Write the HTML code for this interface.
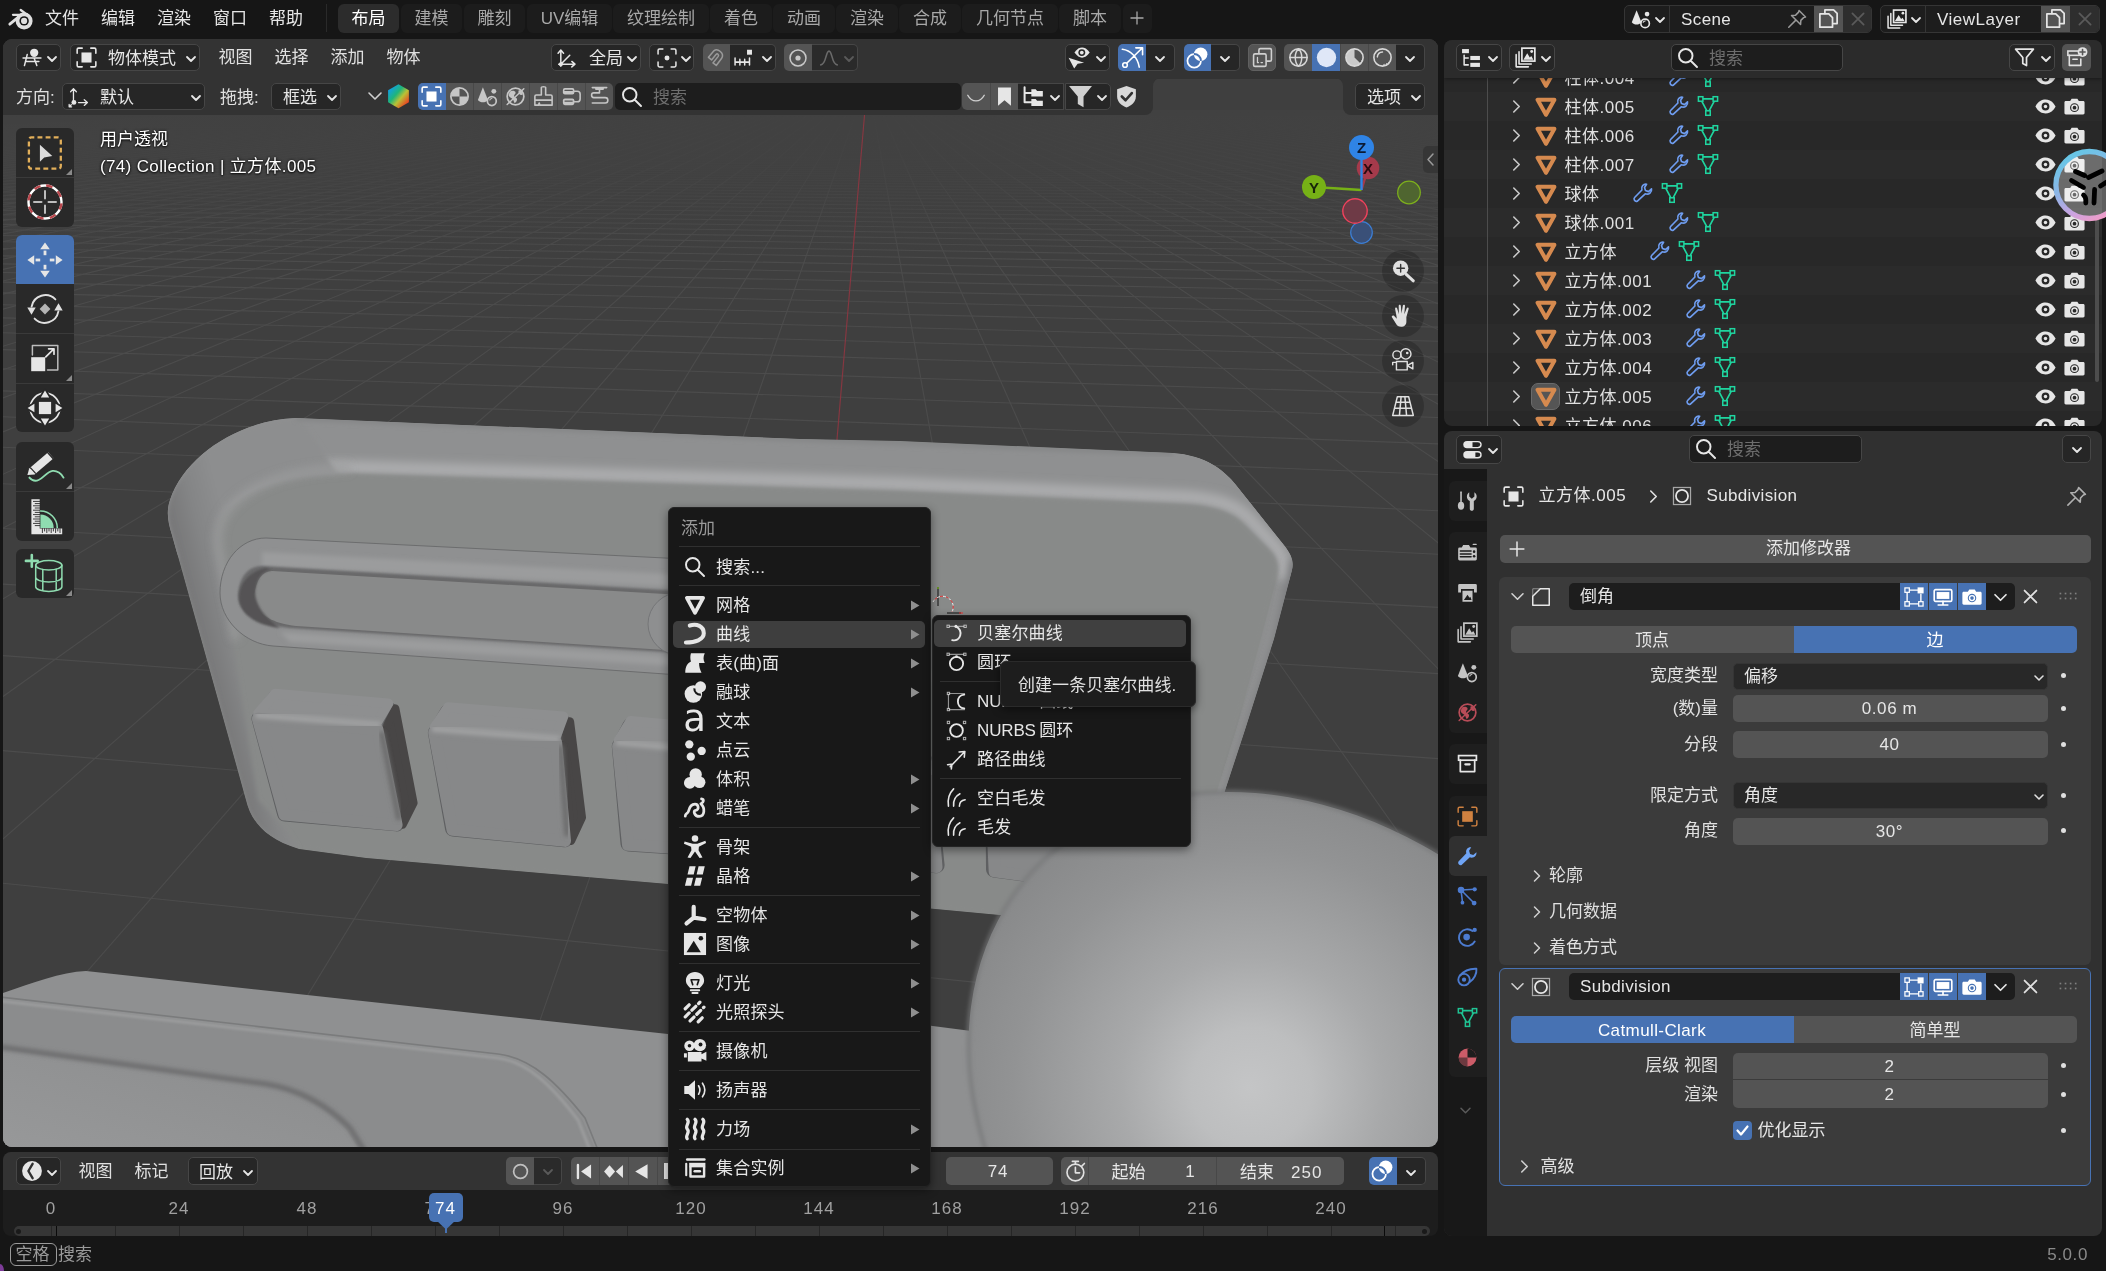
<!DOCTYPE html>
<html lang="zh"><head><meta charset="utf-8"><title>Blender</title>
<style>
html,body{margin:0;padding:0;}
body{width:2106px;height:1271px;overflow:hidden;background:#161616;position:relative;font-family:"Liberation Sans","Noto Sans CJK SC",sans-serif;font-size:17px;color:#e6e6e6;}
div,svg{position:absolute;}
#root{left:0;top:0;width:2106px;height:1271px;will-change:transform;}
svg{overflow:visible;}
</style></head><body><div id="root">
<div style="left:0px;top:0px;width:2106px;height:39px;background:#161616;"></div>
<svg style="left:0px;top:0px;" width="40" height="40" viewBox="0 0 40 40"><circle cx="24.1" cy="20.9" r="8.5" fill="#e0e0e0"/><circle cx="24.1" cy="20.9" r="4.7" fill="#161616"/><circle cx="24.1" cy="20.9" r="3.1" fill="#e0e0e0"/><path d="M13 14.8 L24 14.8 M20.7 10 L29 16.2" stroke="#e0e0e0" stroke-width="2.3" stroke-linecap="round" fill="none"/><path d="M9.8 24.2 L18.4 17.2" stroke="#e0e0e0" stroke-width="2.8" stroke-linecap="round" fill="none"/></svg>
<div style="left:-138px;top:7px;width:400px;height:24px;line-height:24px;text-align:center;font-size:17px;color:#e6e6e6;white-space:nowrap;">文件</div>
<div style="left:-82px;top:7px;width:400px;height:24px;line-height:24px;text-align:center;font-size:17px;color:#e6e6e6;white-space:nowrap;">编辑</div>
<div style="left:-26px;top:7px;width:400px;height:24px;line-height:24px;text-align:center;font-size:17px;color:#e6e6e6;white-space:nowrap;">渲染</div>
<div style="left:30px;top:7px;width:400px;height:24px;line-height:24px;text-align:center;font-size:17px;color:#e6e6e6;white-space:nowrap;">窗口</div>
<div style="left:86px;top:7px;width:400px;height:24px;line-height:24px;text-align:center;font-size:17px;color:#e6e6e6;white-space:nowrap;">帮助</div>
<div style="left:326px;top:4px;width:1px;height:28px;background:#2a2a2a;"></div>
<div style="left:338px;top:4px;width:61px;height:29px;background:#2c2c2c;border-radius:6px;"></div>
<div style="left:168.5px;top:7px;width:400px;height:24px;line-height:24px;text-align:center;font-size:17px;color:#ffffff;white-space:nowrap;">布局</div>
<div style="left:401px;top:4px;width:61px;height:29px;background:#1c1c1c;border-radius:6px;"></div>
<div style="left:231.5px;top:7px;width:400px;height:24px;line-height:24px;text-align:center;font-size:17px;color:#a8a8a8;white-space:nowrap;">建模</div>
<div style="left:464px;top:4px;width:61px;height:29px;background:#1c1c1c;border-radius:6px;"></div>
<div style="left:294.5px;top:7px;width:400px;height:24px;line-height:24px;text-align:center;font-size:17px;color:#a8a8a8;white-space:nowrap;">雕刻</div>
<div style="left:527px;top:4px;width:85px;height:29px;background:#1c1c1c;border-radius:6px;"></div>
<div style="left:369.5px;top:7px;width:400px;height:24px;line-height:24px;text-align:center;font-size:17px;color:#a8a8a8;white-space:nowrap;">UV编辑</div>
<div style="left:613px;top:4px;width:96px;height:29px;background:#1c1c1c;border-radius:6px;"></div>
<div style="left:461.0px;top:7px;width:400px;height:24px;line-height:24px;text-align:center;font-size:17px;color:#a8a8a8;white-space:nowrap;">纹理绘制</div>
<div style="left:710px;top:4px;width:62px;height:29px;background:#1c1c1c;border-radius:6px;"></div>
<div style="left:541.0px;top:7px;width:400px;height:24px;line-height:24px;text-align:center;font-size:17px;color:#a8a8a8;white-space:nowrap;">着色</div>
<div style="left:773px;top:4px;width:62px;height:29px;background:#1c1c1c;border-radius:6px;"></div>
<div style="left:604.0px;top:7px;width:400px;height:24px;line-height:24px;text-align:center;font-size:17px;color:#a8a8a8;white-space:nowrap;">动画</div>
<div style="left:836px;top:4px;width:62px;height:29px;background:#1c1c1c;border-radius:6px;"></div>
<div style="left:667.0px;top:7px;width:400px;height:24px;line-height:24px;text-align:center;font-size:17px;color:#a8a8a8;white-space:nowrap;">渲染</div>
<div style="left:899px;top:4px;width:62px;height:29px;background:#1c1c1c;border-radius:6px;"></div>
<div style="left:730.0px;top:7px;width:400px;height:24px;line-height:24px;text-align:center;font-size:17px;color:#a8a8a8;white-space:nowrap;">合成</div>
<div style="left:962px;top:4px;width:96px;height:29px;background:#1c1c1c;border-radius:6px;"></div>
<div style="left:810.0px;top:7px;width:400px;height:24px;line-height:24px;text-align:center;font-size:17px;color:#a8a8a8;white-space:nowrap;">几何节点</div>
<div style="left:1059px;top:4px;width:62px;height:29px;background:#1c1c1c;border-radius:6px;"></div>
<div style="left:890.0px;top:7px;width:400px;height:24px;line-height:24px;text-align:center;font-size:17px;color:#a8a8a8;white-space:nowrap;">脚本</div>
<div style="left:1123px;top:4px;width:29px;height:29px;background:#1c1c1c;border-radius:6px;"></div>
<svg style="left:1127px;top:8px;" width="20" height="20" viewBox="0 0 20 20"><path d="M10 3.5 L10 16.5 M3.5 10 L16.5 10" stroke="#a8a8a8" stroke-width="1.3" fill="none"/></svg>
<div style="left:1624px;top:5px;width:248px;height:28px;background:#1d1d1d;border-radius:5px;border:1px solid #353535;box-sizing:border-box;"></div>
<div style="left:1669px;top:6px;width:1px;height:26px;background:#353535;"></div>
<svg style="left:1630px;top:8px;" width="22" height="22" viewBox="0 0 16 16"><path d="M4.8 1.6 L8.3 10.4 C6.6 12.6 3 12.6 1.3 10.4 Z" fill="#e6e6e6" /><circle cx="11" cy="11.2" r="3.1" fill="none" stroke="#e6e6e6" stroke-width="1.2"/><path d="M9.6 10.4 A1.8 1.8 0 0 1 11 9.4" fill="none" stroke="#e6e6e6" stroke-width="0.8" stroke-linecap="round" stroke-linejoin="round" /><circle cx="12.4" cy="4.4" r="1.7" fill="#e6e6e6"/></svg>
<svg style="left:1654px;top:14px;" width="12" height="12" viewBox="0 0 12 12"><path d="M2 4.0 L6 8.0 L10 4.0" fill="none" stroke="#e6e6e6" stroke-width="1.8" stroke-linecap="round" stroke-linejoin="round"/></svg>
<div style="left:1681px;top:8px;height:24px;line-height:24px;font-size:17px;color:#e6e6e6;white-space:nowrap;letter-spacing:0.4px;">Scene</div>
<svg style="left:1786px;top:8px;" width="22" height="22" viewBox="0 0 16 16"><path d="M9.5 1.8 L14.2 6.5 L12.8 7 L10.8 9 L10.6 12 L4 5.4 L7 5.2 L9 3.2 Z M7 9 L2 14" fill="none" stroke="#9a9a9a" stroke-width="1.1" stroke-linecap="round" stroke-linejoin="round" /></svg>
<div style="left:1814px;top:6px;width:29px;height:26px;background:#545454;"></div>
<svg style="left:1817px;top:7px;" width="23" height="23" viewBox="0 0 16 16"><path d="M5.5 4.5 L5.5 2 L11.5 2 L14 4.5 L14 11.5 L11.5 11.5" fill="none" stroke="#e6e6e6" stroke-width="1.2" stroke-linecap="round" stroke-linejoin="round" /><path d="M2 4.8 L8.2 4.8 L10.8 7.4 L10.8 14 L2 14 Z" fill="none" stroke="#e6e6e6" stroke-width="1.2" stroke-linecap="round" stroke-linejoin="round" /></svg>
<div style="left:1843px;top:6px;width:28px;height:26px;background:#2e2e2e;border-radius:0 4px 4px 0;"></div>
<svg style="left:1848px;top:9px;" width="20" height="20" viewBox="0 0 16 16"><path d="M3.5 3.5 L12.5 12.5 M12.5 3.5 L3.5 12.5" fill="none" stroke="#5a5a5a" stroke-width="1.4" stroke-linecap="round" stroke-linejoin="round" /></svg>
<div style="left:1880px;top:5px;width:220px;height:28px;background:#1d1d1d;border-radius:5px;border:1px solid #353535;box-sizing:border-box;"></div>
<div style="left:1925px;top:6px;width:1px;height:26px;background:#353535;"></div>
<svg style="left:1886px;top:8px;" width="22" height="22" viewBox="0 0 16 16"><path d="M1.5 6 L1.5 14.5 L10 14.5 M3.5 4 L3.5 12.5 L12 12.5" fill="none" stroke="#e6e6e6" stroke-width="1.1" stroke-linecap="round" stroke-linejoin="round" /><rect x="5.5" y="1.5" width="9" height="9" fill="none" stroke="#e6e6e6" stroke-width="1.2"/><path d="M6.5 9.5 L9.2 5 L11 8 L12 7 L13.5 9.5 Z" fill="#e6e6e6" /><circle cx="12.3" cy="3.8" r="1" fill="#e6e6e6"/></svg>
<svg style="left:1910px;top:14px;" width="12" height="12" viewBox="0 0 12 12"><path d="M2 4.0 L6 8.0 L10 4.0" fill="none" stroke="#e6e6e6" stroke-width="1.8" stroke-linecap="round" stroke-linejoin="round"/></svg>
<div style="left:1937px;top:8px;height:24px;line-height:24px;font-size:17px;color:#e6e6e6;white-space:nowrap;letter-spacing:0.5px;">ViewLayer</div>
<div style="left:2041px;top:6px;width:29px;height:26px;background:#545454;"></div>
<svg style="left:2044px;top:7px;" width="23" height="23" viewBox="0 0 16 16"><path d="M5.5 4.5 L5.5 2 L11.5 2 L14 4.5 L14 11.5 L11.5 11.5" fill="none" stroke="#e6e6e6" stroke-width="1.2" stroke-linecap="round" stroke-linejoin="round" /><path d="M2 4.8 L8.2 4.8 L10.8 7.4 L10.8 14 L2 14 Z" fill="none" stroke="#e6e6e6" stroke-width="1.2" stroke-linecap="round" stroke-linejoin="round" /></svg>
<div style="left:2070px;top:6px;width:29px;height:26px;background:#2e2e2e;border-radius:0 4px 4px 0;"></div>
<svg style="left:2075px;top:9px;" width="20" height="20" viewBox="0 0 16 16"><path d="M3.5 3.5 L12.5 12.5 M12.5 3.5 L3.5 12.5" fill="none" stroke="#5a5a5a" stroke-width="1.4" stroke-linecap="round" stroke-linejoin="round" /></svg>
<svg style="left:0;top:0" width="1445" height="1152" viewBox="0 0 1445 1152"><defs>
<clipPath id="vpclip"><rect x="3" y="39" width="1435" height="1108" rx="9"/></clipPath>
<linearGradient id="gTop" x1="0" y1="0" x2="0.04" y2="1"><stop offset="0" stop-color="#8d8e8f"/><stop offset="0.6" stop-color="#929394"/><stop offset="1" stop-color="#a3a4a5"/></linearGradient>
<linearGradient id="gFront" x1="0" y1="0" x2="1" y2="0.3"><stop offset="0" stop-color="#898a8a"/><stop offset="0.7" stop-color="#898b8a"/><stop offset="1" stop-color="#8f9091"/></linearGradient>
<linearGradient id="gLeft" x1="0" y1="0" x2="1" y2="0"><stop offset="0" stop-color="#7a7a7b"/><stop offset="1" stop-color="#8a8b8b"/></linearGradient>
<linearGradient id="gRight" x1="0" y1="0" x2="1" y2="0.2"><stop offset="0" stop-color="#a2a3a4"/><stop offset="0.5" stop-color="#8c8d8e"/><stop offset="1" stop-color="#7d7e7f"/></linearGradient>
<radialGradient id="gSphere" gradientUnits="userSpaceOnUse" cx="1245" cy="1140" r="400" fx="1238" fy="1142"><stop offset="0" stop-color="#c4c5c6"/><stop offset="0.15" stop-color="#bdbebf"/><stop offset="0.33" stop-color="#a8a9aa"/><stop offset="0.6" stop-color="#929394"/><stop offset="0.8" stop-color="#878889"/><stop offset="1" stop-color="#808182"/></radialGradient>
<linearGradient id="gBtnSide" x1="0" y1="0" x2="1" y2="0"><stop offset="0" stop-color="#5c5b5b"/><stop offset="1" stop-color="#484747"/></linearGradient>
<linearGradient id="gPlat" x1="1" y1="0" x2="0" y2="1"><stop offset="0" stop-color="#8a8b8c"/><stop offset="1" stop-color="#98999a"/></linearGradient>
<linearGradient id="gLeftBand" gradientUnits="userSpaceOnUse" x1="168" y1="520" x2="222" y2="506"><stop offset="0" stop-color="#767677"/><stop offset="0.5" stop-color="#848586"/><stop offset="1" stop-color="#8d8e8f"/></linearGradient>
<filter id="b2"><feGaussianBlur stdDeviation="2"/></filter>
<filter id="b4"><feGaussianBlur stdDeviation="4"/></filter>
<filter id="b1"><feGaussianBlur stdDeviation="1"/></filter>
</defs><g clip-path="url(#vpclip)"><rect x="3" y="39" width="1435" height="1108" fill="#3f3f3f"/><line x1="181.5" y1="116" x2="-20475.8" y2="1200" stroke="#4c4c4c" stroke-width="1.1" opacity="1"/>
<line x1="190.9" y1="116" x2="-20180.7" y2="1200" stroke="#4c4c4c" stroke-width="1.1" opacity="1"/>
<line x1="200.4" y1="116" x2="-19885.6" y2="1200" stroke="#4c4c4c" stroke-width="1.1" opacity="1"/>
<line x1="209.9" y1="116" x2="-19590.5" y2="1200" stroke="#4c4c4c" stroke-width="1.1" opacity="1"/>
<line x1="219.4" y1="116" x2="-19295.4" y2="1200" stroke="#4c4c4c" stroke-width="1.1" opacity="1"/>
<line x1="228.9" y1="116" x2="-19000.3" y2="1200" stroke="#4c4c4c" stroke-width="1.1" opacity="1"/>
<line x1="238.4" y1="116" x2="-18705.1" y2="1200" stroke="#4c4c4c" stroke-width="1.1" opacity="1"/>
<line x1="247.9" y1="116" x2="-18410.0" y2="1200" stroke="#4c4c4c" stroke-width="1.1" opacity="1"/>
<line x1="257.4" y1="116" x2="-18114.9" y2="1200" stroke="#4c4c4c" stroke-width="1.1" opacity="1"/>
<line x1="266.8" y1="116" x2="-17819.8" y2="1200" stroke="#4c4c4c" stroke-width="1.1" opacity="1"/>
<line x1="276.3" y1="116" x2="-17524.7" y2="1200" stroke="#4c4c4c" stroke-width="1.1" opacity="1"/>
<line x1="285.8" y1="116" x2="-17229.6" y2="1200" stroke="#4c4c4c" stroke-width="1.1" opacity="1"/>
<line x1="295.3" y1="116" x2="-16934.5" y2="1200" stroke="#4c4c4c" stroke-width="1.1" opacity="1"/>
<line x1="304.8" y1="116" x2="-16639.3" y2="1200" stroke="#4c4c4c" stroke-width="1.1" opacity="1"/>
<line x1="314.3" y1="116" x2="-16344.2" y2="1200" stroke="#4c4c4c" stroke-width="1.1" opacity="1"/>
<line x1="323.8" y1="116" x2="-16049.1" y2="1200" stroke="#4c4c4c" stroke-width="1.1" opacity="1"/>
<line x1="333.2" y1="116" x2="-15754.0" y2="1200" stroke="#4c4c4c" stroke-width="1.1" opacity="1"/>
<line x1="342.7" y1="116" x2="-15458.9" y2="1200" stroke="#4c4c4c" stroke-width="1.1" opacity="1"/>
<line x1="352.2" y1="116" x2="-15163.8" y2="1200" stroke="#4c4c4c" stroke-width="1.1" opacity="1"/>
<line x1="361.7" y1="116" x2="-14868.6" y2="1200" stroke="#4c4c4c" stroke-width="1.1" opacity="1"/>
<line x1="371.2" y1="116" x2="-14573.5" y2="1200" stroke="#4c4c4c" stroke-width="1.1" opacity="1"/>
<line x1="380.7" y1="116" x2="-14278.4" y2="1200" stroke="#4c4c4c" stroke-width="1.1" opacity="1"/>
<line x1="390.2" y1="116" x2="-13983.3" y2="1200" stroke="#4c4c4c" stroke-width="1.1" opacity="1"/>
<line x1="399.6" y1="116" x2="-13688.2" y2="1200" stroke="#4c4c4c" stroke-width="1.1" opacity="1"/>
<line x1="409.1" y1="116" x2="-13393.1" y2="1200" stroke="#4c4c4c" stroke-width="1.1" opacity="1"/>
<line x1="418.6" y1="116" x2="-13097.9" y2="1200" stroke="#4c4c4c" stroke-width="1.1" opacity="1"/>
<line x1="428.1" y1="116" x2="-12802.8" y2="1200" stroke="#4c4c4c" stroke-width="1.1" opacity="1"/>
<line x1="437.6" y1="116" x2="-12507.7" y2="1200" stroke="#4c4c4c" stroke-width="1.1" opacity="1"/>
<line x1="447.1" y1="116" x2="-12212.6" y2="1200" stroke="#4c4c4c" stroke-width="1.1" opacity="1"/>
<line x1="456.6" y1="116" x2="-11917.5" y2="1200" stroke="#4c4c4c" stroke-width="1.1" opacity="1"/>
<line x1="466.0" y1="116" x2="-11622.4" y2="1200" stroke="#4c4c4c" stroke-width="1.1" opacity="1"/>
<line x1="475.5" y1="116" x2="-11327.3" y2="1200" stroke="#4c4c4c" stroke-width="1.1" opacity="1"/>
<line x1="485.0" y1="116" x2="-11032.1" y2="1200" stroke="#4c4c4c" stroke-width="1.1" opacity="1"/>
<line x1="494.5" y1="116" x2="-10737.0" y2="1200" stroke="#4c4c4c" stroke-width="1.1" opacity="1"/>
<line x1="504.0" y1="116" x2="-10441.9" y2="1200" stroke="#4c4c4c" stroke-width="1.1" opacity="1"/>
<line x1="513.5" y1="116" x2="-10146.8" y2="1200" stroke="#4c4c4c" stroke-width="1.1" opacity="1"/>
<line x1="523.0" y1="116" x2="-9851.7" y2="1200" stroke="#4c4c4c" stroke-width="1.1" opacity="1"/>
<line x1="532.4" y1="116" x2="-9556.6" y2="1200" stroke="#4c4c4c" stroke-width="1.1" opacity="1"/>
<line x1="541.9" y1="116" x2="-9261.4" y2="1200" stroke="#4c4c4c" stroke-width="1.1" opacity="1"/>
<line x1="551.4" y1="116" x2="-8966.3" y2="1200" stroke="#4c4c4c" stroke-width="1.1" opacity="1"/>
<line x1="560.9" y1="116" x2="-8671.2" y2="1200" stroke="#4c4c4c" stroke-width="1.1" opacity="1"/>
<line x1="570.4" y1="116" x2="-8376.1" y2="1200" stroke="#4c4c4c" stroke-width="1.1" opacity="1"/>
<line x1="579.9" y1="116" x2="-8081.0" y2="1200" stroke="#4c4c4c" stroke-width="1.1" opacity="1"/>
<line x1="589.4" y1="116" x2="-7785.9" y2="1200" stroke="#4c4c4c" stroke-width="1.1" opacity="1"/>
<line x1="598.8" y1="116" x2="-7490.8" y2="1200" stroke="#4c4c4c" stroke-width="1.1" opacity="1"/>
<line x1="608.3" y1="116" x2="-7195.6" y2="1200" stroke="#4c4c4c" stroke-width="1.1" opacity="1"/>
<line x1="617.8" y1="116" x2="-6900.5" y2="1200" stroke="#4c4c4c" stroke-width="1.1" opacity="1"/>
<line x1="627.3" y1="116" x2="-6605.4" y2="1200" stroke="#4c4c4c" stroke-width="1.1" opacity="1"/>
<line x1="636.8" y1="116" x2="-6310.3" y2="1200" stroke="#4c4c4c" stroke-width="1.1" opacity="1"/>
<line x1="646.3" y1="116" x2="-6015.2" y2="1200" stroke="#4c4c4c" stroke-width="1.1" opacity="1"/>
<line x1="655.8" y1="116" x2="-5720.1" y2="1200" stroke="#4c4c4c" stroke-width="1.1" opacity="1"/>
<line x1="665.2" y1="116" x2="-5424.9" y2="1200" stroke="#4c4c4c" stroke-width="1.1" opacity="1"/>
<line x1="674.7" y1="116" x2="-5129.8" y2="1200" stroke="#4c4c4c" stroke-width="1.1" opacity="1"/>
<line x1="684.2" y1="116" x2="-4834.7" y2="1200" stroke="#4c4c4c" stroke-width="1.1" opacity="1"/>
<line x1="693.7" y1="116" x2="-4539.6" y2="1200" stroke="#4c4c4c" stroke-width="1.1" opacity="1"/>
<line x1="703.2" y1="116" x2="-4244.5" y2="1200" stroke="#4c4c4c" stroke-width="1.1" opacity="1"/>
<line x1="712.7" y1="116" x2="-3949.4" y2="1200" stroke="#4c4c4c" stroke-width="1.1" opacity="1"/>
<line x1="722.2" y1="116" x2="-3654.2" y2="1200" stroke="#4c4c4c" stroke-width="1.1" opacity="1"/>
<line x1="731.6" y1="116" x2="-3359.1" y2="1200" stroke="#4c4c4c" stroke-width="1.1" opacity="1"/>
<line x1="741.1" y1="116" x2="-3064.0" y2="1200" stroke="#4c4c4c" stroke-width="1.1" opacity="1"/>
<line x1="750.6" y1="116" x2="-2768.9" y2="1200" stroke="#4c4c4c" stroke-width="1.1" opacity="1"/>
<line x1="760.1" y1="116" x2="-2473.8" y2="1200" stroke="#4c4c4c" stroke-width="1.1" opacity="1"/>
<line x1="769.6" y1="116" x2="-2178.7" y2="1200" stroke="#4c4c4c" stroke-width="1.1" opacity="1"/>
<line x1="779.1" y1="116" x2="-1883.6" y2="1200" stroke="#4c4c4c" stroke-width="1.1" opacity="1"/>
<line x1="788.6" y1="116" x2="-1588.4" y2="1200" stroke="#4c4c4c" stroke-width="1.1" opacity="1"/>
<line x1="798.0" y1="116" x2="-1293.3" y2="1200" stroke="#4c4c4c" stroke-width="1.1" opacity="1"/>
<line x1="807.5" y1="116" x2="-998.2" y2="1200" stroke="#4c4c4c" stroke-width="1.1" opacity="1"/>
<line x1="817.0" y1="116" x2="-703.1" y2="1200" stroke="#4c4c4c" stroke-width="1.1" opacity="1"/>
<line x1="826.5" y1="116" x2="-408.0" y2="1200" stroke="#4c4c4c" stroke-width="1.1" opacity="1"/>
<line x1="836.0" y1="116" x2="-112.9" y2="1200" stroke="#4c4c4c" stroke-width="1.1" opacity="1"/>
<line x1="845.5" y1="116" x2="182.3" y2="1200" stroke="#4c4c4c" stroke-width="1.1" opacity="1"/>
<line x1="855.0" y1="116" x2="477.4" y2="1200" stroke="#4c4c4c" stroke-width="1.1" opacity="1"/>
<line x1="873.9" y1="116" x2="1067.6" y2="1200" stroke="#4c4c4c" stroke-width="1.1" opacity="1"/>
<line x1="883.4" y1="116" x2="1362.7" y2="1200" stroke="#4c4c4c" stroke-width="1.1" opacity="1"/>
<line x1="892.9" y1="116" x2="1657.8" y2="1200" stroke="#4c4c4c" stroke-width="1.1" opacity="1"/>
<line x1="902.4" y1="116" x2="1952.9" y2="1200" stroke="#4c4c4c" stroke-width="1.1" opacity="1"/>
<line x1="911.9" y1="116" x2="2248.1" y2="1200" stroke="#4c4c4c" stroke-width="1.1" opacity="1"/>
<line x1="921.4" y1="116" x2="2543.2" y2="1200" stroke="#4c4c4c" stroke-width="1.1" opacity="1"/>
<line x1="930.8" y1="116" x2="2838.3" y2="1200" stroke="#4c4c4c" stroke-width="1.1" opacity="1"/>
<line x1="940.3" y1="116" x2="3133.4" y2="1200" stroke="#4c4c4c" stroke-width="1.1" opacity="1"/>
<line x1="949.8" y1="116" x2="3428.5" y2="1200" stroke="#4c4c4c" stroke-width="1.1" opacity="1"/>
<line x1="959.3" y1="116" x2="3723.6" y2="1200" stroke="#4c4c4c" stroke-width="1.1" opacity="1"/>
<line x1="968.8" y1="116" x2="4018.8" y2="1200" stroke="#4c4c4c" stroke-width="1.1" opacity="1"/>
<line x1="978.3" y1="116" x2="4313.9" y2="1200" stroke="#4c4c4c" stroke-width="1.1" opacity="1"/>
<line x1="987.8" y1="116" x2="4609.0" y2="1200" stroke="#4c4c4c" stroke-width="1.1" opacity="1"/>
<line x1="997.2" y1="116" x2="4904.1" y2="1200" stroke="#4c4c4c" stroke-width="1.1" opacity="1"/>
<line x1="1006.7" y1="116" x2="5199.2" y2="1200" stroke="#4c4c4c" stroke-width="1.1" opacity="1"/>
<line x1="1016.2" y1="116" x2="5494.3" y2="1200" stroke="#4c4c4c" stroke-width="1.1" opacity="1"/>
<line x1="1025.7" y1="116" x2="5789.5" y2="1200" stroke="#4c4c4c" stroke-width="1.1" opacity="1"/>
<line x1="1035.2" y1="116" x2="6084.6" y2="1200" stroke="#4c4c4c" stroke-width="1.1" opacity="1"/>
<line x1="1044.7" y1="116" x2="6379.7" y2="1200" stroke="#4c4c4c" stroke-width="1.1" opacity="1"/>
<line x1="1054.2" y1="116" x2="6674.8" y2="1200" stroke="#4c4c4c" stroke-width="1.1" opacity="1"/>
<line x1="1063.6" y1="116" x2="6969.9" y2="1200" stroke="#4c4c4c" stroke-width="1.1" opacity="1"/>
<line x1="1073.1" y1="116" x2="7265.0" y2="1200" stroke="#4c4c4c" stroke-width="1.1" opacity="1"/>
<line x1="1082.6" y1="116" x2="7560.1" y2="1200" stroke="#4c4c4c" stroke-width="1.1" opacity="1"/>
<line x1="1092.1" y1="116" x2="7855.3" y2="1200" stroke="#4c4c4c" stroke-width="1.1" opacity="1"/>
<line x1="1101.6" y1="116" x2="8150.4" y2="1200" stroke="#4c4c4c" stroke-width="1.1" opacity="1"/>
<line x1="1111.1" y1="116" x2="8445.5" y2="1200" stroke="#4c4c4c" stroke-width="1.1" opacity="1"/>
<line x1="1120.6" y1="116" x2="8740.6" y2="1200" stroke="#4c4c4c" stroke-width="1.1" opacity="1"/>
<line x1="1130.1" y1="116" x2="9035.7" y2="1200" stroke="#4c4c4c" stroke-width="1.1" opacity="1"/>
<line x1="1139.5" y1="116" x2="9330.8" y2="1200" stroke="#4c4c4c" stroke-width="1.1" opacity="1"/>
<line x1="1149.0" y1="116" x2="9626.0" y2="1200" stroke="#4c4c4c" stroke-width="1.1" opacity="1"/>
<line x1="1158.5" y1="116" x2="9921.1" y2="1200" stroke="#4c4c4c" stroke-width="1.1" opacity="1"/>
<line x1="1168.0" y1="116" x2="10216.2" y2="1200" stroke="#4c4c4c" stroke-width="1.1" opacity="1"/>
<line x1="1177.5" y1="116" x2="10511.3" y2="1200" stroke="#4c4c4c" stroke-width="1.1" opacity="1"/>
<line x1="1187.0" y1="116" x2="10806.4" y2="1200" stroke="#4c4c4c" stroke-width="1.1" opacity="1"/>
<line x1="1196.5" y1="116" x2="11101.5" y2="1200" stroke="#4c4c4c" stroke-width="1.1" opacity="1"/>
<line x1="1205.9" y1="116" x2="11396.7" y2="1200" stroke="#4c4c4c" stroke-width="1.1" opacity="1"/>
<line x1="1215.4" y1="116" x2="11691.8" y2="1200" stroke="#4c4c4c" stroke-width="1.1" opacity="1"/>
<line x1="1224.9" y1="116" x2="11986.9" y2="1200" stroke="#4c4c4c" stroke-width="1.1" opacity="1"/>
<line x1="1234.4" y1="116" x2="12282.0" y2="1200" stroke="#4c4c4c" stroke-width="1.1" opacity="1"/>
<line x1="1243.9" y1="116" x2="12577.1" y2="1200" stroke="#4c4c4c" stroke-width="1.1" opacity="1"/>
<line x1="1253.4" y1="116" x2="12872.2" y2="1200" stroke="#4c4c4c" stroke-width="1.1" opacity="1"/>
<line x1="1262.9" y1="116" x2="13167.3" y2="1200" stroke="#4c4c4c" stroke-width="1.1" opacity="1"/>
<line x1="1272.3" y1="116" x2="13462.5" y2="1200" stroke="#4c4c4c" stroke-width="1.1" opacity="1"/>
<line x1="1281.8" y1="116" x2="13757.6" y2="1200" stroke="#4c4c4c" stroke-width="1.1" opacity="1"/>
<line x1="1291.3" y1="116" x2="14052.7" y2="1200" stroke="#4c4c4c" stroke-width="1.1" opacity="1"/>
<line x1="1300.8" y1="116" x2="14347.8" y2="1200" stroke="#4c4c4c" stroke-width="1.1" opacity="1"/>
<line x1="1310.3" y1="116" x2="14642.9" y2="1200" stroke="#4c4c4c" stroke-width="1.1" opacity="1"/>
<line x1="1319.8" y1="116" x2="14938.0" y2="1200" stroke="#4c4c4c" stroke-width="1.1" opacity="1"/>
<line x1="1329.3" y1="116" x2="15233.2" y2="1200" stroke="#4c4c4c" stroke-width="1.1" opacity="1"/>
<line x1="1338.7" y1="116" x2="15528.3" y2="1200" stroke="#4c4c4c" stroke-width="1.1" opacity="1"/>
<line x1="1348.2" y1="116" x2="15823.4" y2="1200" stroke="#4c4c4c" stroke-width="1.1" opacity="1"/>
<line x1="1357.7" y1="116" x2="16118.5" y2="1200" stroke="#4c4c4c" stroke-width="1.1" opacity="1"/>
<line x1="1367.2" y1="116" x2="16413.6" y2="1200" stroke="#4c4c4c" stroke-width="1.1" opacity="1"/>
<line x1="1376.7" y1="116" x2="16708.7" y2="1200" stroke="#4c4c4c" stroke-width="1.1" opacity="1"/>
<line x1="1386.2" y1="116" x2="17003.8" y2="1200" stroke="#4c4c4c" stroke-width="1.1" opacity="1"/>
<line x1="1395.7" y1="116" x2="17299.0" y2="1200" stroke="#4c4c4c" stroke-width="1.1" opacity="1"/>
<line x1="1405.1" y1="116" x2="17594.1" y2="1200" stroke="#4c4c4c" stroke-width="1.1" opacity="1"/>
<line x1="1414.6" y1="116" x2="17889.2" y2="1200" stroke="#4c4c4c" stroke-width="1.1" opacity="1"/>
<line x1="1424.1" y1="116" x2="18184.3" y2="1200" stroke="#4c4c4c" stroke-width="1.1" opacity="1"/>
<line x1="1433.6" y1="116" x2="18479.4" y2="1200" stroke="#4c4c4c" stroke-width="1.1" opacity="1"/>
<line x1="1443.1" y1="116" x2="18774.5" y2="1200" stroke="#4c4c4c" stroke-width="1.1" opacity="1"/>
<line x1="1452.6" y1="116" x2="19069.7" y2="1200" stroke="#4c4c4c" stroke-width="1.1" opacity="1"/>
<line x1="1462.1" y1="116" x2="19364.8" y2="1200" stroke="#4c4c4c" stroke-width="1.1" opacity="1"/>
<line x1="1471.5" y1="116" x2="19659.9" y2="1200" stroke="#4c4c4c" stroke-width="1.1" opacity="1"/>
<line x1="1481.0" y1="116" x2="19955.0" y2="1200" stroke="#4c4c4c" stroke-width="1.1" opacity="1"/>
<line x1="1490.5" y1="116" x2="20250.1" y2="1200" stroke="#4c4c4c" stroke-width="1.1" opacity="1"/>
<line x1="1500.0" y1="116" x2="20545.2" y2="1200" stroke="#4c4c4c" stroke-width="1.1" opacity="1"/>
<line x1="1509.5" y1="116" x2="20840.4" y2="1200" stroke="#4c4c4c" stroke-width="1.1" opacity="1"/>
<line x1="0" y1="1407.4" x2="1440" y2="1654.0" stroke="#4c4c4c" stroke-width="1.1" opacity="1.00"/>
<line x1="0" y1="1080.6" x2="1440" y2="1265.0" stroke="#4c4c4c" stroke-width="1.1" opacity="1.00"/>
<line x1="0" y1="882.9" x2="1440" y2="1029.6" stroke="#4c4c4c" stroke-width="1.1" opacity="1.00"/>
<line x1="0" y1="750.4" x2="1440" y2="871.9" stroke="#4c4c4c" stroke-width="1.1" opacity="1.00"/>
<line x1="0" y1="655.4" x2="1440" y2="758.8" stroke="#4c4c4c" stroke-width="1.1" opacity="1.00"/>
<line x1="0" y1="583.9" x2="1440" y2="673.8" stroke="#4c4c4c" stroke-width="1.1" opacity="1.00"/>
<line x1="0" y1="528.3" x2="1440" y2="607.5" stroke="#4c4c4c" stroke-width="1.1" opacity="1.00"/>
<line x1="0" y1="483.6" x2="1440" y2="554.4" stroke="#4c4c4c" stroke-width="1.1" opacity="1.00"/>
<line x1="0" y1="447.1" x2="1440" y2="510.9" stroke="#4c4c4c" stroke-width="1.1" opacity="1.00"/>
<line x1="0" y1="416.6" x2="1440" y2="474.6" stroke="#4c4c4c" stroke-width="1.1" opacity="1.00"/>
<line x1="0" y1="390.8" x2="1440" y2="443.9" stroke="#4c4c4c" stroke-width="1.1" opacity="1.00"/>
<line x1="0" y1="368.7" x2="1440" y2="417.5" stroke="#4c4c4c" stroke-width="1.1" opacity="1.00"/>
<line x1="0" y1="349.5" x2="1440" y2="394.7" stroke="#4c4c4c" stroke-width="1.1" opacity="1.00"/>
<line x1="0" y1="332.6" x2="1440" y2="374.6" stroke="#4c4c4c" stroke-width="1.1" opacity="1.00"/>
<line x1="0" y1="317.8" x2="1440" y2="357.0" stroke="#4c4c4c" stroke-width="1.1" opacity="1.00"/>
<line x1="0" y1="304.6" x2="1440" y2="341.3" stroke="#4c4c4c" stroke-width="1.1" opacity="1.00"/>
<line x1="0" y1="292.8" x2="1440" y2="327.2" stroke="#4c4c4c" stroke-width="1.1" opacity="1.00"/>
<line x1="0" y1="282.1" x2="1440" y2="314.5" stroke="#4c4c4c" stroke-width="1.1" opacity="1.00"/>
<line x1="0" y1="272.5" x2="1440" y2="303.1" stroke="#4c4c4c" stroke-width="1.1" opacity="1.00"/>
<line x1="0" y1="263.8" x2="1440" y2="292.6" stroke="#4c4c4c" stroke-width="1.1" opacity="1.00"/>
<line x1="0" y1="255.8" x2="1440" y2="283.1" stroke="#4c4c4c" stroke-width="1.1" opacity="1.00"/>
<line x1="0" y1="248.4" x2="1440" y2="274.4" stroke="#4c4c4c" stroke-width="1.1" opacity="1.00"/>
<line x1="0" y1="241.7" x2="1440" y2="266.4" stroke="#4c4c4c" stroke-width="1.1" opacity="1.00"/>
<line x1="0" y1="235.5" x2="1440" y2="259.0" stroke="#4c4c4c" stroke-width="1.1" opacity="1.00"/>
<line x1="0" y1="229.7" x2="1440" y2="252.1" stroke="#4c4c4c" stroke-width="1.1" opacity="1.00"/>
<line x1="0" y1="224.3" x2="1440" y2="245.7" stroke="#4c4c4c" stroke-width="1.1" opacity="1.00"/>
<line x1="0" y1="219.3" x2="1440" y2="239.8" stroke="#4c4c4c" stroke-width="1.1" opacity="1.00"/>
<line x1="0" y1="214.7" x2="1440" y2="234.2" stroke="#4c4c4c" stroke-width="1.1" opacity="0.97"/>
<line x1="0" y1="210.3" x2="1440" y2="229.0" stroke="#4c4c4c" stroke-width="1.1" opacity="0.93"/>
<line x1="0" y1="206.2" x2="1440" y2="224.2" stroke="#4c4c4c" stroke-width="1.1" opacity="0.89"/>
<line x1="0" y1="202.4" x2="1440" y2="219.6" stroke="#4c4c4c" stroke-width="1.1" opacity="0.86"/>
<line x1="0" y1="198.8" x2="1440" y2="215.3" stroke="#4c4c4c" stroke-width="1.1" opacity="0.82"/>
<line x1="0" y1="195.4" x2="1440" y2="211.3" stroke="#4c4c4c" stroke-width="1.1" opacity="0.79"/>
<line x1="0" y1="192.2" x2="1440" y2="207.4" stroke="#4c4c4c" stroke-width="1.1" opacity="0.76"/>
<line x1="0" y1="189.1" x2="1440" y2="203.8" stroke="#4c4c4c" stroke-width="1.1" opacity="0.74"/>
<line x1="0" y1="186.2" x2="1440" y2="200.4" stroke="#4c4c4c" stroke-width="1.1" opacity="0.71"/>
<line x1="0" y1="183.5" x2="1440" y2="197.1" stroke="#4c4c4c" stroke-width="1.1" opacity="0.68"/>
<line x1="0" y1="180.9" x2="1440" y2="194.0" stroke="#4c4c4c" stroke-width="1.1" opacity="0.66"/>
<line x1="0" y1="178.4" x2="1440" y2="191.1" stroke="#4c4c4c" stroke-width="1.1" opacity="0.64"/>
<line x1="0" y1="176.1" x2="1440" y2="188.3" stroke="#4c4c4c" stroke-width="1.1" opacity="0.62"/>
<line x1="0" y1="173.8" x2="1440" y2="185.6" stroke="#4c4c4c" stroke-width="1.1" opacity="0.60"/>
<line x1="0" y1="171.7" x2="1440" y2="183.0" stroke="#4c4c4c" stroke-width="1.1" opacity="0.58"/>
<line x1="0" y1="169.6" x2="1440" y2="180.6" stroke="#4c4c4c" stroke-width="1.1" opacity="0.56"/>
<line x1="0" y1="167.7" x2="1440" y2="178.3" stroke="#4c4c4c" stroke-width="1.1" opacity="0.54"/>
<line x1="0" y1="165.8" x2="1440" y2="176.0" stroke="#4c4c4c" stroke-width="1.1" opacity="0.52"/>
<line x1="0" y1="164.0" x2="1440" y2="173.9" stroke="#4c4c4c" stroke-width="1.1" opacity="0.50"/>
<line x1="0" y1="162.3" x2="1440" y2="171.8" stroke="#4c4c4c" stroke-width="1.1" opacity="0.49"/>
<line x1="0" y1="160.6" x2="1440" y2="169.9" stroke="#4c4c4c" stroke-width="1.1" opacity="0.47"/>
<line x1="0" y1="159.0" x2="1440" y2="168.0" stroke="#4c4c4c" stroke-width="1.1" opacity="0.46"/>
<line x1="0" y1="157.5" x2="1440" y2="166.2" stroke="#4c4c4c" stroke-width="1.1" opacity="0.45"/>
<line x1="0" y1="156.0" x2="1440" y2="164.4" stroke="#4c4c4c" stroke-width="1.1" opacity="0.43"/>
<line x1="0" y1="154.6" x2="1440" y2="162.7" stroke="#4c4c4c" stroke-width="1.1" opacity="0.42"/>
<line x1="0" y1="153.2" x2="1440" y2="161.1" stroke="#4c4c4c" stroke-width="1.1" opacity="0.41"/>
<line x1="0" y1="151.9" x2="1440" y2="159.5" stroke="#4c4c4c" stroke-width="1.1" opacity="0.39"/>
<line x1="0" y1="150.6" x2="1440" y2="158.0" stroke="#4c4c4c" stroke-width="1.1" opacity="0.38"/>
<line x1="0" y1="149.4" x2="1440" y2="156.5" stroke="#4c4c4c" stroke-width="1.1" opacity="0.37"/>
<line x1="0" y1="148.2" x2="1440" y2="155.1" stroke="#4c4c4c" stroke-width="1.1" opacity="0.36"/>
<line x1="0" y1="147.1" x2="1440" y2="153.8" stroke="#4c4c4c" stroke-width="1.1" opacity="0.35"/>
<line x1="0" y1="146.0" x2="1440" y2="152.4" stroke="#4c4c4c" stroke-width="1.1" opacity="0.34"/>
<line x1="0" y1="144.9" x2="1440" y2="151.2" stroke="#4c4c4c" stroke-width="1.1" opacity="0.33"/>
<line x1="0" y1="143.9" x2="1440" y2="149.9" stroke="#4c4c4c" stroke-width="1.1" opacity="0.32"/>
<line x1="0" y1="142.9" x2="1440" y2="148.7" stroke="#4c4c4c" stroke-width="1.1" opacity="0.31"/>
<line x1="0" y1="141.9" x2="1440" y2="147.6" stroke="#4c4c4c" stroke-width="1.1" opacity="0.30"/>
<line x1="0" y1="140.9" x2="1440" y2="146.4" stroke="#4c4c4c" stroke-width="1.1" opacity="0.29"/>
<line x1="0" y1="140.0" x2="1440" y2="145.3" stroke="#4c4c4c" stroke-width="1.1" opacity="0.28"/>
<line x1="0" y1="139.1" x2="1440" y2="144.3" stroke="#4c4c4c" stroke-width="1.1" opacity="0.28"/>
<line x1="0" y1="138.3" x2="1440" y2="143.3" stroke="#4c4c4c" stroke-width="1.1" opacity="0.27"/>
<line x1="0" y1="137.4" x2="1440" y2="142.3" stroke="#4c4c4c" stroke-width="1.1" opacity="0.26"/>
<line x1="0" y1="136.6" x2="1440" y2="141.3" stroke="#4c4c4c" stroke-width="1.1" opacity="0.25"/>
<line x1="0" y1="135.8" x2="1440" y2="140.3" stroke="#4c4c4c" stroke-width="1.1" opacity="0.25"/>
<line x1="0" y1="135.0" x2="1440" y2="139.4" stroke="#4c4c4c" stroke-width="1.1" opacity="0.24"/>
<line x1="0" y1="134.3" x2="1440" y2="138.5" stroke="#4c4c4c" stroke-width="1.1" opacity="0.23"/>
<line x1="0" y1="133.6" x2="1440" y2="137.7" stroke="#4c4c4c" stroke-width="1.1" opacity="0.23"/>
<line x1="0" y1="132.8" x2="1440" y2="136.8" stroke="#4c4c4c" stroke-width="1.1" opacity="0.22"/>
<line x1="0" y1="132.1" x2="1440" y2="136.0" stroke="#4c4c4c" stroke-width="1.1" opacity="0.21"/>
<line x1="0" y1="131.5" x2="1440" y2="135.2" stroke="#4c4c4c" stroke-width="1.1" opacity="0.21"/>
<line x1="0" y1="130.8" x2="1440" y2="134.4" stroke="#4c4c4c" stroke-width="1.1" opacity="0.20"/>
<line x1="0" y1="130.2" x2="1440" y2="133.6" stroke="#4c4c4c" stroke-width="1.1" opacity="0.19"/>
<line x1="0" y1="129.5" x2="1440" y2="132.9" stroke="#4c4c4c" stroke-width="1.1" opacity="0.19"/>
<line x1="0" y1="128.9" x2="1440" y2="132.1" stroke="#4c4c4c" stroke-width="1.1" opacity="0.18"/>
<line x1="0" y1="128.3" x2="1440" y2="131.4" stroke="#4c4c4c" stroke-width="1.1" opacity="0.18"/>
<line x1="0" y1="127.7" x2="1440" y2="130.7" stroke="#4c4c4c" stroke-width="1.1" opacity="0.17"/>
<line x1="0" y1="127.2" x2="1440" y2="130.1" stroke="#4c4c4c" stroke-width="1.1" opacity="0.17"/>
<line x1="0" y1="126.6" x2="1440" y2="129.4" stroke="#4c4c4c" stroke-width="1.1" opacity="0.16"/>
<line x1="0" y1="126.1" x2="1440" y2="128.8" stroke="#4c4c4c" stroke-width="1.1" opacity="0.16"/>
<line x1="0" y1="125.5" x2="1440" y2="128.1" stroke="#4c4c4c" stroke-width="1.1" opacity="0.15"/>
<line x1="0" y1="125.0" x2="1440" y2="127.5" stroke="#4c4c4c" stroke-width="1.1" opacity="0.15"/>
<line x1="0" y1="124.5" x2="1440" y2="126.9" stroke="#4c4c4c" stroke-width="1.1" opacity="0.14"/>
<line x1="0" y1="124.0" x2="1440" y2="126.3" stroke="#4c4c4c" stroke-width="1.1" opacity="0.14"/>
<line x1="0" y1="123.5" x2="1440" y2="125.7" stroke="#4c4c4c" stroke-width="1.1" opacity="0.13"/>
<line x1="0" y1="123.1" x2="1440" y2="125.2" stroke="#4c4c4c" stroke-width="1.1" opacity="0.13"/>
<line x1="0" y1="122.6" x2="1440" y2="124.6" stroke="#4c4c4c" stroke-width="1.1" opacity="0.12"/>
<line x1="0" y1="122.1" x2="1440" y2="124.1" stroke="#4c4c4c" stroke-width="1.1" opacity="0.12"/>
<line x1="0" y1="121.7" x2="1440" y2="123.5" stroke="#4c4c4c" stroke-width="1.1" opacity="0.12"/>
<line x1="0" y1="121.3" x2="1440" y2="123.0" stroke="#4c4c4c" stroke-width="1.1" opacity="0.11"/>
<line x1="0" y1="120.8" x2="1440" y2="122.5" stroke="#4c4c4c" stroke-width="1.1" opacity="0.11"/>
<line x1="0" y1="120.4" x2="1440" y2="122.0" stroke="#4c4c4c" stroke-width="1.1" opacity="0.10"/>
<line x1="0" y1="120.0" x2="1440" y2="121.5" stroke="#4c4c4c" stroke-width="1.1" opacity="0.10"/>
<line x1="0" y1="119.6" x2="1440" y2="121.1" stroke="#4c4c4c" stroke-width="1.1" opacity="0.10"/>
<line x1="0" y1="119.2" x2="1440" y2="120.6" stroke="#4c4c4c" stroke-width="1.1" opacity="0.09"/>
<line x1="0" y1="118.8" x2="1440" y2="120.1" stroke="#4c4c4c" stroke-width="1.1" opacity="0.09"/>
<line x1="0" y1="118.4" x2="1440" y2="119.7" stroke="#4c4c4c" stroke-width="1.1" opacity="0.09"/>
<line x1="0" y1="118.1" x2="1440" y2="119.2" stroke="#4c4c4c" stroke-width="1.1" opacity="0.08"/>
<line x1="0" y1="117.7" x2="1440" y2="118.8" stroke="#4c4c4c" stroke-width="1.1" opacity="0.08"/>
<line x1="0" y1="117.3" x2="1440" y2="118.4" stroke="#4c4c4c" stroke-width="1.1" opacity="0.08"/>
<line x1="0" y1="117.0" x2="1440" y2="117.9" stroke="#4c4c4c" stroke-width="1.1" opacity="0.07"/>
<line x1="0" y1="116.7" x2="1440" y2="117.5" stroke="#4c4c4c" stroke-width="1.1" opacity="0.07"/>
<line x1="0" y1="116.3" x2="1440" y2="117.1" stroke="#4c4c4c" stroke-width="1.1" opacity="0.07"/>
<line x1="0" y1="116.0" x2="1440" y2="116.7" stroke="#4c4c4c" stroke-width="1.1" opacity="0.06"/>
<line x1="0" y1="115.7" x2="1440" y2="116.3" stroke="#4c4c4c" stroke-width="1.1" opacity="0.06"/>
<line x1="0" y1="115.3" x2="1440" y2="116.0" stroke="#4c4c4c" stroke-width="1.1" opacity="0.06"/>
<line x1="0" y1="115.0" x2="1440" y2="115.6" stroke="#4c4c4c" stroke-width="1.1" opacity="0.05"/>
<linearGradient id="hzf" x1="0" y1="0" x2="0" y2="1"><stop offset="0" stop-color="#414141" stop-opacity="1"/><stop offset="0.35" stop-color="#414141" stop-opacity="0.75"/><stop offset="1" stop-color="#404040" stop-opacity="0"/></linearGradient>
<rect x="0" y="110" width="1440" height="150" fill="url(#hzf)"/>
<line x1="864.6" y1="114" x2="772.5" y2="1200" stroke="#873741" stroke-width="1.15" opacity="1"/><clipPath id="boxclip"><path d="M296 418 L800 439 L900 441 L1173 453 C1205 455 1225 470 1237 486 L1284 545 C1292 555 1294 562 1292 570 L1274 639 L1245 730 L1222 800 L1010 916 L668 884 L366 858 L299 849 C262 838 250 818 246 800 L172 535 C168 522 166 512 170 500 C185 455 240 420 296 418 Z"/></clipPath><g clip-path="url(#boxclip)"><path d="M296 418 L800 439 L900 441 L1173 453 C1205 455 1225 470 1237 486 L1284 545 C1292 555 1294 562 1292 570 L1274 639 L1245 730 L1222 800 L1010 916 L668 884 L366 858 L299 849 C262 838 250 818 246 800 L172 535 C168 522 166 512 170 500 C185 455 240 420 296 418 Z" fill="#888a89"/><path d="M296 418 L800 439 L1173 453 C1205 455 1225 470 1237 486 L1284 545 C1292 555 1294 562 1292 570 L1274 639 L1245 730 L1222 800 L1214 800 L1236 730 L1262 634 L1276 580 C1280 568 1278 558 1270 550 L1244 524 C1232 512 1215 506 1185 504 L900 491 L333 473 C280 474 225 492 213 520 L180 560 L150 500 L200 420 Z" fill="#8f9091"/><path d="M232 600 L218 548 C206 500 268 468 340 467 L900 484 L1185 497 C1218 499 1238 506 1250 520 L1276 548 C1284 558 1286 568 1282 580" fill="none" stroke="#abacad" stroke-width="14" filter="url(#b4)" opacity="1"/><path d="M333 473 L900 491 L1185 504 C1215 506 1232 512 1244 524 L1270 550 C1278 558 1280 568 1276 580 L1262 634 L1236 730 L1214 800 L1010 916 L668 884 L366 858 L299 849 L246 800 L200 560 C196 510 260 472 333 473 Z" fill="#888a89" filter="url(#b2)"/><path d="M1296 560 L1280 640 L1250 732 L1228 802" fill="none" stroke="#77787a" stroke-width="10" filter="url(#b4)"/><path d="M300 418 C240 420 185 455 170 500 C166 512 168 522 172 535 L246 800 C250 818 262 838 299 850 L290 835 L258 800 L218 545 C208 505 262 476 338 474 Z" fill="url(#gLeftBand)" filter="url(#b2)"/><path d="M236 640 L219 552 C208 500 270 469 350 468" fill="none" stroke="#9c9d9e" stroke-width="9" filter="url(#b4)" opacity="0.75"/><path d="M296 418 L800 439 L1173 453" fill="none" stroke="#868788" stroke-width="6" filter="url(#b2)"/><path d="M266 538 L665 558 L930 572 L930 690 L665 674 L273 646 C245 644 220 620 220 593 C220 562 240 538 266 538 Z" fill="#8f9091"/><path d="M266 538 L665 558 L930 572 L930 690 L665 674 L273 646 C245 644 220 620 220 593 C220 562 240 538 266 538 Z" fill="none" stroke="#6c6d6e" stroke-width="1"/><path d="M262 552 L930 588 L930 600 L262 566 Z" fill="#9b9c9d" filter="url(#b2)"/><path d="M280 632 L930 672 L930 682 L290 642 Z" fill="#9b9c9d" filter="url(#b2)"/><path d="M262 566 L665 590 L930 606 L930 668 L665 652 L290 628 C262 626 236 612 238 594 C240 574 250 566 262 566 Z" fill="#69696a" filter="url(#b1)"/><path d="M272 571 L665 594 L930 610 L930 666 L665 650 L296 626 C272 624 252 612 254 596 C256 580 262 571 272 571 Z" fill="#898a8a"/><path d="M266 568 C245 572 236 590 240 604 C244 618 262 626 280 628 C262 616 252 600 256 586 C258 576 264 570 272 570 Z" fill="#545354" filter="url(#b1)"/><ellipse cx="682" cy="624" rx="34" ry="32" fill="#8e8f90" stroke="#757678" stroke-width="1"/><polygon points="275.2,698.7 388.2,709.6 407.4,803.1 396.4,823.3 285.1,813.4 259.6,718.6" fill="#5f6062" stroke="#5f6062" stroke-width="16.2" stroke-linejoin="round"/><polygon points="395.4,708.4 413.6,802.9 402.7,824.6 385.4,729.1" fill="#484646" stroke="#484646" stroke-width="8" stroke-linejoin="round" /><polygon points="275.1,693.8 388.3,703.5 377.0,722.3 258.1,713.5" fill="#8e8f90" stroke="#8e8f90" stroke-width="10" stroke-linejoin="round" /><polygon points="257.9,718.8 377.4,729.4 396.6,825.0 284.4,814.6" fill="#878889" stroke="#878889" stroke-width="12" stroke-linejoin="round" /><path d="M255.4 715 L380.5 725" stroke="#a1a2a3" stroke-width="6" filter="url(#b2)" fill="none"/><path d="M381.5 732 L399 820" stroke="#6a6a6b" stroke-width="5" filter="url(#b2)" fill="none"/><polygon points="447.9,712.3 563.1,722.5 575.4,817.8 564.7,839.2 453.1,828.4 436.0,732.6" fill="#5f6062" stroke="#5f6062" stroke-width="16.2" stroke-linejoin="round"/><polygon points="570.1,721.4 582.0,817.5 571.2,840.8 563.6,743.3" fill="#484646" stroke="#484646" stroke-width="8" stroke-linejoin="round" /><polygon points="448.0,707.2 563.3,716.6 556.0,736.3 434.6,727.2" fill="#8e8f90" stroke="#8e8f90" stroke-width="10" stroke-linejoin="round" /><polygon points="434.2,732.7 556.2,743.1 565.0,840.9 452.5,829.7" fill="#878889" stroke="#878889" stroke-width="12" stroke-linejoin="round" /><path d="M431.9 728.7 L559.5 739" stroke="#a1a2a3" stroke-width="6" filter="url(#b2)" fill="none"/><path d="M560.5 746 L567.1 836.2" stroke="#6a6a6b" stroke-width="5" filter="url(#b2)" fill="none"/><polygon points="630.5,726.0 744.9,737.3 753.9,828.2 745.6,851.1 628.6,843.5 619.9,746.2" fill="#5f6062" stroke="#5f6062" stroke-width="16.2" stroke-linejoin="round"/><polygon points="752.1,736.4 760.8,827.7 752.1,852.6 746.0,758.3" fill="#484646" stroke="#484646" stroke-width="8" stroke-linejoin="round" /><polygon points="630.7,720.9 745.3,731.5 738.5,751.2 618.6,740.7" fill="#8e8f90" stroke="#8e8f90" stroke-width="10" stroke-linejoin="round" /><polygon points="618.1,746.4 738.6,757.9 745.8,852.8 628.0,844.8" fill="#878889" stroke="#878889" stroke-width="12" stroke-linejoin="round" /><path d="M615.9 742.2 L742 754" stroke="#a1a2a3" stroke-width="6" filter="url(#b2)" fill="none"/><path d="M743 761 L748 848" stroke="#6a6a6b" stroke-width="5" filter="url(#b2)" fill="none"/><polygon points="807.3,742.0 922.2,753.3 926.9,774.5 936.5,865.1 806.7,851.3 802.7,763.7" fill="#5f6062" stroke="#5f6062" stroke-width="16.2" stroke-linejoin="round"/><polygon points="806.5,737.8 923.3,748.6 929.5,770.3 800.7,759.4" fill="#8e8f90" stroke="#8e8f90" stroke-width="10" stroke-linejoin="round" /><polygon points="800.5,764.8 929.2,776.4 936.5,867.1 806.9,853.7" fill="#878889" stroke="#878889" stroke-width="12" stroke-linejoin="round" /><path d="M798 761 L933 773" stroke="#a1a2a3" stroke-width="6" filter="url(#b2)" fill="none"/><polygon points="995.1,760.0 1059.7,767.0 1052.0,789.0 1052.6,877.2 994.1,869.5 993.5,781.8" fill="#5f6062" stroke="#5f6062" stroke-width="16.2" stroke-linejoin="round"/><polygon points="996.2,754.8 1059.4,761.3 1053.9,781.2 992.6,774.7" fill="#8e8f90" stroke="#8e8f90" stroke-width="10" stroke-linejoin="round" /><polygon points="990.5,782.7 1055.0,790.4 1051.8,879.1 994.7,871.4" fill="#878889" stroke="#878889" stroke-width="12" stroke-linejoin="round" /><path d="M990 777 L1057 785" stroke="#a1a2a3" stroke-width="6" filter="url(#b2)" fill="none"/></g><path d="M0 994 C30 984 60 972 86 971 L668 1034 L800 1040 L925 1025 L1010 1036 L1010 1160 L0 1160 Z" fill="#8f9091"/><path d="M0 999 L498 1056 C530 1060 555 1085 582 1119 L600 1160 L0 1160 Z" fill="#8b8c8d"/><path d="M0 997 L498 1054 C532 1058 558 1084 585 1118 L602 1160" fill="none" stroke="#7a7b7c" stroke-width="1.6"/><path d="M0 1001 L498 1058 C528 1062 552 1086 578 1120 L594 1160" fill="none" stroke="#9b9c9d" stroke-width="3" filter="url(#b1)"/><path d="M0 1049 L266 1086 C300 1092 325 1108 346 1129 L366 1160 L0 1160 Z" fill="url(#gPlat)"/><path d="M0 1047 L266 1084 C302 1090 328 1106 350 1128 L370 1160" fill="none" stroke="#6c6c6d" stroke-width="5" filter="url(#b2)"/><ellipse cx="1315" cy="1130" rx="383" ry="296" transform="rotate(42.2 1315 1130)" fill="url(#gSphere)"/><ellipse cx="1315" cy="1130" rx="383" ry="296" transform="rotate(42.2 1315 1130)" fill="none" stroke="#777879" stroke-width="3" filter="url(#b2)"/></g></svg>
<div style="left:3px;top:39px;width:1435px;height:40px;background:#333333;border-radius:9px 9px 0 0;"></div>
<div style="left:3px;top:78px;width:1150px;height:37px;background:#333333;border-radius:0 0 8px 0;"></div>
<div style="left:1343px;top:78px;width:95px;height:37px;background:#333333;border-radius:0 0 0 8px;"></div>
<svg style="left:1153px;top:78px;" width="8" height="8" viewBox="0 0 8 8"><path d="M0 0 L8 0 A8 8 0 0 0 0 8 Z" fill="#333333"/></svg>
<svg style="left:1335px;top:78px;" width="8" height="8" viewBox="0 0 8 8"><path d="M8 0 L0 0 A8 8 0 0 1 8 8 Z" fill="#333333"/></svg>
<div style="left:16px;top:44px;width:45px;height:27px;background:#262626;border-radius:5px;border:1px solid #464646;box-sizing:border-box;"></div>
<svg style="left:21px;top:47px;" width="22" height="22" viewBox="0 0 16 16"><path d="M1.5 8 L14.5 8 M4.5 5.5 L2.5 13.5 M9.5 8 L11.5 13.5 M4 10.5 L13 10.5" fill="none" stroke="#e6e6e6" stroke-width="1.1" stroke-linecap="round" stroke-linejoin="round" /><circle cx="9.6" cy="4.2" r="3" fill="#e6e6e6"/></svg>
<svg style="left:46px;top:53px;" width="12" height="12" viewBox="0 0 12 12"><path d="M2 4.0 L6 8.0 L10 4.0" fill="none" stroke="#e6e6e6" stroke-width="1.8" stroke-linecap="round" stroke-linejoin="round"/></svg>
<div style="left:70px;top:44px;width:130px;height:27px;background:#262626;border-radius:5px;border:1px solid #464646;box-sizing:border-box;"></div>
<svg style="left:75px;top:46px;" width="23" height="23" viewBox="0 0 16 16"><rect x="4.5" y="4.5" width="7" height="7" fill="#e6e6e6"/><path d="M1.5 5 L1.5 2.5 Q1.5 1.5 2.5 1.5 L5 1.5 M11 1.5 L13.5 1.5 Q14.5 1.5 14.5 2.5 L14.5 5 M14.5 11 L14.5 13.5 Q14.5 14.5 13.5 14.5 L11 14.5 M5 14.5 L2.5 14.5 Q1.5 14.5 1.5 13.5 L1.5 11" fill="none" stroke="#e6e6e6" stroke-width="1.1" stroke-linecap="round" stroke-linejoin="round" /></svg>
<div style="left:108px;top:46px;height:25px;line-height:25px;font-size:17px;color:#e6e6e6;white-space:nowrap;">物体模式</div>
<svg style="left:185px;top:53px;" width="12" height="12" viewBox="0 0 12 12"><path d="M2 4.0 L6 8.0 L10 4.0" fill="none" stroke="#e6e6e6" stroke-width="1.8" stroke-linecap="round" stroke-linejoin="round"/></svg>
<div style="left:35.5px;top:46px;width:400px;height:24px;line-height:24px;text-align:center;font-size:17px;color:#e0e0e0;white-space:nowrap;">视图</div>
<div style="left:91.5px;top:46px;width:400px;height:24px;line-height:24px;text-align:center;font-size:17px;color:#e0e0e0;white-space:nowrap;">选择</div>
<div style="left:147.5px;top:46px;width:400px;height:24px;line-height:24px;text-align:center;font-size:17px;color:#e0e0e0;white-space:nowrap;">添加</div>
<div style="left:203.5px;top:46px;width:400px;height:24px;line-height:24px;text-align:center;font-size:17px;color:#e0e0e0;white-space:nowrap;">物体</div>
<div style="left:551px;top:44px;width:90px;height:27px;background:#262626;border-radius:5px;border:1px solid #464646;box-sizing:border-box;"></div>
<svg style="left:556px;top:47px;" width="22" height="22" viewBox="0 0 16 16"><path d="M3.5 14 L3.5 2.5 M1.5 4.5 L3.5 2.2 L5.5 4.5 M2 12.5 L13.5 12.5 M11.5 10.5 L13.8 12.5 L11.5 14.5 M3.5 12.5 L10 6" fill="none" stroke="#e6e6e6" stroke-width="1.1" stroke-linecap="round" stroke-linejoin="round" /><circle cx="3.5" cy="12.5" r="1.5" fill="#e6e6e6"/></svg>
<div style="left:589px;top:46px;height:25px;line-height:25px;font-size:17px;color:#e6e6e6;white-space:nowrap;">全局</div>
<svg style="left:626px;top:53px;" width="12" height="12" viewBox="0 0 12 12"><path d="M2 4.0 L6 8.0 L10 4.0" fill="none" stroke="#e6e6e6" stroke-width="1.8" stroke-linecap="round" stroke-linejoin="round"/></svg>
<div style="left:649px;top:44px;width:45px;height:27px;background:#262626;border-radius:5px;border:1px solid #464646;box-sizing:border-box;"></div>
<svg style="left:656px;top:47px;" width="22" height="22" viewBox="0 0 16 16"><circle cx="8" cy="8" r="1.8" fill="#e6e6e6"/><path d="M1.5 5 L1.5 2.5 Q1.5 1.5 2.5 1.5 L5 1.5 M11 1.5 L13.5 1.5 Q14.5 1.5 14.5 2.5 L14.5 5 M14.5 11 L14.5 13.5 Q14.5 14.5 13.5 14.5 L11 14.5 M5 14.5 L2.5 14.5 Q1.5 14.5 1.5 13.5 L1.5 11" fill="none" stroke="#e6e6e6" stroke-width="1.1" stroke-linecap="round" stroke-linejoin="round" /></svg>
<svg style="left:680px;top:53px;" width="12" height="12" viewBox="0 0 12 12"><path d="M2 4.0 L6 8.0 L10 4.0" fill="none" stroke="#e6e6e6" stroke-width="1.8" stroke-linecap="round" stroke-linejoin="round"/></svg>
<div style="left:703px;top:44px;width:27px;height:27px;background:#545454;border-radius:5px 0 0 5px;"></div>
<svg style="left:705px;top:47px;" width="22" height="22" viewBox="0 0 16 16"><path d="M2.5 7.5 L6.5 2.8 C9 0.6 14.6 4.4 12 8.4 L8.2 13.4 L5.8 11.6 L9.6 6.8 C10.4 5.6 9 4.4 8 5.4 L4.8 9.4 Z" fill="none" stroke="#9a9a9a" stroke-width="1.1" stroke-linecap="round" stroke-linejoin="round" /></svg>
<div style="left:730px;top:44px;width:46px;height:27px;background:#262626;border-radius:0 5px 5px 0;border:1px solid #464646;border-left:none;box-sizing:border-box;"></div>
<svg style="left:733px;top:47px;" width="22" height="22" viewBox="0 0 16 16"><path d="M1.5 8 L1.5 13 M5 9 L5 13 M8.5 9 L8.5 13 M12 8 L12 13 M1.5 11 L12 11" fill="none" stroke="#e6e6e6" stroke-width="1.1" stroke-linecap="round" stroke-linejoin="round" /><rect x="10.2" y="2" width="3.6" height="3.6" fill="#e6e6e6"/></svg>
<svg style="left:761px;top:53px;" width="12" height="12" viewBox="0 0 12 12"><path d="M2 4.0 L6 8.0 L10 4.0" fill="none" stroke="#e6e6e6" stroke-width="1.8" stroke-linecap="round" stroke-linejoin="round"/></svg>
<div style="left:784px;top:44px;width:28px;height:27px;background:#545454;border-radius:5px 0 0 5px;"></div>
<svg style="left:787px;top:47px;" width="22" height="22" viewBox="0 0 16 16"><circle cx="8" cy="8" r="5.8" fill="none" stroke="#c8c8c8" stroke-width="1.1"/><circle cx="8" cy="8" r="1.9" fill="#c8c8c8"/></svg>
<div style="left:812px;top:44px;width:46px;height:27px;background:#2a2a2a;border-radius:0 5px 5px 0;border:1px solid #464646;border-left:none;box-sizing:border-box;"></div>
<svg style="left:818px;top:47px;" width="22" height="22" viewBox="0 0 16 16"><path d="M2 13 C6 13 5.5 3 8 3 C10.5 3 10 13 14 13" fill="none" stroke="#6a6a6a" stroke-width="1.1" stroke-linecap="round" stroke-linejoin="round" /></svg>
<svg style="left:843px;top:53px;" width="12" height="12" viewBox="0 0 12 12"><path d="M2 4.0 L6 8.0 L10 4.0" fill="none" stroke="#5a5a5a" stroke-width="1.8" stroke-linecap="round" stroke-linejoin="round"/></svg>
<div style="left:1065px;top:44px;width:45px;height:27px;background:#262626;border-radius:5px;border:1px solid #464646;box-sizing:border-box;"></div>
<svg style="left:1067px;top:46px;" width="23" height="23" viewBox="0 0 16 16"><path d="M5.2 4.6 C7 2 8.8 1.1 10.5 1.1 C12.2 1.1 14 2 15.8 4.6 C14 7.2 12.2 8.1 10.5 8.1 C8.8 8.1 7 7.2 5.2 4.6 Z" fill="#e6e6e6" /><circle cx="10.3" cy="4.6" r="2.4" fill="#262626"/><circle cx="10.3" cy="4.6" r="1.3" fill="#e6e6e6"/><path d="M1.1 8.1 L11.9 11.6 L7.4 12.4 L5 15.6 Z" fill="#e6e6e6" /></svg>
<svg style="left:1095px;top:53px;" width="12" height="12" viewBox="0 0 12 12"><path d="M2 4.0 L6 8.0 L10 4.0" fill="none" stroke="#e6e6e6" stroke-width="1.8" stroke-linecap="round" stroke-linejoin="round"/></svg>
<div style="left:1118px;top:44px;width:28px;height:27px;background:#4772b3;border-radius:5px 0 0 5px;"></div>
<svg style="left:1121px;top:46px;" width="23" height="23" viewBox="0 0 16 16"><path d="M0.9 2.3 C6.5 3 11.5 7.5 12.7 14.7 M3.8 12.2 L14.6 1.6 M10.3 1.3 L15 1.3 L15 6" fill="none" stroke="#ffffff" stroke-width="1.1" stroke-linecap="round" stroke-linejoin="round" /><circle cx="2.8" cy="13.2" r="1.6" fill="#4772b3" stroke="#ffffff" stroke-width="1.1"/></svg>
<div style="left:1146px;top:44px;width:29px;height:27px;background:#262626;border-radius:0 5px 5px 0;border:1px solid #464646;border-left:none;box-sizing:border-box;"></div>
<svg style="left:1154px;top:53px;" width="12" height="12" viewBox="0 0 12 12"><path d="M2 4.0 L6 8.0 L10 4.0" fill="none" stroke="#e6e6e6" stroke-width="1.8" stroke-linecap="round" stroke-linejoin="round"/></svg>
<div style="left:1184px;top:44px;width:27px;height:27px;background:#4772b3;border-radius:5px 0 0 5px;"></div>
<svg style="left:1186px;top:46px;" width="23" height="23" viewBox="0 0 16 16"><clipPath id="ovc"><circle cx="10.2" cy="5.8" r="4.7"/></clipPath><circle cx="10.2" cy="5.8" r="4.7" fill="#ffffff"/><circle cx="5.7" cy="10.3" r="4.7" fill="none" stroke="#ffffff" stroke-width="1.2"/><circle cx="5.7" cy="10.3" r="4.7" fill="none" stroke="#4772b3" stroke-width="1.3" clip-path="url(#ovc)"/></svg>
<div style="left:1211px;top:44px;width:29px;height:27px;background:#262626;border-radius:0 5px 5px 0;border:1px solid #464646;border-left:none;box-sizing:border-box;"></div>
<svg style="left:1219px;top:53px;" width="12" height="12" viewBox="0 0 12 12"><path d="M2 4.0 L6 8.0 L10 4.0" fill="none" stroke="#e6e6e6" stroke-width="1.8" stroke-linecap="round" stroke-linejoin="round"/></svg>
<div style="left:1248px;top:44px;width:28px;height:27px;background:#545454;border-radius:5px;border:1px solid #606060;box-sizing:border-box;"></div>
<svg style="left:1251px;top:46px;" width="23" height="23" viewBox="0 0 16 16"><rect x="5.5" y="1.8" width="8.7" height="8.7" rx="1" fill="none" stroke="#d0d0d0" stroke-width="1.1"/><rect x="1.8" y="5.5" width="8.7" height="8.7" rx="1" fill="#545454" stroke="#d0d0d0" stroke-width="1.1"/><path d="M4.5 8 L4.5 11.5 L5.2 11.5 M7 11.5 L8 11.5" fill="none" stroke="#d0d0d0" stroke-width="0.9" stroke-linecap="round" stroke-linejoin="round" /></svg>
<div style="left:1284px;top:44px;width:112px;height:27px;background:#545454;border-radius:5px 0 0 5px;"></div>
<div style="left:1312px;top:44px;width:28px;height:27px;background:#4772b3;"></div>
<div style="left:1340px;top:44px;width:1px;height:27px;background:#484848;"></div>
<div style="left:1368px;top:44px;width:1px;height:27px;background:#484848;"></div>
<svg style="left:1287px;top:46px;" width="23" height="23" viewBox="0 0 16 16"><circle cx="8" cy="8" r="6" fill="none" stroke="#d8d8d8" stroke-width="1.1"/><path d="M2 8 L14 8 M8 2 C5 4.5 5 11.5 8 14 M8 2 C11 4.5 11 11.5 8 14" fill="none" stroke="#d8d8d8" stroke-width="1" stroke-linecap="round" stroke-linejoin="round" /></svg>
<svg style="left:1314px;top:45px;" width="25" height="25" viewBox="0 0 16 16"><circle cx="8" cy="8" r="6.2" fill="#dfe7f7"/></svg>
<svg style="left:1343px;top:46px;" width="23" height="23" viewBox="0 0 16 16"><circle cx="8" cy="8" r="6" fill="none" stroke="#d8d8d8" stroke-width="1.1"/><path d="M8 2 A6 6 0 0 0 8 14 A6 6 0 0 0 12.24 12.24 L8 8 Z" fill="#d8d8d8" opacity="0.9"/><path d="M10.5 13 L11.3 12.2 M12 12 L12.8 11.2 M13 10.4 L13.6 9.8" fill="none" stroke="#d8d8d8" stroke-width="0.7" stroke-linecap="round" stroke-linejoin="round" /></svg>
<svg style="left:1371px;top:46px;" width="23" height="23" viewBox="0 0 16 16"><circle cx="8" cy="8" r="6" fill="none" stroke="#d8d8d8" stroke-width="1.1"/><path d="M4.4 7.6 A3.8 3.8 0 0 1 8 4.2" fill="none" stroke="#d8d8d8" stroke-width="1.0" stroke-linecap="round" stroke-linejoin="round" /><path d="M8.6 13.6 L9.2 12.8 M10.4 13.2 L11 12.2 M12 12.2 L12.6 11.2 M13.2 10.6 L13.6 9.8" fill="none" stroke="#d8d8d8" stroke-width="0.7" stroke-linecap="round" stroke-linejoin="round" /></svg>
<div style="left:1396px;top:44px;width:29px;height:27px;background:#262626;border-radius:0 5px 5px 0;border:1px solid #464646;border-left:none;box-sizing:border-box;"></div>
<svg style="left:1404px;top:53px;" width="12" height="12" viewBox="0 0 12 12"><path d="M2 4.0 L6 8.0 L10 4.0" fill="none" stroke="#e6e6e6" stroke-width="1.8" stroke-linecap="round" stroke-linejoin="round"/></svg>
<div style="left:16px;top:85px;height:25px;line-height:25px;font-size:17px;color:#e0e0e0;white-space:nowrap;">方向:</div>
<div style="left:62px;top:83px;width:143px;height:27px;background:#262626;border-radius:5px;border:1px solid #464646;box-sizing:border-box;"></div>
<svg style="left:67px;top:86px;" width="23" height="23" viewBox="0 0 16 16"><path d="M4.5 10 L4.5 2 M2.5 4 L4.5 1.8 L6.5 4 M8 11.5 L14 11.5 M12 9.5 L14.2 11.5 L12 13.5 M3 13 L1.5 14.5 M1.5 12.8 L1.5 14.5 L3.2 14.5" fill="none" stroke="#e6e6e6" stroke-width="0.9" stroke-linecap="round" stroke-linejoin="round" /><circle cx="4.8" cy="11.4" r="1.7" fill="#e6e6e6"/></svg>
<div style="left:100px;top:85px;height:25px;line-height:25px;font-size:17px;color:#e6e6e6;white-space:nowrap;">默认</div>
<svg style="left:190px;top:92px;" width="12" height="12" viewBox="0 0 12 12"><path d="M2 4.0 L6 8.0 L10 4.0" fill="none" stroke="#e6e6e6" stroke-width="1.8" stroke-linecap="round" stroke-linejoin="round"/></svg>
<div style="left:220px;top:85px;height:25px;line-height:25px;font-size:17px;color:#e0e0e0;white-space:nowrap;">拖拽:</div>
<div style="left:271px;top:83px;width:70px;height:27px;background:#262626;border-radius:5px;border:1px solid #464646;box-sizing:border-box;"></div>
<div style="left:283px;top:85px;height:25px;line-height:25px;font-size:17px;color:#e6e6e6;white-space:nowrap;">框选</div>
<svg style="left:326px;top:92px;" width="12" height="12" viewBox="0 0 12 12"><path d="M2 4.0 L6 8.0 L10 4.0" fill="none" stroke="#e6e6e6" stroke-width="1.8" stroke-linecap="round" stroke-linejoin="round"/></svg>
<svg style="left:367px;top:88px;" width="16" height="16" viewBox="0 0 16 16"><path d="M2 5.0 L8 11.0 L14 5.0" fill="none" stroke="#d0d0d0" stroke-width="1.6" stroke-linecap="round" stroke-linejoin="round"/></svg>
<svg style="left:386px;top:83px;" width="26" height="28" viewBox="0 0 26 28"><defs><linearGradient id="hx1" x1="0.1" y1="0.1" x2="0.9" y2="0.9"><stop offset="0" stop-color="#0f9df0"/><stop offset="0.38" stop-color="#1fb57a"/><stop offset="0.62" stop-color="#b9c235"/><stop offset="1" stop-color="#f2301e"/></linearGradient></defs>
<path d="M12.5 1.2 L22.9 7.2 L22.9 19.3 L12.5 25.3 L2.1 19.3 L2.1 7.2 Z" fill="url(#hx1)"/></svg>
<div style="left:418px;top:83px;width:195px;height:27px;background:#545454;border-radius:5px;"></div>
<div style="left:418px;top:83px;width:27.5px;height:27px;background:#4772b3;border-radius:5px 0 0 5px;"></div>
<svg style="left:419.5px;top:85px;" width="23" height="23" viewBox="0 0 16 16"><rect x="4.5" y="4.5" width="7" height="7" fill="#ffffff"/><path d="M1.5 5 L1.5 2.5 Q1.5 1.5 2.5 1.5 L5 1.5 M11 1.5 L13.5 1.5 Q14.5 1.5 14.5 2.5 L14.5 5 M14.5 11 L14.5 13.5 Q14.5 14.5 13.5 14.5 L11 14.5 M5 14.5 L2.5 14.5 Q1.5 14.5 1.5 13.5 L1.5 11" fill="none" stroke="#ffffff" stroke-width="1.1" stroke-linecap="round" stroke-linejoin="round" /></svg>
<svg style="left:447.5px;top:85px;" width="23" height="23" viewBox="0 0 16 16"><circle cx="8" cy="8" r="6" fill="none" stroke="#c6c6c6" stroke-width="1.2"/><path d="M8 2 A6 6 0 0 0 2 8 L8 8 Z M8 8 L14 8 A6 6 0 0 1 8 14 Z" fill="#c6c6c6" /></svg>
<div style="left:473px;top:83px;width:1px;height:27px;background:#484848;"></div>
<svg style="left:475.5px;top:85px;" width="23" height="23" viewBox="0 0 16 16"><path d="M4.8 1.6 L8.3 10.4 C6.6 12.6 3 12.6 1.3 10.4 Z" fill="#c6c6c6" /><circle cx="11" cy="11.2" r="3.1" fill="none" stroke="#c6c6c6" stroke-width="1.2"/><path d="M9.6 10.4 A1.8 1.8 0 0 1 11 9.4" fill="none" stroke="#c6c6c6" stroke-width="0.8" stroke-linecap="round" stroke-linejoin="round" /><circle cx="12.4" cy="4.4" r="1.7" fill="#c6c6c6"/></svg>
<div style="left:501px;top:83px;width:1px;height:27px;background:#484848;"></div>
<svg style="left:503.5px;top:85px;" width="23" height="23" viewBox="0 0 16 16"><circle cx="8" cy="8" r="5.8" fill="none" stroke="#c6c6c6" stroke-width="1.2"/><path d="M4.2 4.6 C5.6 3.6 7.6 4 8 5 C8.4 6 7.2 6.4 7 7.4 C6.8 8.4 8.6 8.4 9 9.6 C9.4 10.8 8.2 12.4 7.4 12.6 C6.6 11.6 6.8 10.4 5.8 9.6 C4.8 8.8 3.4 8.4 3.2 6.8 Z M10.4 3.4 C11.8 4 12.8 5 13.2 6.4 C12.4 7.2 11.2 7 10.6 6.2 C10 5.4 9.8 4.2 10.4 3.4 Z" fill="#c6c6c6" /><path d="M2.2 13.6 L13.8 2.6" fill="none" stroke="#c6c6c6" stroke-width="1.0" stroke-linecap="round" stroke-linejoin="round" /></svg>
<div style="left:529px;top:83px;width:1px;height:27px;background:#484848;"></div>
<svg style="left:531.5px;top:85px;" width="23" height="23" viewBox="0 0 16 16"><path d="M6.5 1.8 C6.5 1 9.5 1 9.5 1.8 L9.5 7 L13 7 Q14 7 14 8 L14 10.5 L2 10.5 L2 8 Q2 7 3 7 L6.5 7 Z M2 10.5 L2 14 L4.5 14 L5 12.5 L5.5 14 L14 14 L14 10.5" fill="none" stroke="#c6c6c6" stroke-width="1.1" stroke-linecap="round" stroke-linejoin="round" /></svg>
<div style="left:557px;top:83px;width:1px;height:27px;background:#484848;"></div>
<svg style="left:559.5px;top:85px;" width="23" height="23" viewBox="0 0 16 16"><rect x="2" y="2" width="8" height="4.6" rx="1.4" fill="#c6c6c6"/><rect x="2" y="9.4" width="8" height="4.6" rx="1.4" fill="#c6c6c6"/><path d="M10 4.3 L12 4.3 Q14 4.3 14 6.3 L14 9.7 Q14 11.7 12 11.7 L10 11.7" fill="none" stroke="#c6c6c6" stroke-width="1.1" stroke-linecap="round" stroke-linejoin="round" /><path d="M3.5 3.8 L8.5 3.8 M3.5 11.2 L8.5 11.2" fill="none" stroke="#545454" stroke-width="0.9" stroke-linecap="round" stroke-linejoin="round" /></svg>
<div style="left:585px;top:83px;width:1px;height:27px;background:#484848;"></div>
<svg style="left:587.5px;top:85px;" width="23" height="23" viewBox="0 0 16 16"><path d="M3 1.8 L13 1.8 M5.5 1.8 L5.5 3 L10.5 3 L10.5 1.8 M8 3 L8 5.5 L4 5.5 Q2.5 5.5 2.5 7 Q2.5 8.8 4 8.8 L12 8.8 Q13.8 8.8 13.8 10.6 Q13.8 12.5 12 12.5 L3 12.5" fill="none" stroke="#c6c6c6" stroke-width="1.1" stroke-linecap="round" stroke-linejoin="round" /></svg>
<div style="left:615px;top:83px;width:346px;height:27px;background:#1d1d1d;border-radius:5px;"></div>
<svg style="left:620px;top:85px;" width="24" height="24" viewBox="0 0 16 16"><path d="M6.5 2 A4.5 4.5 0 1 0 6.5 11 A4.5 4.5 0 1 0 6.5 2 M9.8 9.8 L14 14" fill="none" stroke="#e6e6e6" stroke-width="1.3" stroke-linecap="round" stroke-linejoin="round" /></svg>
<div style="left:653px;top:85px;height:25px;line-height:25px;font-size:17px;color:#6e6e6e;white-space:nowrap;">搜索</div>
<div style="left:962px;top:83px;width:56px;height:27px;background:#545454;border-radius:5px 0 0 5px;"></div>
<div style="left:990px;top:83px;width:1px;height:27px;background:#484848;"></div>
<svg style="left:965px;top:87px;" width="22" height="22" viewBox="0 0 16 16"><path d="M2 6 C5 11.5 11 11.5 14 6" fill="none" stroke="#d0d0d0" stroke-width="1.0" stroke-linecap="round" stroke-linejoin="round" /></svg>
<svg style="left:993px;top:85px;" width="23" height="23" viewBox="0 0 16 16"><path d="M3.5 1.8 L12.5 1.8 L12.5 14.5 L8 10.6 L3.5 14.5 Z" fill="#e6e6e6" /></svg>
<div style="left:1018px;top:83px;width:46px;height:27px;background:#262626;border:1px solid #464646;border-left:none;box-sizing:border-box;"></div>
<svg style="left:1022px;top:85px;" width="23" height="23" viewBox="0 0 16 16"><path d="M1.8 1.5 L1.8 12 L7 12 M1.8 5.5 L7 5.5" fill="none" stroke="#e6e6e6" stroke-width="1.4" stroke-linecap="round" stroke-linejoin="round" /><path d="M6.5 3 L9.5 3 L10.5 4.2 L14.5 4.2 L14.5 8 L6.5 8 Z M6.5 9.8 L9.5 9.8 L10.5 11 L14.5 11 L14.5 14.6 L6.5 14.6 Z" fill="#e6e6e6" /></svg>
<svg style="left:1049px;top:92px;" width="12" height="12" viewBox="0 0 12 12"><path d="M2 4.0 L6 8.0 L10 4.0" fill="none" stroke="#e6e6e6" stroke-width="1.8" stroke-linecap="round" stroke-linejoin="round"/></svg>
<div style="left:1065px;top:83px;width:46px;height:27px;background:#262626;border-radius:0 5px 5px 0;border:1px solid #464646;box-sizing:border-box;"></div>
<svg style="left:1067px;top:83px;" width="27" height="27" viewBox="0 0 16 16"><path d="M1.2 1.8 L14.8 1.8 L9.8 8 L9.8 14.4 L6.4 12.4 L6.4 8 Z" fill="#d0d0d0" /></svg>
<svg style="left:1096px;top:92px;" width="12" height="12" viewBox="0 0 12 12"><path d="M2 4.0 L6 8.0 L10 4.0" fill="none" stroke="#e6e6e6" stroke-width="1.8" stroke-linecap="round" stroke-linejoin="round"/></svg>
<svg style="left:1114px;top:84px;" width="25" height="25" viewBox="0 0 16 16"><path d="M8 1.2 L14 3.4 L14 8 C14 11.5 11 14 8 15 C5 14 2 11.5 2 8 L2 3.4 Z" fill="#d8d8d8" /><path d="M5 8 L7.4 10.4 L11.4 5.8" fill="none" stroke="#303030" stroke-width="1.7" stroke-linecap="round" stroke-linejoin="round" /></svg>
<div style="left:1355px;top:83px;width:70px;height:27px;background:#262626;border-radius:5px;border:1px solid #464646;box-sizing:border-box;"></div>
<div style="left:1367px;top:85px;height:25px;line-height:25px;font-size:17px;color:#e6e6e6;white-space:nowrap;">选项</div>
<svg style="left:1410px;top:92px;" width="12" height="12" viewBox="0 0 12 12"><path d="M2 4.0 L6 8.0 L10 4.0" fill="none" stroke="#e6e6e6" stroke-width="1.8" stroke-linecap="round" stroke-linejoin="round"/></svg>
<div style="left:16px;top:128px;width:58px;height:98.7px;background:rgba(40,40,40,0.97);border-radius:6px;"></div>
<svg style="left:25px;top:132.7px;" width="40" height="40" viewBox="0 0 40 40"><rect x="3.9" y="4.4" width="31.9" height="31.3" rx="2.5" fill="none" stroke="#e2af5a" stroke-width="2.3" stroke-dasharray="4.9 3.2" stroke-dashoffset="2"/><path d="M14.9 11.8 L14.9 28.7 L19.2 24.6 L27.3 23.1 Z" fill="#dcdcdc" /></svg>
<div style="left:16px;top:176.8px;width:58px;height:1px;background:#3a3a3a;"></div>
<svg style="left:25px;top:182.0px;" width="40" height="40" viewBox="0 0 40 40"><circle cx="20" cy="20" r="16.5" fill="none" stroke="#ffffff" stroke-width="2.4"/><circle cx="20" cy="20" r="16.5" fill="none" stroke="#b9474d" stroke-width="2.4" stroke-dasharray="6.48 6.48" stroke-dashoffset="-1.2" transform="rotate(-90 20 20)"/><path d="M20 9 L20 16.5 M20 23.5 L20 31 M9 20 L16.5 20 M23.5 20 L31 20" fill="none" stroke="#bdbdbd" stroke-width="2.0" stroke-linecap="round" stroke-linejoin="round" stroke-linecap="butt"/></svg>
<div style="left:16px;top:235px;width:58px;height:197.4px;background:rgba(40,40,40,0.97);border-radius:6px;"></div>
<div style="left:16px;top:235.0px;width:58px;height:49.35px;background:#4772b3;border-radius:6px 6px 0 0;"></div>
<svg style="left:25px;top:239.7px;" width="40" height="40" viewBox="0 0 40 40"><path d="M20 2.4 L24.8 9.2 L15.2 9.2 Z M20 37.6 L24.8 30.8 L15.2 30.8 Z M2.4 20 L9.2 15.2 L9.2 24.8 Z M37.6 20 L30.8 15.2 L30.8 24.8 Z" fill="#e6e6e6" /><rect x="18.6" y="10.6" width="2.8" height="4.6" fill="#e6e6e6"/><rect x="18.6" y="24.8" width="2.8" height="4.6" fill="#e6e6e6"/><rect x="10.6" y="18.6" width="4.6" height="2.8" fill="#e6e6e6"/><rect x="24.8" y="18.6" width="4.6" height="2.8" fill="#e6e6e6"/></svg>
<svg style="left:25px;top:289.1px;" width="40" height="40" viewBox="0 0 40 40"><path d="M6.6 17.6 A14 14 0 0 1 30.4 10.4 M33.4 22.4 A14 14 0 0 1 9.6 29.6" fill="none" stroke="#e0e0e0" stroke-width="1.9" stroke-linecap="round" stroke-linejoin="round" /><path d="M2.3 18.6 L10.7 18.6 L6.5 25.8 Z M37.7 21.4 L29.3 21.4 L33.5 14.2 Z" fill="#e0e0e0" /><path d="M20 14.6 L25.4 20 L20 25.4 L14.6 20 Z" fill="#b4b4b4" /></svg>
<div style="left:16px;top:333.2px;width:58px;height:1px;background:#3a3a3a;"></div>
<svg style="left:25px;top:338.4px;" width="40" height="40" viewBox="0 0 40 40"><path d="M7.4 17 L7.4 7.4 L32.8 7.4 L32.8 32 L22.5 32" fill="none" stroke="#bcbcbc" stroke-width="1.5" stroke-linecap="round" stroke-linejoin="round" stroke-linejoin="miter" stroke-linecap="butt"/><rect x="6.2" y="19.2" width="14" height="14" fill="#e6e6e6"/><path d="M20.8 18.8 L28.4 11.4 M23.6 10.8 L29 10.8 L29 16.2" fill="none" stroke="#e6e6e6" stroke-width="1.7" stroke-linecap="round" stroke-linejoin="round" /></svg>
<div style="left:16px;top:382.6px;width:58px;height:1px;background:#3a3a3a;"></div>
<svg style="left:25px;top:387.8px;" width="40" height="40" viewBox="0 0 40 40"><circle cx="20" cy="20" r="14.8" fill="none" stroke="#e6e6e6" stroke-width="1.7"/><path d="M20 2.6 L24.2 9.4 L15.8 9.4 Z M20 37.4 L24.2 30.6 L15.8 30.6 Z M2.6 20 L9.4 15.8 L9.4 24.2 Z M37.4 20 L30.6 15.8 L30.6 24.2 Z" fill="#282828" stroke="#282828" stroke-width="3.4" stroke-linecap="round" stroke-linejoin="round" /><path d="M20 2.6 L24.2 9.4 L15.8 9.4 Z M20 37.4 L24.2 30.6 L15.8 30.6 Z M2.6 20 L9.4 15.8 L9.4 24.2 Z M37.4 20 L30.6 15.8 L30.6 24.2 Z" fill="#e6e6e6" /><rect x="13.9" y="13.9" width="12.2" height="12.2" fill="#e6e6e6"/></svg>
<div style="left:16px;top:442px;width:58px;height:98.7px;background:rgba(40,40,40,0.97);border-radius:6px;"></div>
<svg style="left:25px;top:446.7px;" width="40" height="40" viewBox="0 0 40 40"><path d="M2.4 27.9 L4.2 21.6 L23.2 5.2 L28.6 11.2 L9.6 27.4 Z" fill="#e6e6e6" /><path d="M22.6 5.6 L28.2 11.8" fill="none" stroke="#282828" stroke-width="1.4" stroke-linecap="round" stroke-linejoin="round" /><path d="M5.6 20.8 L10.4 26.2" fill="none" stroke="#282828" stroke-width="1.2" stroke-linecap="round" stroke-linejoin="round" /><path d="M4.4 30.6 C7 33.6 10 34.6 13.6 33 C19 30.6 22 24.6 27.6 23.9 C32 23.4 36.4 26.6 38.5 30.6" fill="none" stroke="#8fdcb0" stroke-width="1.9" stroke-linecap="round" stroke-linejoin="round" /></svg>
<div style="left:16px;top:490.9px;width:58px;height:1px;background:#3a3a3a;"></div>
<svg style="left:25px;top:496.1px;" width="40" height="40" viewBox="0 0 40 40"><path d="M6.4 3.2 L14.7 3.2 L14.7 32.6 L37.2 32.6 L37.2 38.3 L6.4 38.3 Z" fill="#e6e6e6" /><path d="M15.4 31.9 L15.4 18.6 A13.3 13.3 0 0 1 28.7 31.9 Z" fill="#8fdcb0" /><path d="M15.4 15 A16.9 16.9 0 0 1 32.3 31.9" fill="none" stroke="#8fdcb0" stroke-width="1.6" stroke-linecap="round" stroke-linejoin="round" /><path d="M14.7 5.4 L8.4 5.4 M14.7 7.6 L10.2 7.6 M14.7 9.8 L8.4 9.8 M14.7 12 L10.2 12 M14.7 14.2 L8.4 14.2 M14.7 16.4 L10.2 16.4 M14.7 18.6 L8.4 18.6 M14.7 20.8 L10.2 20.8 M14.7 23 L8.4 23 M14.7 25.2 L10.2 25.2 M14.7 27.4 L8.4 27.4 M14.7 29.6 L10.2 29.6 " fill="none" stroke="#282828" stroke-width="0.9" stroke-linecap="round" stroke-linejoin="round" stroke-linecap="butt"/><path d="M17.4 32.6 L17.4 36.6 M19.6 32.6 L19.6 35 M21.8 32.6 L21.8 36.6 M24 32.6 L24 35 M26.2 32.6 L26.2 36.6 M28.4 32.6 L28.4 35 M30.6 32.6 L30.6 36.6 M32.8 32.6 L32.8 35 M35 32.6 L35 36.6 " fill="none" stroke="#282828" stroke-width="0.9" stroke-linecap="round" stroke-linejoin="round" stroke-linecap="butt"/></svg>
<div style="left:16px;top:549px;width:58px;height:49.4px;background:rgba(40,40,40,0.97);border-radius:6px;"></div>
<svg style="left:25px;top:553.7px;" width="40" height="40" viewBox="0 0 40 40"><path d="M6.8 1 L6.8 12.8 M0.9 6.9 L12.7 6.9" fill="none" stroke="#8fdcb0" stroke-width="2.6" stroke-linecap="round" stroke-linejoin="round" stroke-linecap="butt"/><ellipse cx="23.8" cy="11.3" rx="13.1" ry="4.7" fill="none" stroke="#8fdcb0" stroke-width="1.5"/><path d="M10.7 11.3 L10.7 32.7 A13.1 4.7 0 0 0 36.9 32.7 L36.9 11.3 M10.7 23.3 A13.1 4.7 0 0 0 36.9 23.3 M17.8 15.4 L17.8 36.8 M31.2 15.2 L31.2 36.6" fill="none" stroke="#8fdcb0" stroke-width="1.5" stroke-linecap="round" stroke-linejoin="round" /></svg>
<svg style="left:66px;top:169px;" width="6" height="6" viewBox="0 0 6 6"><path d="M6 0 L6 6 L0 6 Z" fill="#8a8a8a"/></svg>
<svg style="left:66px;top:374.7px;" width="6" height="6" viewBox="0 0 6 6"><path d="M6 0 L6 6 L0 6 Z" fill="#8a8a8a"/></svg>
<svg style="left:66px;top:483px;" width="6" height="6" viewBox="0 0 6 6"><path d="M6 0 L6 6 L0 6 Z" fill="#8a8a8a"/></svg>
<svg style="left:66px;top:590px;" width="6" height="6" viewBox="0 0 6 6"><path d="M6 0 L6 6 L0 6 Z" fill="#8a8a8a"/></svg>
<div style="left:100px;top:128px;height:24px;line-height:24px;font-size:17px;color:#ffffff;white-space:nowrap;text-shadow:0 0 3px rgba(0,0,0,0.9),0 1px 2px rgba(0,0,0,0.8);">用户透视</div>
<div style="left:100px;top:155px;height:24px;line-height:24px;font-size:17px;color:#ffffff;white-space:nowrap;text-shadow:0 0 3px rgba(0,0,0,0.9),0 1px 2px rgba(0,0,0,0.8);letter-spacing:0.35px;">(74) Collection | 立方体.005</div>
<svg style="left:1290px;top:125px;" width="150" height="125" viewBox="1290 125 150 125"><line x1="1361.5" y1="190" x2="1368" y2="168" stroke="#a53a4b" stroke-width="2.4"/><circle cx="1368" cy="168" r="11.3" fill="#a53a4b"/><line x1="1361.5" y1="190" x2="1314" y2="187" stroke="#76b116" stroke-width="2.4"/><line x1="1361.5" y1="190" x2="1361.5" y2="148" stroke="#2f84e6" stroke-width="2.4"/><circle cx="1314" cy="187" r="12" fill="#76b116"/><circle cx="1361.5" cy="147.5" r="12.5" fill="#2f84e6"/><circle cx="1409" cy="192.5" r="11.3" fill="#4f6530" stroke="#7fb21c" stroke-width="1.2"/><circle cx="1361.5" cy="232.5" r="10.8" fill="#3a5078" stroke="#3c7fd6" stroke-width="1.2"/><circle cx="1355" cy="211" r="12.2" fill="#6e3a46" stroke="#f0425c" stroke-width="1.4"/><text x="1361.5" y="153" font-size="15" font-weight="bold" text-anchor="middle" fill="#0b1a33" font-family="Liberation Sans, sans-serif">Z</text><text x="1368" y="173.5" font-size="15" font-weight="bold" text-anchor="middle" fill="#2a0a10" font-family="Liberation Sans, sans-serif">X</text><text x="1314" y="192.5" font-size="15" font-weight="bold" text-anchor="middle" fill="#16240a" font-family="Liberation Sans, sans-serif">Y</text></svg>
<div style="left:1382px;top:250px;width:42px;height:42px;background:rgba(0,0,0,0.2);border-radius:21px;"></div>
<svg style="left:1388px;top:256px;" width="30" height="30" viewBox="0 0 32 32"><circle cx="13.5" cy="13" r="8.2" fill="#e0e0e0"/><path d="M19.5 19.5 L27 26.5" fill="none" stroke="#e0e0e0" stroke-width="3.2" stroke-linecap="round" stroke-linejoin="round" /><path d="M13.5 9 L13.5 17 M9.5 13 L17.5 13" fill="none" stroke="#353535" stroke-width="1.5" stroke-linecap="round" stroke-linejoin="round" /></svg>
<div style="left:1382px;top:295px;width:42px;height:42px;background:rgba(0,0,0,0.2);border-radius:21px;"></div>
<svg style="left:1388px;top:301px;" width="30" height="30" viewBox="0 0 32 32"><path d="M9 16 L7.6 8.4 C7.4 6.8 9.4 6.4 9.8 8 L11.6 14 L11.4 5.4 C11.4 3.6 13.6 3.6 13.7 5.4 L14.4 13.4 L15.8 5 C16.1 3.4 18.3 3.7 18.1 5.4 L17.4 14 L20 7.6 C20.6 6.2 22.5 7 22 8.6 L19.6 17 L19.6 22 C19.6 25.5 17 27.5 14 27.5 C11.4 27.5 9.6 26.2 8.4 24 L4.2 17.4 C3.4 16 5.2 14.6 6.4 15.8 L9.4 19 Z" fill="#e0e0e0" /></svg>
<div style="left:1382px;top:340px;width:42px;height:42px;background:rgba(0,0,0,0.2);border-radius:21px;"></div>
<svg style="left:1388px;top:346px;" width="30" height="30" viewBox="0 0 32 32"><circle cx="9.5" cy="9.5" r="4.3" fill="none" stroke="#e0e0e0" stroke-width="1.5"/><circle cx="19" cy="8.5" r="5.5" fill="none" stroke="#e0e0e0" stroke-width="1.5"/><circle cx="20.5" cy="7.5" r="1.4" fill="#e0e0e0"/><path d="M9 16.5 L20.5 16.5 L20.5 25.5 L9 25.5 Z M20.5 21 L26.5 17.5 L26.5 24.5 Z M5 17.5 L9 17.5 M5 17.5 L5 20" fill="none" stroke="#e0e0e0" stroke-width="1.5" stroke-linecap="round" stroke-linejoin="round" /></svg>
<div style="left:1382px;top:385px;width:42px;height:42px;background:rgba(0,0,0,0.2);border-radius:21px;"></div>
<svg style="left:1388px;top:391px;" width="30" height="30" viewBox="0 0 32 32"><path d="M10 6 L22 6 L27 26 L5 26 Z M14 6 L12.2 26 M18 6 L19.8 26 M8.6 12 L23.4 12 M7 18.5 L25 18.5" fill="none" stroke="#e0e0e0" stroke-width="1.6" stroke-linecap="round" stroke-linejoin="round" /></svg>
<div style="left:1423px;top:146px;width:15px;height:27px;background:#363636;border-radius:5px 0 0 5px;"></div>
<svg style="left:1425px;top:152px;" width="12" height="15" viewBox="0 0 12 15"><path d="M8 2 L3 7.5 L8 13" fill="none" stroke="#9a9a9a" stroke-width="1.5" stroke-linecap="round" stroke-linejoin="round"/></svg>
<svg style="left:925px;top:582px;" width="40" height="36" viewBox="0 0 40 36"><path d="M13 5 L13 24" stroke="#111" stroke-width="1"/><path d="M13 5 L13 7" stroke="#7fd000" stroke-width="1"/><path d="M8 20 A8 8 0 0 1 27 30" fill="none" stroke="#eee" stroke-width="1" stroke-dasharray="3 3"/><path d="M8 20 A8 8 0 0 1 27 30" fill="none" stroke="#e33" stroke-width="1" stroke-dasharray="3 3" stroke-dashoffset="3"/><path d="M22 31 L36 31" stroke="#111" stroke-width="1"/><path d="M34 31 L38 31" stroke="#e33" stroke-width="1"/></svg>
<div style="left:1444px;top:40px;width:658px;height:386px;background:#282828;border-radius:8px;overflow:hidden;">
<svg style="left:64.5px;top:30.299999999999997px;" width="15.0" height="15.0" viewBox="0 0 15.0 15.0"><path d="M4.75 2 L10.25 7.5 L4.75 13.0" fill="none" stroke="#c8c8c8" stroke-width="1.6" stroke-linecap="round" stroke-linejoin="round"/></svg>
<svg style="left:90px;top:25.799999999999997px;" width="24" height="24" viewBox="0 0 16 16"><path d="M2.4 3.2 L13.6 3.2 L8 13.2 Z" fill="none" stroke="#d68a4f" stroke-width="2.7" stroke-linecap="round" stroke-linejoin="round" stroke-linejoin="round"/></svg>
<div style="left:120.5px;top:25.599999999999998px;height:25px;line-height:25px;font-size:17px;color:#e0e0e0;white-space:nowrap;letter-spacing:0.5px;">柱体.004</div>
<svg style="left:224.0px;top:25.799999999999997px;" width="22" height="22" viewBox="0 0 16 16"><path d="M10.6 1.6 C8.4 1.2 6.4 3.2 7.2 5.8 L1.9 11.3 C0.9 12.4 2.0 14.6 3.9 13.9 L9.6 8.6 C12.4 9.5 14.6 7.4 14.2 5.0 L12.0 7.0 L9.8 6.2 L9.1 4.0 Z" fill="none" stroke="#6f9df0" stroke-width="1.2" stroke-linecap="round" stroke-linejoin="round" /></svg>
<svg style="left:252.0px;top:24.799999999999997px;" width="24" height="24" viewBox="0 0 16 16"><path d="M3 3.2 L13 3.2 L8 12.6 Z" fill="none" stroke="#1fd6a0" stroke-width="1.1" stroke-linecap="round" stroke-linejoin="round" /><rect x="1.6" y="1.8" width="3" height="3" fill="#282828" stroke="#1fd6a0" stroke-width="1"/><rect x="11.4" y="1.8" width="3" height="3" fill="#282828" stroke="#1fd6a0" stroke-width="1"/><rect x="6.5" y="11.2" width="3" height="3" fill="#282828" stroke="#1fd6a0" stroke-width="1"/></svg>
<svg style="left:590.0999999999999px;top:26.299999999999997px;" width="23" height="23" viewBox="0 0 16 16"><path d="M1 8 C3 4.2 5.6 3.2 8 3.2 C10.4 3.2 13 4.2 15 8 C13 11.8 10.4 12.8 8 12.8 C5.6 12.8 3 11.8 1 8 Z" fill="#e6e6e6" /><circle cx="8" cy="8" r="2.7" fill="#282828"/><circle cx="8" cy="8" r="1.2" fill="#e6e6e6"/></svg>
<svg style="left:618.5px;top:25.799999999999997px;" width="23" height="23" viewBox="0 0 16 16"><path d="M2 4.2 L5 4.2 L6 2.6 L10 2.6 L11 4.2 L14 4.2 C14.6 4.2 15 4.6 15 5.2 L15 12.6 C15 13.2 14.6 13.6 14 13.6 L2 13.6 C1.4 13.6 1 13.2 1 12.6 L1 5.2 C1 4.6 1.4 4.2 2 4.2 Z" fill="#e6e6e6" /><circle cx="8" cy="8.8" r="2.7" fill="none" stroke="#282828" stroke-width="0.8"/><circle cx="8" cy="8.8" r="1.3" fill="#282828"/></svg>
<div style="left:0px;top:52.3px;width:658px;height:29px;background:#2b2b2b;"></div>
<svg style="left:64.5px;top:59.3px;" width="15.0" height="15.0" viewBox="0 0 15.0 15.0"><path d="M4.75 2 L10.25 7.5 L4.75 13.0" fill="none" stroke="#c8c8c8" stroke-width="1.6" stroke-linecap="round" stroke-linejoin="round"/></svg>
<svg style="left:90px;top:54.8px;" width="24" height="24" viewBox="0 0 16 16"><path d="M2.4 3.2 L13.6 3.2 L8 13.2 Z" fill="none" stroke="#d68a4f" stroke-width="2.7" stroke-linecap="round" stroke-linejoin="round" stroke-linejoin="round"/></svg>
<div style="left:120.5px;top:54.599999999999994px;height:25px;line-height:25px;font-size:17px;color:#e0e0e0;white-space:nowrap;letter-spacing:0.5px;">柱体.005</div>
<svg style="left:224.0px;top:54.8px;" width="22" height="22" viewBox="0 0 16 16"><path d="M10.6 1.6 C8.4 1.2 6.4 3.2 7.2 5.8 L1.9 11.3 C0.9 12.4 2.0 14.6 3.9 13.9 L9.6 8.6 C12.4 9.5 14.6 7.4 14.2 5.0 L12.0 7.0 L9.8 6.2 L9.1 4.0 Z" fill="none" stroke="#6f9df0" stroke-width="1.2" stroke-linecap="round" stroke-linejoin="round" /></svg>
<svg style="left:252.0px;top:53.8px;" width="24" height="24" viewBox="0 0 16 16"><path d="M3 3.2 L13 3.2 L8 12.6 Z" fill="none" stroke="#1fd6a0" stroke-width="1.1" stroke-linecap="round" stroke-linejoin="round" /><rect x="1.6" y="1.8" width="3" height="3" fill="#282828" stroke="#1fd6a0" stroke-width="1"/><rect x="11.4" y="1.8" width="3" height="3" fill="#282828" stroke="#1fd6a0" stroke-width="1"/><rect x="6.5" y="11.2" width="3" height="3" fill="#282828" stroke="#1fd6a0" stroke-width="1"/></svg>
<svg style="left:590.0999999999999px;top:55.3px;" width="23" height="23" viewBox="0 0 16 16"><path d="M1 8 C3 4.2 5.6 3.2 8 3.2 C10.4 3.2 13 4.2 15 8 C13 11.8 10.4 12.8 8 12.8 C5.6 12.8 3 11.8 1 8 Z" fill="#e6e6e6" /><circle cx="8" cy="8" r="2.7" fill="#282828"/><circle cx="8" cy="8" r="1.2" fill="#e6e6e6"/></svg>
<svg style="left:618.5px;top:54.8px;" width="23" height="23" viewBox="0 0 16 16"><path d="M2 4.2 L5 4.2 L6 2.6 L10 2.6 L11 4.2 L14 4.2 C14.6 4.2 15 4.6 15 5.2 L15 12.6 C15 13.2 14.6 13.6 14 13.6 L2 13.6 C1.4 13.6 1 13.2 1 12.6 L1 5.2 C1 4.6 1.4 4.2 2 4.2 Z" fill="#e6e6e6" /><circle cx="8" cy="8.8" r="2.7" fill="none" stroke="#282828" stroke-width="0.8"/><circle cx="8" cy="8.8" r="1.3" fill="#282828"/></svg>
<svg style="left:64.5px;top:88.30000000000001px;" width="15.0" height="15.0" viewBox="0 0 15.0 15.0"><path d="M4.75 2 L10.25 7.5 L4.75 13.0" fill="none" stroke="#c8c8c8" stroke-width="1.6" stroke-linecap="round" stroke-linejoin="round"/></svg>
<svg style="left:90px;top:83.80000000000001px;" width="24" height="24" viewBox="0 0 16 16"><path d="M2.4 3.2 L13.6 3.2 L8 13.2 Z" fill="none" stroke="#d68a4f" stroke-width="2.7" stroke-linecap="round" stroke-linejoin="round" stroke-linejoin="round"/></svg>
<div style="left:120.5px;top:83.60000000000001px;height:25px;line-height:25px;font-size:17px;color:#e0e0e0;white-space:nowrap;letter-spacing:0.5px;">柱体.006</div>
<svg style="left:224.0px;top:83.80000000000001px;" width="22" height="22" viewBox="0 0 16 16"><path d="M10.6 1.6 C8.4 1.2 6.4 3.2 7.2 5.8 L1.9 11.3 C0.9 12.4 2.0 14.6 3.9 13.9 L9.6 8.6 C12.4 9.5 14.6 7.4 14.2 5.0 L12.0 7.0 L9.8 6.2 L9.1 4.0 Z" fill="none" stroke="#6f9df0" stroke-width="1.2" stroke-linecap="round" stroke-linejoin="round" /></svg>
<svg style="left:252.0px;top:82.80000000000001px;" width="24" height="24" viewBox="0 0 16 16"><path d="M3 3.2 L13 3.2 L8 12.6 Z" fill="none" stroke="#1fd6a0" stroke-width="1.1" stroke-linecap="round" stroke-linejoin="round" /><rect x="1.6" y="1.8" width="3" height="3" fill="#282828" stroke="#1fd6a0" stroke-width="1"/><rect x="11.4" y="1.8" width="3" height="3" fill="#282828" stroke="#1fd6a0" stroke-width="1"/><rect x="6.5" y="11.2" width="3" height="3" fill="#282828" stroke="#1fd6a0" stroke-width="1"/></svg>
<svg style="left:590.0999999999999px;top:84.30000000000001px;" width="23" height="23" viewBox="0 0 16 16"><path d="M1 8 C3 4.2 5.6 3.2 8 3.2 C10.4 3.2 13 4.2 15 8 C13 11.8 10.4 12.8 8 12.8 C5.6 12.8 3 11.8 1 8 Z" fill="#e6e6e6" /><circle cx="8" cy="8" r="2.7" fill="#282828"/><circle cx="8" cy="8" r="1.2" fill="#e6e6e6"/></svg>
<svg style="left:618.5px;top:83.80000000000001px;" width="23" height="23" viewBox="0 0 16 16"><path d="M2 4.2 L5 4.2 L6 2.6 L10 2.6 L11 4.2 L14 4.2 C14.6 4.2 15 4.6 15 5.2 L15 12.6 C15 13.2 14.6 13.6 14 13.6 L2 13.6 C1.4 13.6 1 13.2 1 12.6 L1 5.2 C1 4.6 1.4 4.2 2 4.2 Z" fill="#e6e6e6" /><circle cx="8" cy="8.8" r="2.7" fill="none" stroke="#282828" stroke-width="0.8"/><circle cx="8" cy="8.8" r="1.3" fill="#282828"/></svg>
<div style="left:0px;top:110.3px;width:658px;height:29px;background:#2b2b2b;"></div>
<svg style="left:64.5px;top:117.30000000000001px;" width="15.0" height="15.0" viewBox="0 0 15.0 15.0"><path d="M4.75 2 L10.25 7.5 L4.75 13.0" fill="none" stroke="#c8c8c8" stroke-width="1.6" stroke-linecap="round" stroke-linejoin="round"/></svg>
<svg style="left:90px;top:112.80000000000001px;" width="24" height="24" viewBox="0 0 16 16"><path d="M2.4 3.2 L13.6 3.2 L8 13.2 Z" fill="none" stroke="#d68a4f" stroke-width="2.7" stroke-linecap="round" stroke-linejoin="round" stroke-linejoin="round"/></svg>
<div style="left:120.5px;top:112.60000000000001px;height:25px;line-height:25px;font-size:17px;color:#e0e0e0;white-space:nowrap;letter-spacing:0.5px;">柱体.007</div>
<svg style="left:224.0px;top:112.80000000000001px;" width="22" height="22" viewBox="0 0 16 16"><path d="M10.6 1.6 C8.4 1.2 6.4 3.2 7.2 5.8 L1.9 11.3 C0.9 12.4 2.0 14.6 3.9 13.9 L9.6 8.6 C12.4 9.5 14.6 7.4 14.2 5.0 L12.0 7.0 L9.8 6.2 L9.1 4.0 Z" fill="none" stroke="#6f9df0" stroke-width="1.2" stroke-linecap="round" stroke-linejoin="round" /></svg>
<svg style="left:252.0px;top:111.80000000000001px;" width="24" height="24" viewBox="0 0 16 16"><path d="M3 3.2 L13 3.2 L8 12.6 Z" fill="none" stroke="#1fd6a0" stroke-width="1.1" stroke-linecap="round" stroke-linejoin="round" /><rect x="1.6" y="1.8" width="3" height="3" fill="#282828" stroke="#1fd6a0" stroke-width="1"/><rect x="11.4" y="1.8" width="3" height="3" fill="#282828" stroke="#1fd6a0" stroke-width="1"/><rect x="6.5" y="11.2" width="3" height="3" fill="#282828" stroke="#1fd6a0" stroke-width="1"/></svg>
<svg style="left:590.0999999999999px;top:113.30000000000001px;" width="23" height="23" viewBox="0 0 16 16"><path d="M1 8 C3 4.2 5.6 3.2 8 3.2 C10.4 3.2 13 4.2 15 8 C13 11.8 10.4 12.8 8 12.8 C5.6 12.8 3 11.8 1 8 Z" fill="#e6e6e6" /><circle cx="8" cy="8" r="2.7" fill="#282828"/><circle cx="8" cy="8" r="1.2" fill="#e6e6e6"/></svg>
<svg style="left:618.5px;top:112.80000000000001px;" width="23" height="23" viewBox="0 0 16 16"><path d="M2 4.2 L5 4.2 L6 2.6 L10 2.6 L11 4.2 L14 4.2 C14.6 4.2 15 4.6 15 5.2 L15 12.6 C15 13.2 14.6 13.6 14 13.6 L2 13.6 C1.4 13.6 1 13.2 1 12.6 L1 5.2 C1 4.6 1.4 4.2 2 4.2 Z" fill="#e6e6e6" /><circle cx="8" cy="8.8" r="2.7" fill="none" stroke="#282828" stroke-width="0.8"/><circle cx="8" cy="8.8" r="1.3" fill="#282828"/></svg>
<svg style="left:64.5px;top:146.3px;" width="15.0" height="15.0" viewBox="0 0 15.0 15.0"><path d="M4.75 2 L10.25 7.5 L4.75 13.0" fill="none" stroke="#c8c8c8" stroke-width="1.6" stroke-linecap="round" stroke-linejoin="round"/></svg>
<svg style="left:90px;top:141.8px;" width="24" height="24" viewBox="0 0 16 16"><path d="M2.4 3.2 L13.6 3.2 L8 13.2 Z" fill="none" stroke="#d68a4f" stroke-width="2.7" stroke-linecap="round" stroke-linejoin="round" stroke-linejoin="round"/></svg>
<div style="left:120.5px;top:141.60000000000002px;height:25px;line-height:25px;font-size:17px;color:#e0e0e0;white-space:nowrap;letter-spacing:0.5px;">球体</div>
<svg style="left:187.5px;top:141.8px;" width="22" height="22" viewBox="0 0 16 16"><path d="M10.6 1.6 C8.4 1.2 6.4 3.2 7.2 5.8 L1.9 11.3 C0.9 12.4 2.0 14.6 3.9 13.9 L9.6 8.6 C12.4 9.5 14.6 7.4 14.2 5.0 L12.0 7.0 L9.8 6.2 L9.1 4.0 Z" fill="none" stroke="#6f9df0" stroke-width="1.2" stroke-linecap="round" stroke-linejoin="round" /></svg>
<svg style="left:215.5px;top:140.8px;" width="24" height="24" viewBox="0 0 16 16"><path d="M3 3.2 L13 3.2 L8 12.6 Z" fill="none" stroke="#1fd6a0" stroke-width="1.1" stroke-linecap="round" stroke-linejoin="round" /><rect x="1.6" y="1.8" width="3" height="3" fill="#282828" stroke="#1fd6a0" stroke-width="1"/><rect x="11.4" y="1.8" width="3" height="3" fill="#282828" stroke="#1fd6a0" stroke-width="1"/><rect x="6.5" y="11.2" width="3" height="3" fill="#282828" stroke="#1fd6a0" stroke-width="1"/></svg>
<svg style="left:590.0999999999999px;top:142.3px;" width="23" height="23" viewBox="0 0 16 16"><path d="M1 8 C3 4.2 5.6 3.2 8 3.2 C10.4 3.2 13 4.2 15 8 C13 11.8 10.4 12.8 8 12.8 C5.6 12.8 3 11.8 1 8 Z" fill="#e6e6e6" /><circle cx="8" cy="8" r="2.7" fill="#282828"/><circle cx="8" cy="8" r="1.2" fill="#e6e6e6"/></svg>
<svg style="left:618.5px;top:141.8px;" width="23" height="23" viewBox="0 0 16 16"><path d="M2 4.2 L5 4.2 L6 2.6 L10 2.6 L11 4.2 L14 4.2 C14.6 4.2 15 4.6 15 5.2 L15 12.6 C15 13.2 14.6 13.6 14 13.6 L2 13.6 C1.4 13.6 1 13.2 1 12.6 L1 5.2 C1 4.6 1.4 4.2 2 4.2 Z" fill="#e6e6e6" /><circle cx="8" cy="8.8" r="2.7" fill="none" stroke="#282828" stroke-width="0.8"/><circle cx="8" cy="8.8" r="1.3" fill="#282828"/></svg>
<div style="left:0px;top:168.3px;width:658px;height:29px;background:#2b2b2b;"></div>
<svg style="left:64.5px;top:175.3px;" width="15.0" height="15.0" viewBox="0 0 15.0 15.0"><path d="M4.75 2 L10.25 7.5 L4.75 13.0" fill="none" stroke="#c8c8c8" stroke-width="1.6" stroke-linecap="round" stroke-linejoin="round"/></svg>
<svg style="left:90px;top:170.8px;" width="24" height="24" viewBox="0 0 16 16"><path d="M2.4 3.2 L13.6 3.2 L8 13.2 Z" fill="none" stroke="#d68a4f" stroke-width="2.7" stroke-linecap="round" stroke-linejoin="round" stroke-linejoin="round"/></svg>
<div style="left:120.5px;top:170.60000000000002px;height:25px;line-height:25px;font-size:17px;color:#e0e0e0;white-space:nowrap;letter-spacing:0.5px;">球体.001</div>
<svg style="left:224.0px;top:170.8px;" width="22" height="22" viewBox="0 0 16 16"><path d="M10.6 1.6 C8.4 1.2 6.4 3.2 7.2 5.8 L1.9 11.3 C0.9 12.4 2.0 14.6 3.9 13.9 L9.6 8.6 C12.4 9.5 14.6 7.4 14.2 5.0 L12.0 7.0 L9.8 6.2 L9.1 4.0 Z" fill="none" stroke="#6f9df0" stroke-width="1.2" stroke-linecap="round" stroke-linejoin="round" /></svg>
<svg style="left:252.0px;top:169.8px;" width="24" height="24" viewBox="0 0 16 16"><path d="M3 3.2 L13 3.2 L8 12.6 Z" fill="none" stroke="#1fd6a0" stroke-width="1.1" stroke-linecap="round" stroke-linejoin="round" /><rect x="1.6" y="1.8" width="3" height="3" fill="#282828" stroke="#1fd6a0" stroke-width="1"/><rect x="11.4" y="1.8" width="3" height="3" fill="#282828" stroke="#1fd6a0" stroke-width="1"/><rect x="6.5" y="11.2" width="3" height="3" fill="#282828" stroke="#1fd6a0" stroke-width="1"/></svg>
<svg style="left:590.0999999999999px;top:171.3px;" width="23" height="23" viewBox="0 0 16 16"><path d="M1 8 C3 4.2 5.6 3.2 8 3.2 C10.4 3.2 13 4.2 15 8 C13 11.8 10.4 12.8 8 12.8 C5.6 12.8 3 11.8 1 8 Z" fill="#e6e6e6" /><circle cx="8" cy="8" r="2.7" fill="#282828"/><circle cx="8" cy="8" r="1.2" fill="#e6e6e6"/></svg>
<svg style="left:618.5px;top:170.8px;" width="23" height="23" viewBox="0 0 16 16"><path d="M2 4.2 L5 4.2 L6 2.6 L10 2.6 L11 4.2 L14 4.2 C14.6 4.2 15 4.6 15 5.2 L15 12.6 C15 13.2 14.6 13.6 14 13.6 L2 13.6 C1.4 13.6 1 13.2 1 12.6 L1 5.2 C1 4.6 1.4 4.2 2 4.2 Z" fill="#e6e6e6" /><circle cx="8" cy="8.8" r="2.7" fill="none" stroke="#282828" stroke-width="0.8"/><circle cx="8" cy="8.8" r="1.3" fill="#282828"/></svg>
<svg style="left:64.5px;top:204.3px;" width="15.0" height="15.0" viewBox="0 0 15.0 15.0"><path d="M4.75 2 L10.25 7.5 L4.75 13.0" fill="none" stroke="#c8c8c8" stroke-width="1.6" stroke-linecap="round" stroke-linejoin="round"/></svg>
<svg style="left:90px;top:199.8px;" width="24" height="24" viewBox="0 0 16 16"><path d="M2.4 3.2 L13.6 3.2 L8 13.2 Z" fill="none" stroke="#d68a4f" stroke-width="2.7" stroke-linecap="round" stroke-linejoin="round" stroke-linejoin="round"/></svg>
<div style="left:120.5px;top:199.60000000000002px;height:25px;line-height:25px;font-size:17px;color:#e0e0e0;white-space:nowrap;letter-spacing:0.5px;">立方体</div>
<svg style="left:204.5px;top:199.8px;" width="22" height="22" viewBox="0 0 16 16"><path d="M10.6 1.6 C8.4 1.2 6.4 3.2 7.2 5.8 L1.9 11.3 C0.9 12.4 2.0 14.6 3.9 13.9 L9.6 8.6 C12.4 9.5 14.6 7.4 14.2 5.0 L12.0 7.0 L9.8 6.2 L9.1 4.0 Z" fill="none" stroke="#6f9df0" stroke-width="1.2" stroke-linecap="round" stroke-linejoin="round" /></svg>
<svg style="left:232.5px;top:198.8px;" width="24" height="24" viewBox="0 0 16 16"><path d="M3 3.2 L13 3.2 L8 12.6 Z" fill="none" stroke="#1fd6a0" stroke-width="1.1" stroke-linecap="round" stroke-linejoin="round" /><rect x="1.6" y="1.8" width="3" height="3" fill="#282828" stroke="#1fd6a0" stroke-width="1"/><rect x="11.4" y="1.8" width="3" height="3" fill="#282828" stroke="#1fd6a0" stroke-width="1"/><rect x="6.5" y="11.2" width="3" height="3" fill="#282828" stroke="#1fd6a0" stroke-width="1"/></svg>
<svg style="left:590.0999999999999px;top:200.3px;" width="23" height="23" viewBox="0 0 16 16"><path d="M1 8 C3 4.2 5.6 3.2 8 3.2 C10.4 3.2 13 4.2 15 8 C13 11.8 10.4 12.8 8 12.8 C5.6 12.8 3 11.8 1 8 Z" fill="#e6e6e6" /><circle cx="8" cy="8" r="2.7" fill="#282828"/><circle cx="8" cy="8" r="1.2" fill="#e6e6e6"/></svg>
<svg style="left:618.5px;top:199.8px;" width="23" height="23" viewBox="0 0 16 16"><path d="M2 4.2 L5 4.2 L6 2.6 L10 2.6 L11 4.2 L14 4.2 C14.6 4.2 15 4.6 15 5.2 L15 12.6 C15 13.2 14.6 13.6 14 13.6 L2 13.6 C1.4 13.6 1 13.2 1 12.6 L1 5.2 C1 4.6 1.4 4.2 2 4.2 Z" fill="#e6e6e6" /><circle cx="8" cy="8.8" r="2.7" fill="none" stroke="#282828" stroke-width="0.8"/><circle cx="8" cy="8.8" r="1.3" fill="#282828"/></svg>
<div style="left:0px;top:226.3px;width:658px;height:29px;background:#2b2b2b;"></div>
<svg style="left:64.5px;top:233.3px;" width="15.0" height="15.0" viewBox="0 0 15.0 15.0"><path d="M4.75 2 L10.25 7.5 L4.75 13.0" fill="none" stroke="#c8c8c8" stroke-width="1.6" stroke-linecap="round" stroke-linejoin="round"/></svg>
<svg style="left:90px;top:228.8px;" width="24" height="24" viewBox="0 0 16 16"><path d="M2.4 3.2 L13.6 3.2 L8 13.2 Z" fill="none" stroke="#d68a4f" stroke-width="2.7" stroke-linecap="round" stroke-linejoin="round" stroke-linejoin="round"/></svg>
<div style="left:120.5px;top:228.60000000000002px;height:25px;line-height:25px;font-size:17px;color:#e0e0e0;white-space:nowrap;letter-spacing:0.5px;">立方体.001</div>
<svg style="left:240.5px;top:228.8px;" width="22" height="22" viewBox="0 0 16 16"><path d="M10.6 1.6 C8.4 1.2 6.4 3.2 7.2 5.8 L1.9 11.3 C0.9 12.4 2.0 14.6 3.9 13.9 L9.6 8.6 C12.4 9.5 14.6 7.4 14.2 5.0 L12.0 7.0 L9.8 6.2 L9.1 4.0 Z" fill="none" stroke="#6f9df0" stroke-width="1.2" stroke-linecap="round" stroke-linejoin="round" /></svg>
<svg style="left:268.5px;top:227.8px;" width="24" height="24" viewBox="0 0 16 16"><path d="M3 3.2 L13 3.2 L8 12.6 Z" fill="none" stroke="#1fd6a0" stroke-width="1.1" stroke-linecap="round" stroke-linejoin="round" /><rect x="1.6" y="1.8" width="3" height="3" fill="#282828" stroke="#1fd6a0" stroke-width="1"/><rect x="11.4" y="1.8" width="3" height="3" fill="#282828" stroke="#1fd6a0" stroke-width="1"/><rect x="6.5" y="11.2" width="3" height="3" fill="#282828" stroke="#1fd6a0" stroke-width="1"/></svg>
<svg style="left:590.0999999999999px;top:229.3px;" width="23" height="23" viewBox="0 0 16 16"><path d="M1 8 C3 4.2 5.6 3.2 8 3.2 C10.4 3.2 13 4.2 15 8 C13 11.8 10.4 12.8 8 12.8 C5.6 12.8 3 11.8 1 8 Z" fill="#e6e6e6" /><circle cx="8" cy="8" r="2.7" fill="#282828"/><circle cx="8" cy="8" r="1.2" fill="#e6e6e6"/></svg>
<svg style="left:618.5px;top:228.8px;" width="23" height="23" viewBox="0 0 16 16"><path d="M2 4.2 L5 4.2 L6 2.6 L10 2.6 L11 4.2 L14 4.2 C14.6 4.2 15 4.6 15 5.2 L15 12.6 C15 13.2 14.6 13.6 14 13.6 L2 13.6 C1.4 13.6 1 13.2 1 12.6 L1 5.2 C1 4.6 1.4 4.2 2 4.2 Z" fill="#e6e6e6" /><circle cx="8" cy="8.8" r="2.7" fill="none" stroke="#282828" stroke-width="0.8"/><circle cx="8" cy="8.8" r="1.3" fill="#282828"/></svg>
<svg style="left:64.5px;top:262.3px;" width="15.0" height="15.0" viewBox="0 0 15.0 15.0"><path d="M4.75 2 L10.25 7.5 L4.75 13.0" fill="none" stroke="#c8c8c8" stroke-width="1.6" stroke-linecap="round" stroke-linejoin="round"/></svg>
<svg style="left:90px;top:257.8px;" width="24" height="24" viewBox="0 0 16 16"><path d="M2.4 3.2 L13.6 3.2 L8 13.2 Z" fill="none" stroke="#d68a4f" stroke-width="2.7" stroke-linecap="round" stroke-linejoin="round" stroke-linejoin="round"/></svg>
<div style="left:120.5px;top:257.6px;height:25px;line-height:25px;font-size:17px;color:#e0e0e0;white-space:nowrap;letter-spacing:0.5px;">立方体.002</div>
<svg style="left:240.5px;top:257.8px;" width="22" height="22" viewBox="0 0 16 16"><path d="M10.6 1.6 C8.4 1.2 6.4 3.2 7.2 5.8 L1.9 11.3 C0.9 12.4 2.0 14.6 3.9 13.9 L9.6 8.6 C12.4 9.5 14.6 7.4 14.2 5.0 L12.0 7.0 L9.8 6.2 L9.1 4.0 Z" fill="none" stroke="#6f9df0" stroke-width="1.2" stroke-linecap="round" stroke-linejoin="round" /></svg>
<svg style="left:268.5px;top:256.8px;" width="24" height="24" viewBox="0 0 16 16"><path d="M3 3.2 L13 3.2 L8 12.6 Z" fill="none" stroke="#1fd6a0" stroke-width="1.1" stroke-linecap="round" stroke-linejoin="round" /><rect x="1.6" y="1.8" width="3" height="3" fill="#282828" stroke="#1fd6a0" stroke-width="1"/><rect x="11.4" y="1.8" width="3" height="3" fill="#282828" stroke="#1fd6a0" stroke-width="1"/><rect x="6.5" y="11.2" width="3" height="3" fill="#282828" stroke="#1fd6a0" stroke-width="1"/></svg>
<svg style="left:590.0999999999999px;top:258.3px;" width="23" height="23" viewBox="0 0 16 16"><path d="M1 8 C3 4.2 5.6 3.2 8 3.2 C10.4 3.2 13 4.2 15 8 C13 11.8 10.4 12.8 8 12.8 C5.6 12.8 3 11.8 1 8 Z" fill="#e6e6e6" /><circle cx="8" cy="8" r="2.7" fill="#282828"/><circle cx="8" cy="8" r="1.2" fill="#e6e6e6"/></svg>
<svg style="left:618.5px;top:257.8px;" width="23" height="23" viewBox="0 0 16 16"><path d="M2 4.2 L5 4.2 L6 2.6 L10 2.6 L11 4.2 L14 4.2 C14.6 4.2 15 4.6 15 5.2 L15 12.6 C15 13.2 14.6 13.6 14 13.6 L2 13.6 C1.4 13.6 1 13.2 1 12.6 L1 5.2 C1 4.6 1.4 4.2 2 4.2 Z" fill="#e6e6e6" /><circle cx="8" cy="8.8" r="2.7" fill="none" stroke="#282828" stroke-width="0.8"/><circle cx="8" cy="8.8" r="1.3" fill="#282828"/></svg>
<div style="left:0px;top:284.3px;width:658px;height:29px;background:#2b2b2b;"></div>
<svg style="left:64.5px;top:291.3px;" width="15.0" height="15.0" viewBox="0 0 15.0 15.0"><path d="M4.75 2 L10.25 7.5 L4.75 13.0" fill="none" stroke="#c8c8c8" stroke-width="1.6" stroke-linecap="round" stroke-linejoin="round"/></svg>
<svg style="left:90px;top:286.8px;" width="24" height="24" viewBox="0 0 16 16"><path d="M2.4 3.2 L13.6 3.2 L8 13.2 Z" fill="none" stroke="#d68a4f" stroke-width="2.7" stroke-linecap="round" stroke-linejoin="round" stroke-linejoin="round"/></svg>
<div style="left:120.5px;top:286.6px;height:25px;line-height:25px;font-size:17px;color:#e0e0e0;white-space:nowrap;letter-spacing:0.5px;">立方体.003</div>
<svg style="left:240.5px;top:286.8px;" width="22" height="22" viewBox="0 0 16 16"><path d="M10.6 1.6 C8.4 1.2 6.4 3.2 7.2 5.8 L1.9 11.3 C0.9 12.4 2.0 14.6 3.9 13.9 L9.6 8.6 C12.4 9.5 14.6 7.4 14.2 5.0 L12.0 7.0 L9.8 6.2 L9.1 4.0 Z" fill="none" stroke="#6f9df0" stroke-width="1.2" stroke-linecap="round" stroke-linejoin="round" /></svg>
<svg style="left:268.5px;top:285.8px;" width="24" height="24" viewBox="0 0 16 16"><path d="M3 3.2 L13 3.2 L8 12.6 Z" fill="none" stroke="#1fd6a0" stroke-width="1.1" stroke-linecap="round" stroke-linejoin="round" /><rect x="1.6" y="1.8" width="3" height="3" fill="#282828" stroke="#1fd6a0" stroke-width="1"/><rect x="11.4" y="1.8" width="3" height="3" fill="#282828" stroke="#1fd6a0" stroke-width="1"/><rect x="6.5" y="11.2" width="3" height="3" fill="#282828" stroke="#1fd6a0" stroke-width="1"/></svg>
<svg style="left:590.0999999999999px;top:287.3px;" width="23" height="23" viewBox="0 0 16 16"><path d="M1 8 C3 4.2 5.6 3.2 8 3.2 C10.4 3.2 13 4.2 15 8 C13 11.8 10.4 12.8 8 12.8 C5.6 12.8 3 11.8 1 8 Z" fill="#e6e6e6" /><circle cx="8" cy="8" r="2.7" fill="#282828"/><circle cx="8" cy="8" r="1.2" fill="#e6e6e6"/></svg>
<svg style="left:618.5px;top:286.8px;" width="23" height="23" viewBox="0 0 16 16"><path d="M2 4.2 L5 4.2 L6 2.6 L10 2.6 L11 4.2 L14 4.2 C14.6 4.2 15 4.6 15 5.2 L15 12.6 C15 13.2 14.6 13.6 14 13.6 L2 13.6 C1.4 13.6 1 13.2 1 12.6 L1 5.2 C1 4.6 1.4 4.2 2 4.2 Z" fill="#e6e6e6" /><circle cx="8" cy="8.8" r="2.7" fill="none" stroke="#282828" stroke-width="0.8"/><circle cx="8" cy="8.8" r="1.3" fill="#282828"/></svg>
<svg style="left:64.5px;top:320.3px;" width="15.0" height="15.0" viewBox="0 0 15.0 15.0"><path d="M4.75 2 L10.25 7.5 L4.75 13.0" fill="none" stroke="#c8c8c8" stroke-width="1.6" stroke-linecap="round" stroke-linejoin="round"/></svg>
<svg style="left:90px;top:315.8px;" width="24" height="24" viewBox="0 0 16 16"><path d="M2.4 3.2 L13.6 3.2 L8 13.2 Z" fill="none" stroke="#d68a4f" stroke-width="2.7" stroke-linecap="round" stroke-linejoin="round" stroke-linejoin="round"/></svg>
<div style="left:120.5px;top:315.6px;height:25px;line-height:25px;font-size:17px;color:#e0e0e0;white-space:nowrap;letter-spacing:0.5px;">立方体.004</div>
<svg style="left:240.5px;top:315.8px;" width="22" height="22" viewBox="0 0 16 16"><path d="M10.6 1.6 C8.4 1.2 6.4 3.2 7.2 5.8 L1.9 11.3 C0.9 12.4 2.0 14.6 3.9 13.9 L9.6 8.6 C12.4 9.5 14.6 7.4 14.2 5.0 L12.0 7.0 L9.8 6.2 L9.1 4.0 Z" fill="none" stroke="#6f9df0" stroke-width="1.2" stroke-linecap="round" stroke-linejoin="round" /></svg>
<svg style="left:268.5px;top:314.8px;" width="24" height="24" viewBox="0 0 16 16"><path d="M3 3.2 L13 3.2 L8 12.6 Z" fill="none" stroke="#1fd6a0" stroke-width="1.1" stroke-linecap="round" stroke-linejoin="round" /><rect x="1.6" y="1.8" width="3" height="3" fill="#282828" stroke="#1fd6a0" stroke-width="1"/><rect x="11.4" y="1.8" width="3" height="3" fill="#282828" stroke="#1fd6a0" stroke-width="1"/><rect x="6.5" y="11.2" width="3" height="3" fill="#282828" stroke="#1fd6a0" stroke-width="1"/></svg>
<svg style="left:590.0999999999999px;top:316.3px;" width="23" height="23" viewBox="0 0 16 16"><path d="M1 8 C3 4.2 5.6 3.2 8 3.2 C10.4 3.2 13 4.2 15 8 C13 11.8 10.4 12.8 8 12.8 C5.6 12.8 3 11.8 1 8 Z" fill="#e6e6e6" /><circle cx="8" cy="8" r="2.7" fill="#282828"/><circle cx="8" cy="8" r="1.2" fill="#e6e6e6"/></svg>
<svg style="left:618.5px;top:315.8px;" width="23" height="23" viewBox="0 0 16 16"><path d="M2 4.2 L5 4.2 L6 2.6 L10 2.6 L11 4.2 L14 4.2 C14.6 4.2 15 4.6 15 5.2 L15 12.6 C15 13.2 14.6 13.6 14 13.6 L2 13.6 C1.4 13.6 1 13.2 1 12.6 L1 5.2 C1 4.6 1.4 4.2 2 4.2 Z" fill="#e6e6e6" /><circle cx="8" cy="8.8" r="2.7" fill="none" stroke="#282828" stroke-width="0.8"/><circle cx="8" cy="8.8" r="1.3" fill="#282828"/></svg>
<div style="left:0px;top:342.3px;width:658px;height:29px;background:#2b2b2b;"></div>
<div style="left:87px;top:343.3px;width:29px;height:27px;background:#555555;border-radius:7px;border:1px solid #6a6a6a;box-sizing:border-box;"></div>
<svg style="left:64.5px;top:349.3px;" width="15.0" height="15.0" viewBox="0 0 15.0 15.0"><path d="M4.75 2 L10.25 7.5 L4.75 13.0" fill="none" stroke="#c8c8c8" stroke-width="1.6" stroke-linecap="round" stroke-linejoin="round"/></svg>
<svg style="left:90px;top:344.8px;" width="24" height="24" viewBox="0 0 16 16"><path d="M2.4 3.2 L13.6 3.2 L8 13.2 Z" fill="none" stroke="#d68a4f" stroke-width="2.7" stroke-linecap="round" stroke-linejoin="round" stroke-linejoin="round"/></svg>
<div style="left:120.5px;top:344.6px;height:25px;line-height:25px;font-size:17px;color:#e0e0e0;white-space:nowrap;letter-spacing:0.5px;">立方体.005</div>
<svg style="left:240.5px;top:344.8px;" width="22" height="22" viewBox="0 0 16 16"><path d="M10.6 1.6 C8.4 1.2 6.4 3.2 7.2 5.8 L1.9 11.3 C0.9 12.4 2.0 14.6 3.9 13.9 L9.6 8.6 C12.4 9.5 14.6 7.4 14.2 5.0 L12.0 7.0 L9.8 6.2 L9.1 4.0 Z" fill="none" stroke="#6f9df0" stroke-width="1.2" stroke-linecap="round" stroke-linejoin="round" /></svg>
<svg style="left:268.5px;top:343.8px;" width="24" height="24" viewBox="0 0 16 16"><path d="M3 3.2 L13 3.2 L8 12.6 Z" fill="none" stroke="#1fd6a0" stroke-width="1.1" stroke-linecap="round" stroke-linejoin="round" /><rect x="1.6" y="1.8" width="3" height="3" fill="#282828" stroke="#1fd6a0" stroke-width="1"/><rect x="11.4" y="1.8" width="3" height="3" fill="#282828" stroke="#1fd6a0" stroke-width="1"/><rect x="6.5" y="11.2" width="3" height="3" fill="#282828" stroke="#1fd6a0" stroke-width="1"/></svg>
<svg style="left:590.0999999999999px;top:345.3px;" width="23" height="23" viewBox="0 0 16 16"><path d="M1 8 C3 4.2 5.6 3.2 8 3.2 C10.4 3.2 13 4.2 15 8 C13 11.8 10.4 12.8 8 12.8 C5.6 12.8 3 11.8 1 8 Z" fill="#e6e6e6" /><circle cx="8" cy="8" r="2.7" fill="#282828"/><circle cx="8" cy="8" r="1.2" fill="#e6e6e6"/></svg>
<svg style="left:618.5px;top:344.8px;" width="23" height="23" viewBox="0 0 16 16"><path d="M2 4.2 L5 4.2 L6 2.6 L10 2.6 L11 4.2 L14 4.2 C14.6 4.2 15 4.6 15 5.2 L15 12.6 C15 13.2 14.6 13.6 14 13.6 L2 13.6 C1.4 13.6 1 13.2 1 12.6 L1 5.2 C1 4.6 1.4 4.2 2 4.2 Z" fill="#e6e6e6" /><circle cx="8" cy="8.8" r="2.7" fill="none" stroke="#282828" stroke-width="0.8"/><circle cx="8" cy="8.8" r="1.3" fill="#282828"/></svg>
<svg style="left:64.5px;top:378.3px;" width="15.0" height="15.0" viewBox="0 0 15.0 15.0"><path d="M4.75 2 L10.25 7.5 L4.75 13.0" fill="none" stroke="#c8c8c8" stroke-width="1.6" stroke-linecap="round" stroke-linejoin="round"/></svg>
<svg style="left:90px;top:373.8px;" width="24" height="24" viewBox="0 0 16 16"><path d="M2.4 3.2 L13.6 3.2 L8 13.2 Z" fill="none" stroke="#d68a4f" stroke-width="2.7" stroke-linecap="round" stroke-linejoin="round" stroke-linejoin="round"/></svg>
<div style="left:120.5px;top:373.6px;height:25px;line-height:25px;font-size:17px;color:#e0e0e0;white-space:nowrap;letter-spacing:0.5px;">立方体.006</div>
<svg style="left:240.5px;top:373.8px;" width="22" height="22" viewBox="0 0 16 16"><path d="M10.6 1.6 C8.4 1.2 6.4 3.2 7.2 5.8 L1.9 11.3 C0.9 12.4 2.0 14.6 3.9 13.9 L9.6 8.6 C12.4 9.5 14.6 7.4 14.2 5.0 L12.0 7.0 L9.8 6.2 L9.1 4.0 Z" fill="none" stroke="#6f9df0" stroke-width="1.2" stroke-linecap="round" stroke-linejoin="round" /></svg>
<svg style="left:268.5px;top:372.8px;" width="24" height="24" viewBox="0 0 16 16"><path d="M3 3.2 L13 3.2 L8 12.6 Z" fill="none" stroke="#1fd6a0" stroke-width="1.1" stroke-linecap="round" stroke-linejoin="round" /><rect x="1.6" y="1.8" width="3" height="3" fill="#282828" stroke="#1fd6a0" stroke-width="1"/><rect x="11.4" y="1.8" width="3" height="3" fill="#282828" stroke="#1fd6a0" stroke-width="1"/><rect x="6.5" y="11.2" width="3" height="3" fill="#282828" stroke="#1fd6a0" stroke-width="1"/></svg>
<svg style="left:590.0999999999999px;top:374.3px;" width="23" height="23" viewBox="0 0 16 16"><path d="M1 8 C3 4.2 5.6 3.2 8 3.2 C10.4 3.2 13 4.2 15 8 C13 11.8 10.4 12.8 8 12.8 C5.6 12.8 3 11.8 1 8 Z" fill="#e6e6e6" /><circle cx="8" cy="8" r="2.7" fill="#282828"/><circle cx="8" cy="8" r="1.2" fill="#e6e6e6"/></svg>
<svg style="left:618.5px;top:373.8px;" width="23" height="23" viewBox="0 0 16 16"><path d="M2 4.2 L5 4.2 L6 2.6 L10 2.6 L11 4.2 L14 4.2 C14.6 4.2 15 4.6 15 5.2 L15 12.6 C15 13.2 14.6 13.6 14 13.6 L2 13.6 C1.4 13.6 1 13.2 1 12.6 L1 5.2 C1 4.6 1.4 4.2 2 4.2 Z" fill="#e6e6e6" /><circle cx="8" cy="8.8" r="2.7" fill="none" stroke="#282828" stroke-width="0.8"/><circle cx="8" cy="8.8" r="1.3" fill="#282828"/></svg>
<div style="left:42.5px;top:37px;width:1px;height:360px;background:#4d4d4d;"></div>
<div style="left:651px;top:178px;width:4px;height:164px;background:#4d4d4d;border-radius:2px;"></div>
<div style="left:0px;top:0px;width:658px;height:38px;background:#2b2b2b;box-shadow:0 1px 4px rgba(0,0,0,0.4);"></div>
<div style="left:12px;top:4px;width:46px;height:27px;background:#262626;border-radius:5px;border:1px solid #464646;box-sizing:border-box;"></div>
<svg style="left:16px;top:7px;" width="22" height="22" viewBox="0 0 16 16"><rect x="1.5" y="1.5" width="5" height="3" fill="#e6e6e6"/><rect x="7.5" y="6.5" width="7" height="3" fill="#e6e6e6"/><rect x="7.5" y="11.5" width="7" height="3" fill="#e6e6e6"/><path d="M3 6 L3 13 L6 13 M3 8 L6 8" fill="none" stroke="#e6e6e6" stroke-width="1.1" stroke-linecap="round" stroke-linejoin="round" /></svg>
<svg style="left:42.5px;top:13px;" width="12" height="12" viewBox="0 0 12 12"><path d="M2 4.0 L6 8.0 L10 4.0" fill="none" stroke="#e6e6e6" stroke-width="1.8" stroke-linecap="round" stroke-linejoin="round"/></svg>
<div style="left:65px;top:4px;width:46px;height:27px;background:#262626;border-radius:5px;border:1px solid #464646;box-sizing:border-box;"></div>
<svg style="left:70px;top:6px;" width="23" height="23" viewBox="0 0 16 16"><path d="M1.5 6 L1.5 14.5 L10 14.5 M3.5 4 L3.5 12.5 L12 12.5" fill="none" stroke="#e6e6e6" stroke-width="1.1" stroke-linecap="round" stroke-linejoin="round" /><rect x="5.5" y="1.5" width="9" height="9" fill="none" stroke="#e6e6e6" stroke-width="1.2"/><path d="M6.5 9.5 L9.2 5 L11 8 L12 7 L13.5 9.5 Z" fill="#e6e6e6" /><circle cx="12.3" cy="3.8" r="1" fill="#e6e6e6"/></svg>
<svg style="left:95.5px;top:13px;" width="12" height="12" viewBox="0 0 12 12"><path d="M2 4.0 L6 8.0 L10 4.0" fill="none" stroke="#e6e6e6" stroke-width="1.8" stroke-linecap="round" stroke-linejoin="round"/></svg>
<div style="left:227px;top:4px;width:172px;height:27px;background:#1d1d1d;border-radius:5px;border:1px solid #464646;box-sizing:border-box;"></div>
<svg style="left:232px;top:6px;" width="24" height="24" viewBox="0 0 16 16"><path d="M6.5 2 A4.5 4.5 0 1 0 6.5 11 A4.5 4.5 0 1 0 6.5 2 M9.8 9.8 L14 14" fill="none" stroke="#e6e6e6" stroke-width="1.3" stroke-linecap="round" stroke-linejoin="round" /></svg>
<div style="left:265px;top:6px;height:25px;line-height:25px;font-size:17px;color:#6e6e6e;white-space:nowrap;">搜索</div>
<div style="left:565px;top:4px;width:46px;height:27px;background:#262626;border-radius:5px;border:1px solid #464646;box-sizing:border-box;"></div>
<svg style="left:569px;top:6px;" width="23" height="23" viewBox="0 0 16 16"><path d="M1.8 2.2 L14.2 2.2 L9.4 8 L9.4 13.6 L6.8 12.2 L6.8 8 Z" fill="none" stroke="#e6e6e6" stroke-width="1.2" stroke-linecap="round" stroke-linejoin="round" /></svg>
<svg style="left:595.5px;top:13px;" width="12" height="12" viewBox="0 0 12 12"><path d="M2 4.0 L6 8.0 L10 4.0" fill="none" stroke="#e6e6e6" stroke-width="1.8" stroke-linecap="round" stroke-linejoin="round"/></svg>
<div style="left:618px;top:4px;width:29px;height:27px;background:#545454;border-radius:5px;"></div>
<svg style="left:621px;top:6px;" width="23" height="23" viewBox="0 0 16 16"><rect x="2" y="3.5" width="10" height="3" fill="none" stroke="#e0e0e0" stroke-width="1.1"/><path d="M3 6.5 L3 13.5 L11 13.5 L11 9" fill="none" stroke="#e0e0e0" stroke-width="1.1" stroke-linecap="round" stroke-linejoin="round" /><path d="M5.5 9.2 L8.5 9.2" fill="none" stroke="#e0e0e0" stroke-width="1.1" stroke-linecap="round" stroke-linejoin="round" /><circle cx="12.2" cy="4.2" r="3.4" fill="#e0e0e0"/><path d="M10.4 4.2 L14 4.2 M12.2 2.4 L12.2 6" fill="none" stroke="#555" stroke-width="1.1" stroke-linecap="round" stroke-linejoin="round" /></svg>
</div>
<svg style="left:2040px;top:140px;" width="66" height="90" viewBox="2040 140 66 90"><defs><linearGradient id="lg" x1="0.2" y1="0" x2="0.7" y2="1"><stop offset="0" stop-color="#62c8e6"/><stop offset="0.45" stop-color="#8fb4e6"/><stop offset="0.75" stop-color="#c9a4e2"/><stop offset="1" stop-color="#f09cc8"/></linearGradient></defs>
<circle cx="2089.4" cy="185" r="33.5" fill="rgba(255,255,255,0.31)" stroke="url(#lg)" stroke-width="5.3"/>
<path d="M2075.5 171.5 L2084.5 175.5 M2071.5 180.5 L2083.5 187.5 M2088.5 177.5 L2102 171 M2083.5 195 Q2085.8 197 2085.8 200 L2085.8 203 M2094.6 189.5 L2094 203 M2100.5 186 L2106 182.4" fill="none" stroke="#000" stroke-width="4.8" stroke-linecap="round"/></svg>
<div style="left:1444px;top:431px;width:658px;height:805px;background:#303030;border-radius:8px;overflow:hidden;">
<div style="left:0px;top:38px;width:43px;height:767px;background:#181818;"></div>
<div style="left:4.5px;top:50px;width:38.5px;height:40.2px;background:#1e1e1e;border-radius:6px 0 0 6px;"></div>
<svg style="left:12px;top:58.5px;" width="23" height="23" viewBox="0 0 16 16"><path d="M3.5 1.5 L3.5 8" fill="none" stroke="#c4c4c4" stroke-width="1.1" stroke-linecap="round" stroke-linejoin="round" /><ellipse cx="3.5" cy="11" rx="2.2" ry="2.8" fill="#c4c4c4"/><path d="M9.2 1.5 L9.2 4.5 L11 6 L12.8 4.5 L12.8 1.5 C15 3 15 6.5 12.4 7.6 L12.4 13 C12.4 15 9.6 15 9.6 13 L9.6 7.6 C7 6.5 7 3 9.2 1.5 Z" fill="#c4c4c4" /></svg>
<div style="left:4.5px;top:101px;width:38.5px;height:201.0px;background:#1e1e1e;border-radius:6px 0 0 6px;"></div>
<svg style="left:12px;top:109.5px;" width="23" height="23" viewBox="0 0 16 16"><path d="M1.5 5.5 Q1.5 4.5 2.5 4.5 L4 4.5 L5 2.8 L9 2.8 L10 4.5 L13.5 4.5 Q14.5 4.5 14.5 5.5 L14.5 12.5 Q14.5 13.5 13.5 13.5 L2.5 13.5 Q1.5 13.5 1.5 12.5 Z" fill="#c4c4c4" /><path d="M3 7 L10.5 7 M3 9 L10.5 9 M3 11 L10.5 11" fill="none" stroke="#1d1d1d" stroke-width="1" stroke-linecap="round" stroke-linejoin="round" /><circle cx="12.6" cy="7.4" r="0.9" fill="#1d1d1d"/><circle cx="12.6" cy="10.6" r="0.9" fill="#1d1d1d"/><path d="M12 2.4 L14 2.4" fill="none" stroke="#c4c4c4" stroke-width="0.9" stroke-linecap="round" stroke-linejoin="round" /></svg>
<svg style="left:12px;top:149.70000000000005px;" width="23" height="23" viewBox="0 0 16 16"><path d="M1.5 3 Q1.5 2 2.5 2 L13.5 2 Q14.5 2 14.5 3 L14.5 8 L12.5 8 L12.5 5.5 L3.5 5.5 L3.5 8 L1.5 8 Z" fill="#c4c4c4" /><path d="M4.5 6.8 L11.5 6.8 L11.5 14.5 L4.5 14.5 Z" fill="#c4c4c4" /><path d="M5.5 13.3 L8 9.5 L9.4 11.6 L10 11 L10.8 13.3 Z" fill="#1d1d1d" /></svg>
<svg style="left:12px;top:189.89999999999998px;" width="23" height="23" viewBox="0 0 16 16"><path d="M1.5 6 L1.5 14.5 L10 14.5 M3.5 4 L3.5 12.5 L12 12.5" fill="none" stroke="#c4c4c4" stroke-width="1.1" stroke-linecap="round" stroke-linejoin="round" /><rect x="5.5" y="1.5" width="9" height="9" fill="none" stroke="#c4c4c4" stroke-width="1.2"/><path d="M6.5 9.5 L9.2 5 L11 8 L12 7 L13.5 9.5 Z" fill="#c4c4c4" /><circle cx="12.3" cy="3.8" r="1" fill="#c4c4c4"/></svg>
<svg style="left:12px;top:230.10000000000002px;" width="23" height="23" viewBox="0 0 16 16"><path d="M4.8 1.6 L8.3 10.4 C6.6 12.6 3 12.6 1.3 10.4 Z" fill="#c4c4c4" /><circle cx="11" cy="11.2" r="3.1" fill="none" stroke="#c4c4c4" stroke-width="1.2"/><path d="M9.6 10.4 A1.8 1.8 0 0 1 11 9.4" fill="none" stroke="#c4c4c4" stroke-width="0.8" stroke-linecap="round" stroke-linejoin="round" /><circle cx="12.4" cy="4.4" r="1.7" fill="#c4c4c4"/></svg>
<svg style="left:12px;top:270.29999999999995px;" width="23" height="23" viewBox="0 0 16 16"><circle cx="8" cy="8" r="5.8" fill="none" stroke="#b84c58" stroke-width="1.2"/><path d="M4.2 4.6 C5.6 3.6 7.6 4 8 5 C8.4 6 7.2 6.4 7 7.4 C6.8 8.4 8.6 8.4 9 9.6 C9.4 10.8 8.2 12.4 7.4 12.6 C6.6 11.6 6.8 10.4 5.8 9.6 C4.8 8.8 3.4 8.4 3.2 6.8 Z M10.4 3.4 C11.8 4 12.8 5 13.2 6.4 C12.4 7.2 11.2 7 10.6 6.2 C10 5.4 9.8 4.2 10.4 3.4 Z" fill="#b84c58" /><path d="M2.2 13.6 L13.8 2.6" fill="none" stroke="#b84c58" stroke-width="1.0" stroke-linecap="round" stroke-linejoin="round" /></svg>
<div style="left:4.5px;top:312.5px;width:38.5px;height:40.2px;background:#1e1e1e;border-radius:6px 0 0 6px;"></div>
<svg style="left:12px;top:321.0px;" width="23" height="23" viewBox="0 0 16 16"><rect x="1.8" y="2.5" width="12.4" height="3.2" fill="none" stroke="#e6e6e6" stroke-width="1.2"/><path d="M3 5.7 L3 13.6 L13 13.6 L13 5.7" fill="none" stroke="#e6e6e6" stroke-width="1.2" stroke-linecap="round" stroke-linejoin="round" /><path d="M6.5 8.6 L9.5 8.6" fill="none" stroke="#e6e6e6" stroke-width="1.6" stroke-linecap="round" stroke-linejoin="round" /></svg>
<div style="left:4.5px;top:365px;width:38.5px;height:281.40000000000003px;background:#1e1e1e;border-radius:6px 0 0 6px;"></div>
<svg style="left:12px;top:373.5px;" width="23" height="23" viewBox="0 0 16 16"><rect x="4.3" y="4.3" width="7.4" height="7.4" fill="#cf8140"/><path d="M1.5 5 L1.5 2.5 Q1.5 1.5 2.5 1.5 L5 1.5 M11 1.5 L13.5 1.5 Q14.5 1.5 14.5 2.5 L14.5 5 M14.5 11 L14.5 13.5 Q14.5 14.5 13.5 14.5 L11 14.5 M5 14.5 L2.5 14.5 Q1.5 14.5 1.5 13.5 L1.5 11" fill="none" stroke="#cf8140" stroke-width="1.0" stroke-linecap="round" stroke-linejoin="round" /></svg>
<div style="left:4.5px;top:405.20000000000005px;width:38.5px;height:40.2px;background:#303030;border-radius:6px 0 0 6px;"></div>
<svg style="left:12px;top:413.70000000000005px;" width="23" height="23" viewBox="0 0 16 16"><path d="M10.6 1.6 C8.4 1.2 6.4 3.2 7.2 5.8 L1.9 11.3 C0.9 12.4 2.0 14.6 3.9 13.9 L9.6 8.6 C12.4 9.5 14.6 7.4 14.2 5.0 L12.0 7.0 L9.8 6.2 L9.1 4.0 Z" fill="#6fa4f5" /></svg>
<svg style="left:12px;top:453.9px;" width="23" height="23" viewBox="0 0 16 16"><path d="M3.5 3.5 L13 3 M3.5 3.5 L12.5 12.5 M3.5 3.5 L4.5 12" fill="none" stroke="#4c7bd0" stroke-width="1.1" stroke-linecap="round" stroke-linejoin="round" /><circle cx="3.5" cy="3.5" r="2.3" fill="#4c7bd0"/><circle cx="13" cy="3" r="1.5" fill="#4c7bd0"/><circle cx="12.6" cy="12.6" r="1.7" fill="#4c7bd0"/><circle cx="4.5" cy="12.3" r="1.3" fill="#4c7bd0"/></svg>
<svg style="left:12px;top:494.1px;" width="23" height="23" viewBox="0 0 16 16"><path d="M11.5 4.2 A5.8 5.8 0 1 0 13 11.5" fill="none" stroke="#4c7bd0" stroke-width="1.3" stroke-linecap="round" stroke-linejoin="round" /><circle cx="7.4" cy="8.4" r="2.3" fill="#4c7bd0"/><circle cx="13" cy="3.4" r="1.5" fill="#4c7bd0"/></svg>
<svg style="left:12px;top:534.3px;" width="23" height="23" viewBox="0 0 16 16"><circle cx="5.6" cy="10.2" r="4" fill="none" stroke="#4c7bd0" stroke-width="1.3"/><circle cx="5.6" cy="10.2" r="1.5" fill="#4c7bd0"/><path d="M2.6 7.4 C6 3.5 10 2.4 14.2 2.6 C14.6 6 12.5 10 9.4 12" fill="none" stroke="#4c7bd0" stroke-width="1.3" stroke-linecap="round" stroke-linejoin="round" /></svg>
<svg style="left:12px;top:574.5px;" width="23" height="23" viewBox="0 0 16 16"><path d="M3 3.2 L13 3.2 L8 12.6 Z" fill="none" stroke="#1fc595" stroke-width="1.1" stroke-linecap="round" stroke-linejoin="round" /><rect x="1.6" y="1.8" width="3" height="3" fill="#282828" stroke="#1fc595" stroke-width="1"/><rect x="11.4" y="1.8" width="3" height="3" fill="#282828" stroke="#1fc595" stroke-width="1"/><rect x="6.5" y="11.2" width="3" height="3" fill="#282828" stroke="#1fc595" stroke-width="1"/></svg>
<svg style="left:12px;top:614.7px;" width="23" height="23" viewBox="0 0 16 16"><circle cx="8" cy="8" r="6.2" fill="#cc5c68"/><path d="M8 1.8 A6.2 6.2 0 0 1 14.2 8 L8 8 Z" fill="#1d1d1d" /><path d="M8 8 L8 14.2 A6.2 6.2 0 0 1 1.8 8 Z" fill="#1d1d1d" opacity="0.55"/></svg>
<svg style="left:15.0px;top:672.5px;" width="13.0" height="13.0" viewBox="0 0 13.0 13.0"><path d="M2 4.25 L6.5 8.75 L11.0 4.25" fill="none" stroke="#5a5a5a" stroke-width="1.5" stroke-linecap="round" stroke-linejoin="round"/></svg>
<div style="left:12px;top:4px;width:46px;height:29px;background:#262626;border-radius:5px;border:1px solid #464646;box-sizing:border-box;"></div>
<svg style="left:17px;top:7px;" width="23" height="23" viewBox="0 0 16 16"><rect x="1.6" y="2" width="12.8" height="5.2" rx="2.6" fill="#e6e6e6"/><rect x="1.6" y="9" width="12.8" height="5.2" rx="2.6" fill="#e6e6e6"/><path d="M8 3 L11.6 3 Q13.4 3 13.4 4.6 Q13.4 6.2 11.6 6.2 L8 6.2 Z" fill="#232323" /><path d="M10 10 L11.6 10 Q13.4 10 13.4 11.6 Q13.4 13.2 11.6 13.2 L10 13.2 Z" fill="#232323" /></svg>
<svg style="left:42.5px;top:14px;" width="12" height="12" viewBox="0 0 12 12"><path d="M2 4.0 L6 8.0 L10 4.0" fill="none" stroke="#e6e6e6" stroke-width="1.8" stroke-linecap="round" stroke-linejoin="round"/></svg>
<div style="left:245px;top:4px;width:172.5px;height:28px;background:#1d1d1d;border-radius:5px;border:1px solid #464646;box-sizing:border-box;"></div>
<svg style="left:250px;top:6px;" width="24" height="24" viewBox="0 0 16 16"><path d="M6.5 2 A4.5 4.5 0 1 0 6.5 11 A4.5 4.5 0 1 0 6.5 2 M9.8 9.8 L14 14" fill="none" stroke="#e6e6e6" stroke-width="1.3" stroke-linecap="round" stroke-linejoin="round" /></svg>
<div style="left:283px;top:6px;height:26px;line-height:26px;font-size:17px;color:#6e6e6e;white-space:nowrap;">搜索</div>
<div style="left:618px;top:4px;width:29px;height:28px;background:#262626;border-radius:5px;border:1px solid #464646;box-sizing:border-box;"></div>
<svg style="left:626.5px;top:13px;" width="12" height="12" viewBox="0 0 12 12"><path d="M2 4.0 L6 8.0 L10 4.0" fill="none" stroke="#e6e6e6" stroke-width="1.8" stroke-linecap="round" stroke-linejoin="round"/></svg>
<svg style="left:57.5px;top:54px;" width="23" height="23" viewBox="0 0 16 16"><rect x="4.5" y="4.5" width="7" height="7" fill="#e6e6e6"/><path d="M1.5 5 L1.5 2.5 Q1.5 1.5 2.5 1.5 L5 1.5 M11 1.5 L13.5 1.5 Q14.5 1.5 14.5 2.5 L14.5 5 M14.5 11 L14.5 13.5 Q14.5 14.5 13.5 14.5 L11 14.5 M5 14.5 L2.5 14.5 Q1.5 14.5 1.5 13.5 L1.5 11" fill="none" stroke="#e6e6e6" stroke-width="1.1" stroke-linecap="round" stroke-linejoin="round" /></svg>
<div style="left:94.5px;top:52px;height:25px;line-height:25px;font-size:17px;color:#e6e6e6;white-space:nowrap;letter-spacing:0.5px;">立方体.005</div>
<svg style="left:202.0px;top:57.5px;" width="15.0" height="15.0" viewBox="0 0 15.0 15.0"><path d="M4.75 2 L10.25 7.5 L4.75 13.0" fill="none" stroke="#e0e0e0" stroke-width="1.6" stroke-linecap="round" stroke-linejoin="round"/></svg>
<svg style="left:227px;top:54px;" width="22" height="22" viewBox="0 0 16 16"><rect x="1.8" y="1.8" width="12.4" height="12.4" fill="none" stroke="#e6e6e6" stroke-width="0.9" opacity="0.65"/><circle cx="8" cy="8" r="4.4" fill="none" stroke="#e6e6e6" stroke-width="1.3"/></svg>
<div style="left:262.5px;top:52px;height:25px;line-height:25px;font-size:17px;color:#e6e6e6;white-space:nowrap;letter-spacing:0.35px;">Subdivision</div>
<svg style="left:621px;top:54px;" width="23" height="23" viewBox="0 0 16 16"><path d="M9.5 1.8 L14.2 6.5 L12.8 7 L10.8 9 L10.6 12 L4 5.4 L7 5.2 L9 3.2 Z M7 9 L2 14" fill="none" stroke="#b0b0b0" stroke-width="1.1" stroke-linecap="round" stroke-linejoin="round" /></svg>
<div style="left:55.5px;top:103.5px;width:591px;height:28px;background:#545454;border-radius:5px;"></div>
<svg style="left:62px;top:106.5px;" width="22" height="22" viewBox="0 0 16 16"><path d="M8 3 L8 13 M3 8 L13 8" fill="none" stroke="#e6e6e6" stroke-width="1.1" stroke-linecap="round" stroke-linejoin="round" /></svg>
<div style="left:164.5px;top:106px;width:400px;height:24px;line-height:24px;text-align:center;font-size:17px;color:#e6e6e6;white-space:nowrap;">添加修改器</div>
<div style="left:54.5px;top:146px;width:592px;height:387.5px;background:#3b3b3b;border-radius:6px;"></div>
<svg style="left:65.5px;top:158.0px;" width="15.0" height="15.0" viewBox="0 0 15.0 15.0"><path d="M2 4.75 L7.5 10.25 L13.0 4.75" fill="none" stroke="#d0d0d0" stroke-width="1.6" stroke-linecap="round" stroke-linejoin="round"/></svg>
<svg style="left:86px;top:154.5px;" width="22" height="22" viewBox="0 0 16 16"><path d="M2 7.5 L7.5 2 L14 2 L14 14 L2 14 Z" fill="none" stroke="#e6e6e6" stroke-width="1.1" stroke-linecap="round" stroke-linejoin="round" /><path d="M2 7.5 L2 2 L7.5 2" fill="none" stroke="#e6e6e6" stroke-width="0.7" stroke-linecap="round" stroke-linejoin="round" opacity="0.5"/></svg>
<div style="left:125px;top:152.0px;width:331px;height:27px;background:#1d1d1d;border-radius:5px 0 0 5px;"></div>
<div style="left:136px;top:153.0px;height:25px;line-height:25px;font-size:17px;color:#e6e6e6;white-space:nowrap;letter-spacing:0;">倒角</div>
<div style="left:455.70000000000005px;top:152.0px;width:28px;height:27px;background:#4772b3;"></div>
<svg style="left:458.70000000000005px;top:154.5px;" width="22" height="22" viewBox="0 0 16 16"><path d="M3 3 L13 3 M3 3 L3 13 M3 13 L13 13 M13 13 L13 6" fill="none" stroke="#ffffff" stroke-width="1.0" stroke-linecap="round" stroke-linejoin="round" /><rect x="1.4" y="1.4" width="3.2" height="3.2" fill="#4772b3" stroke="#ffffff" stroke-width="0.9"/><rect x="1.4" y="11.4" width="3.2" height="3.2" fill="#4772b3" stroke="#ffffff" stroke-width="0.9"/><rect x="11.4" y="11.4" width="3.2" height="3.2" fill="#4772b3" stroke="#ffffff" stroke-width="0.9"/><rect x="10.6" y="1" width="4.4" height="4.4" fill="#ffffff"/></svg>
<div style="left:484.60000000000014px;top:152.0px;width:28px;height:27px;background:#4772b3;"></div>
<svg style="left:487.60000000000014px;top:154.5px;" width="22" height="22" viewBox="0 0 16 16"><rect x="1.6" y="2.6" width="12.8" height="8.6" rx="1" fill="none" stroke="#ffffff" stroke-width="1.2"/><rect x="3.4" y="4.4" width="9.2" height="5" fill="#ffffff"/><path d="M8 11.2 L8 13.5 M4.5 13.8 L11.5 13.8" fill="none" stroke="#ffffff" stroke-width="1.2" stroke-linecap="round" stroke-linejoin="round" /></svg>
<div style="left:513.5px;top:152.0px;width:28px;height:27px;background:#4772b3;"></div>
<svg style="left:516.5px;top:154.5px;" width="22" height="22" viewBox="0 0 16 16"><path d="M2 4.2 L5 4.2 L6 2.6 L10 2.6 L11 4.2 L14 4.2 C14.6 4.2 15 4.6 15 5.2 L15 12.6 C15 13.2 14.6 13.6 14 13.6 L2 13.6 C1.4 13.6 1 13.2 1 12.6 L1 5.2 C1 4.6 1.4 4.2 2 4.2 Z" fill="#ffffff" /><circle cx="8" cy="8.8" r="2.7" fill="none" stroke="#4772b3" stroke-width="0.8"/><circle cx="8" cy="8.8" r="1.3" fill="#4772b3"/></svg>
<div style="left:542px;top:152.0px;width:29px;height:27px;background:#1d1d1d;border-radius:0 5px 5px 0;"></div>
<svg style="left:549.0px;top:159.0px;" width="15.0" height="15.0" viewBox="0 0 15.0 15.0"><path d="M2 4.75 L7.5 10.25 L13.0 4.75" fill="none" stroke="#e6e6e6" stroke-width="1.7" stroke-linecap="round" stroke-linejoin="round"/></svg>
<svg style="left:576px;top:155.0px;" width="21" height="21" viewBox="0 0 16 16"><path d="M3.5 3.5 L12.5 12.5 M12.5 3.5 L3.5 12.5" fill="none" stroke="#e0e0e0" stroke-width="1.4" stroke-linecap="round" stroke-linejoin="round" /></svg>
<svg style="left:613px;top:154.0px;" width="22" height="22" viewBox="0 0 16 16"><rect x="1.9" y="5.6000000000000005" width="1.2" height="1.2" fill="#808080"/><rect x="5.6000000000000005" y="5.6000000000000005" width="1.2" height="1.2" fill="#808080"/><rect x="9.3" y="5.6000000000000005" width="1.2" height="1.2" fill="#808080"/><rect x="13.0" y="5.6000000000000005" width="1.2" height="1.2" fill="#808080"/><rect x="1.9" y="9.200000000000001" width="1.2" height="1.2" fill="#808080"/><rect x="5.6000000000000005" y="9.200000000000001" width="1.2" height="1.2" fill="#808080"/><rect x="9.3" y="9.200000000000001" width="1.2" height="1.2" fill="#808080"/><rect x="13.0" y="9.200000000000001" width="1.2" height="1.2" fill="#808080"/></svg>
<div style="left:67px;top:195px;width:283px;height:27px;background:#545454;border-radius:5px 0 0 5px;"></div>
<div style="left:350px;top:195px;width:283px;height:27px;background:#4772b3;border-radius:0 5px 5px 0;"></div>
<div style="left:8px;top:197.5px;width:400px;height:24px;line-height:24px;text-align:center;font-size:17px;color:#e6e6e6;white-space:nowrap;">顶点</div>
<div style="left:291px;top:197.5px;width:400px;height:24px;line-height:24px;text-align:center;font-size:17px;color:#ffffff;white-space:nowrap;">边</div>
<div style="left:56px;top:232.0px;height:25px;line-height:25px;font-size:17px;color:#e0e0e0;white-space:nowrap;width:218px;text-align:right;">宽度类型</div>
<div style="left:289px;top:231.5px;width:315px;height:27px;background:#282828;border-radius:5px;border:1px solid #353535;box-sizing:border-box;"></div>
<div style="left:300px;top:232.5px;height:25px;line-height:25px;font-size:17px;color:#e6e6e6;white-space:nowrap;">偏移</div>
<svg style="left:588.5px;top:240.5px;" width="12" height="12" viewBox="0 0 12 12"><path d="M2 4.0 L6 8.0 L10 4.0" fill="none" stroke="#e0e0e0" stroke-width="1.6" stroke-linecap="round" stroke-linejoin="round"/></svg>
<div style="left:616.5px;top:242.0px;width:5px;height:5px;background:#e0e0e0;border-radius:3px;"></div>
<div style="left:56px;top:264.5px;height:25px;line-height:25px;font-size:17px;color:#e0e0e0;white-space:nowrap;width:218px;text-align:right;">(数)量</div>
<div style="left:289px;top:263.5px;width:315px;height:27px;background:#545454;border-radius:5px;"></div>
<div style="left:245.5px;top:266.0px;width:400px;height:24px;line-height:24px;text-align:center;font-size:17px;color:#e6e6e6;white-space:nowrap;letter-spacing:0.6px;">0.06 m</div>
<div style="left:616.5px;top:274.5px;width:5px;height:5px;background:#e0e0e0;border-radius:3px;"></div>
<div style="left:56px;top:300.5px;height:25px;line-height:25px;font-size:17px;color:#e0e0e0;white-space:nowrap;width:218px;text-align:right;">分段</div>
<div style="left:289px;top:299.5px;width:315px;height:27px;background:#545454;border-radius:5px;"></div>
<div style="left:245.5px;top:302.0px;width:400px;height:24px;line-height:24px;text-align:center;font-size:17px;color:#e6e6e6;white-space:nowrap;letter-spacing:0.6px;">40</div>
<div style="left:616.5px;top:310.5px;width:5px;height:5px;background:#e0e0e0;border-radius:3px;"></div>
<div style="left:56px;top:352.0px;height:25px;line-height:25px;font-size:17px;color:#e0e0e0;white-space:nowrap;width:218px;text-align:right;">限定方式</div>
<div style="left:289px;top:351px;width:315px;height:27px;background:#282828;border-radius:5px;border:1px solid #353535;box-sizing:border-box;"></div>
<div style="left:300px;top:352.0px;height:25px;line-height:25px;font-size:17px;color:#e6e6e6;white-space:nowrap;">角度</div>
<svg style="left:588.5px;top:360.0px;" width="12" height="12" viewBox="0 0 12 12"><path d="M2 4.0 L6 8.0 L10 4.0" fill="none" stroke="#e0e0e0" stroke-width="1.6" stroke-linecap="round" stroke-linejoin="round"/></svg>
<div style="left:616.5px;top:362.0px;width:5px;height:5px;background:#e0e0e0;border-radius:3px;"></div>
<div style="left:56px;top:387.0px;height:25px;line-height:25px;font-size:17px;color:#e0e0e0;white-space:nowrap;width:218px;text-align:right;">角度</div>
<div style="left:289px;top:386.5px;width:315px;height:27px;background:#545454;border-radius:5px;"></div>
<div style="left:245.5px;top:389.0px;width:400px;height:24px;line-height:24px;text-align:center;font-size:17px;color:#e6e6e6;white-space:nowrap;letter-spacing:0.6px;">30°</div>
<div style="left:616.5px;top:397.0px;width:5px;height:5px;background:#e0e0e0;border-radius:3px;"></div>
<svg style="left:85.5px;top:437.5px;" width="14" height="14" viewBox="0 0 14 14"><path d="M4.5 2 L9.5 7 L4.5 12" fill="none" stroke="#d0d0d0" stroke-width="1.5" stroke-linecap="round" stroke-linejoin="round"/></svg>
<div style="left:105px;top:432.0px;height:25px;line-height:25px;font-size:17px;color:#e0e0e0;white-space:nowrap;">轮廓</div>
<svg style="left:85.5px;top:473.5px;" width="14" height="14" viewBox="0 0 14 14"><path d="M4.5 2 L9.5 7 L4.5 12" fill="none" stroke="#d0d0d0" stroke-width="1.5" stroke-linecap="round" stroke-linejoin="round"/></svg>
<div style="left:105px;top:468.0px;height:25px;line-height:25px;font-size:17px;color:#e0e0e0;white-space:nowrap;">几何数据</div>
<svg style="left:85.5px;top:509.5px;" width="14" height="14" viewBox="0 0 14 14"><path d="M4.5 2 L9.5 7 L4.5 12" fill="none" stroke="#d0d0d0" stroke-width="1.5" stroke-linecap="round" stroke-linejoin="round"/></svg>
<div style="left:105px;top:504.0px;height:25px;line-height:25px;font-size:17px;color:#e0e0e0;white-space:nowrap;">着色方式</div>
<div style="left:54.5px;top:537px;width:592px;height:217.5px;background:#3b3b3b;border-radius:6px;border:1px solid #4772b3;box-sizing:border-box;"></div>
<svg style="left:65.5px;top:548.0px;" width="15.0" height="15.0" viewBox="0 0 15.0 15.0"><path d="M2 4.75 L7.5 10.25 L13.0 4.75" fill="none" stroke="#d0d0d0" stroke-width="1.6" stroke-linecap="round" stroke-linejoin="round"/></svg>
<svg style="left:86px;top:544.5px;" width="22" height="22" viewBox="0 0 16 16"><rect x="1.8" y="1.8" width="12.4" height="12.4" fill="none" stroke="#e6e6e6" stroke-width="0.9" opacity="0.65"/><circle cx="8" cy="8" r="4.4" fill="none" stroke="#e6e6e6" stroke-width="1.3"/></svg>
<div style="left:125px;top:542.0px;width:331px;height:27px;background:#1d1d1d;border-radius:5px 0 0 5px;"></div>
<div style="left:136px;top:543.0px;height:25px;line-height:25px;font-size:17px;color:#e6e6e6;white-space:nowrap;letter-spacing:0.35px;">Subdivision</div>
<div style="left:455.70000000000005px;top:542.0px;width:28px;height:27px;background:#4772b3;"></div>
<svg style="left:458.70000000000005px;top:544.5px;" width="22" height="22" viewBox="0 0 16 16"><path d="M3 3 L13 3 M3 3 L3 13 M3 13 L13 13 M13 13 L13 6" fill="none" stroke="#ffffff" stroke-width="1.0" stroke-linecap="round" stroke-linejoin="round" /><rect x="1.4" y="1.4" width="3.2" height="3.2" fill="#4772b3" stroke="#ffffff" stroke-width="0.9"/><rect x="1.4" y="11.4" width="3.2" height="3.2" fill="#4772b3" stroke="#ffffff" stroke-width="0.9"/><rect x="11.4" y="11.4" width="3.2" height="3.2" fill="#4772b3" stroke="#ffffff" stroke-width="0.9"/><rect x="10.6" y="1" width="4.4" height="4.4" fill="#ffffff"/></svg>
<div style="left:484.60000000000014px;top:542.0px;width:28px;height:27px;background:#4772b3;"></div>
<svg style="left:487.60000000000014px;top:544.5px;" width="22" height="22" viewBox="0 0 16 16"><rect x="1.6" y="2.6" width="12.8" height="8.6" rx="1" fill="none" stroke="#ffffff" stroke-width="1.2"/><rect x="3.4" y="4.4" width="9.2" height="5" fill="#ffffff"/><path d="M8 11.2 L8 13.5 M4.5 13.8 L11.5 13.8" fill="none" stroke="#ffffff" stroke-width="1.2" stroke-linecap="round" stroke-linejoin="round" /></svg>
<div style="left:513.5px;top:542.0px;width:28px;height:27px;background:#4772b3;"></div>
<svg style="left:516.5px;top:544.5px;" width="22" height="22" viewBox="0 0 16 16"><path d="M2 4.2 L5 4.2 L6 2.6 L10 2.6 L11 4.2 L14 4.2 C14.6 4.2 15 4.6 15 5.2 L15 12.6 C15 13.2 14.6 13.6 14 13.6 L2 13.6 C1.4 13.6 1 13.2 1 12.6 L1 5.2 C1 4.6 1.4 4.2 2 4.2 Z" fill="#ffffff" /><circle cx="8" cy="8.8" r="2.7" fill="none" stroke="#4772b3" stroke-width="0.8"/><circle cx="8" cy="8.8" r="1.3" fill="#4772b3"/></svg>
<div style="left:542px;top:542.0px;width:29px;height:27px;background:#1d1d1d;border-radius:0 5px 5px 0;"></div>
<svg style="left:549.0px;top:549.0px;" width="15.0" height="15.0" viewBox="0 0 15.0 15.0"><path d="M2 4.75 L7.5 10.25 L13.0 4.75" fill="none" stroke="#e6e6e6" stroke-width="1.7" stroke-linecap="round" stroke-linejoin="round"/></svg>
<svg style="left:576px;top:545.0px;" width="21" height="21" viewBox="0 0 16 16"><path d="M3.5 3.5 L12.5 12.5 M12.5 3.5 L3.5 12.5" fill="none" stroke="#e0e0e0" stroke-width="1.4" stroke-linecap="round" stroke-linejoin="round" /></svg>
<svg style="left:613px;top:544.0px;" width="22" height="22" viewBox="0 0 16 16"><rect x="1.9" y="5.6000000000000005" width="1.2" height="1.2" fill="#808080"/><rect x="5.6000000000000005" y="5.6000000000000005" width="1.2" height="1.2" fill="#808080"/><rect x="9.3" y="5.6000000000000005" width="1.2" height="1.2" fill="#808080"/><rect x="13.0" y="5.6000000000000005" width="1.2" height="1.2" fill="#808080"/><rect x="1.9" y="9.200000000000001" width="1.2" height="1.2" fill="#808080"/><rect x="5.6000000000000005" y="9.200000000000001" width="1.2" height="1.2" fill="#808080"/><rect x="9.3" y="9.200000000000001" width="1.2" height="1.2" fill="#808080"/><rect x="13.0" y="9.200000000000001" width="1.2" height="1.2" fill="#808080"/></svg>
<div style="left:67px;top:585px;width:282.5px;height:27px;background:#4772b3;border-radius:5px 0 0 5px;"></div>
<div style="left:350px;top:585px;width:283px;height:27px;background:#545454;border-radius:0 5px 5px 0;"></div>
<div style="left:8px;top:587.5px;width:400px;height:24px;line-height:24px;text-align:center;font-size:17px;color:#ffffff;white-space:nowrap;letter-spacing:0.4px;">Catmull-Clark</div>
<div style="left:291px;top:587.5px;width:400px;height:24px;line-height:24px;text-align:center;font-size:17px;color:#e6e6e6;white-space:nowrap;">简单型</div>
<div style="left:56px;top:622.0px;height:25px;line-height:25px;font-size:17px;color:#e0e0e0;white-space:nowrap;width:218px;text-align:right;">层级 视图</div>
<div style="left:289px;top:621.5px;width:315px;height:26.5px;background:#545454;border-radius:5px 5px 0 0;"></div>
<div style="left:245.5px;top:623.75px;width:400px;height:24px;line-height:24px;text-align:center;font-size:17px;color:#e6e6e6;white-space:nowrap;letter-spacing:0.6px;">2</div>
<div style="left:616.5px;top:632.0px;width:5px;height:5px;background:#e0e0e0;border-radius:3px;"></div>
<div style="left:56px;top:650.5px;height:25px;line-height:25px;font-size:17px;color:#e0e0e0;white-space:nowrap;width:218px;text-align:right;">渲染</div>
<div style="left:289px;top:649px;width:315px;height:27.5px;background:#545454;border-radius:0 0 5px 5px;"></div>
<div style="left:245.5px;top:651.75px;width:400px;height:24px;line-height:24px;text-align:center;font-size:17px;color:#e6e6e6;white-space:nowrap;letter-spacing:0.6px;">2</div>
<div style="left:616.5px;top:660.5px;width:5px;height:5px;background:#e0e0e0;border-radius:3px;"></div>
<div style="left:289px;top:690px;width:19px;height:19px;background:#4772b3;border-radius:4px;"></div>
<svg style="left:289px;top:690px;" width="19" height="19" viewBox="0 0 19 19"><path d="M4.5 9.5 L8 13.5 L14.5 5.5" fill="none" stroke="#fff" stroke-width="2.2" stroke-linecap="round" stroke-linejoin="round"/></svg>
<div style="left:313.5px;top:687px;height:25px;line-height:25px;font-size:17px;color:#e6e6e6;white-space:nowrap;">优化显示</div>
<div style="left:616.5px;top:697.0px;width:5px;height:5px;background:#e0e0e0;border-radius:3px;"></div>
<svg style="left:72.5px;top:728.0px;" width="15.0" height="15.0" viewBox="0 0 15.0 15.0"><path d="M4.75 2 L10.25 7.5 L4.75 13.0" fill="none" stroke="#d0d0d0" stroke-width="1.6" stroke-linecap="round" stroke-linejoin="round"/></svg>
<div style="left:96.5px;top:723px;height:25px;line-height:25px;font-size:17px;color:#e0e0e0;white-space:nowrap;">高级</div>
</div>
<div style="left:3px;top:1152px;width:1435px;height:84px;background:#1d1d1d;border-radius:8px;overflow:hidden;">
<div style="left:0px;top:0px;width:1435px;height:38px;background:#333333;"></div>
<div style="left:12.5px;top:5px;width:45px;height:28px;background:#262626;border-radius:5px;border:1px solid #464646;box-sizing:border-box;"></div>
<svg style="left:17px;top:7px;" width="24" height="24" viewBox="0 0 16 16"><circle cx="8" cy="8" r="6.6" fill="#e6e6e6"/><path d="M8.4 3.2 L5.6 8 L8.4 12.8" fill="none" stroke="#303030" stroke-width="1.6" stroke-linecap="round" stroke-linejoin="round" /></svg>
<svg style="left:42.5px;top:15px;" width="12" height="12" viewBox="0 0 12 12"><path d="M2 4.0 L6 8.0 L10 4.0" fill="none" stroke="#e6e6e6" stroke-width="1.8" stroke-linecap="round" stroke-linejoin="round"/></svg>
<div style="left:-107.5px;top:8px;width:400px;height:24px;line-height:24px;text-align:center;font-size:17px;color:#e0e0e0;white-space:nowrap;">视图</div>
<div style="left:-51.5px;top:8px;width:400px;height:24px;line-height:24px;text-align:center;font-size:17px;color:#e0e0e0;white-space:nowrap;">标记</div>
<div style="left:185px;top:5px;width:70px;height:28px;background:#262626;border-radius:5px;border:1px solid #464646;box-sizing:border-box;"></div>
<div style="left:196px;top:7.5px;height:25px;line-height:25px;font-size:17px;color:#e6e6e6;white-space:nowrap;">回放</div>
<svg style="left:239px;top:15px;" width="12" height="12" viewBox="0 0 12 12"><path d="M2 4.0 L6 8.0 L10 4.0" fill="none" stroke="#e6e6e6" stroke-width="1.8" stroke-linecap="round" stroke-linejoin="round"/></svg>
<div style="left:503px;top:5px;width:28px;height:28px;background:#545454;border-radius:5px 0 0 5px;"></div>
<svg style="left:504.5px;top:6.5px;" width="25" height="25" viewBox="0 0 16 16"><circle cx="8" cy="8" r="4.4" fill="none" stroke="#c0c0c0" stroke-width="1.1"/></svg>
<div style="left:531px;top:5px;width:28px;height:28px;background:#2a2a2a;border-radius:0 5px 5px 0;border:1px solid #464646;border-left:none;box-sizing:border-box;"></div>
<svg style="left:539px;top:14px;" width="12" height="12" viewBox="0 0 12 12"><path d="M2 4.0 L6 8.0 L10 4.0" fill="none" stroke="#5a5a5a" stroke-width="1.8" stroke-linecap="round" stroke-linejoin="round"/></svg>
<div style="left:567.5px;top:5px;width:200px;height:28px;background:#545454;border-radius:5px 0 0 5px;"></div>
<svg style="left:571.0px;top:8.5px;" width="21" height="21" viewBox="0 0 16 16"><path d="M3 3 L3 13" fill="none" stroke="#e6e6e6" stroke-width="1.8" stroke-linecap="round" stroke-linejoin="round" /><path d="M13 2.6 L13 13.4 L5.4 8 Z" fill="#e6e6e6" /></svg>
<div style="left:596.2px;top:5px;width:1px;height:28px;background:#484848;"></div>
<svg style="left:599.7px;top:8.5px;" width="21" height="21" viewBox="0 0 16 16"><path d="M5 3.2 L9.2 8 L5 12.8 L0.8 8 Z" fill="#e6e6e6" /><path d="M15.2 3 L15.2 13 L9.8 8 Z" fill="#e6e6e6" /></svg>
<div style="left:624.9px;top:5px;width:1px;height:28px;background:#484848;"></div>
<svg style="left:628.4px;top:8.5px;" width="21" height="21" viewBox="0 0 16 16"><path d="M12.6 2.4 L12.6 13.6 L3.2 8 Z" fill="#e6e6e6" /></svg>
<div style="left:653.5px;top:5px;width:1px;height:28px;background:#484848;"></div>
<div style="left:661px;top:11px;width:4px;height:16px;background:#e6e6e6;"></div>
<div style="left:942.5px;top:5px;width:107px;height:28px;background:#545454;border-radius:5px;"></div>
<div style="left:795px;top:8px;width:400px;height:24px;line-height:24px;text-align:center;font-size:17px;color:#e6e6e6;white-space:nowrap;letter-spacing:0.8px;">74</div>
<div style="left:1058px;top:5px;width:283px;height:28px;background:#545454;border-radius:5px;"></div>
<div style="left:1085px;top:5px;width:1px;height:28px;background:#484848;"></div>
<div style="left:1213px;top:5px;width:1px;height:28px;background:#484848;"></div>
<svg style="left:1060.5px;top:7px;" width="24" height="24" viewBox="0 0 16 16"><circle cx="7.6" cy="9" r="5.6" fill="none" stroke="#e0e0e0" stroke-width="1.1"/><path d="M7.6 5.6 L7.6 9.2 L10.4 9.2 M5.6 1.6 L9.6 1.6 M7.6 1.6 L7.6 3.4 M12 4.6 L13.6 3" fill="none" stroke="#e0e0e0" stroke-width="1.1" stroke-linecap="round" stroke-linejoin="round" /></svg>
<div style="left:1108.5px;top:7.5px;height:25px;line-height:25px;font-size:17px;color:#e6e6e6;white-space:nowrap;">起始</div>
<div style="left:987px;top:8px;width:400px;height:24px;line-height:24px;text-align:center;font-size:17px;color:#e6e6e6;white-space:nowrap;">1</div>
<div style="left:1237px;top:7.5px;height:25px;line-height:25px;font-size:17px;color:#e6e6e6;white-space:nowrap;">结束</div>
<div style="left:1288px;top:7.5px;height:25px;line-height:25px;font-size:17px;color:#e6e6e6;white-space:nowrap;letter-spacing:1px;">250</div>
<div style="left:1366px;top:5px;width:27.5px;height:28px;background:#4772b3;border-radius:5px 0 0 5px;"></div>
<svg style="left:1368px;top:7px;" width="23" height="23" viewBox="0 0 16 16"><clipPath id="ovc"><circle cx="10.2" cy="5.8" r="4.7"/></clipPath><circle cx="10.2" cy="5.8" r="4.7" fill="#ffffff"/><circle cx="5.7" cy="10.3" r="4.7" fill="none" stroke="#ffffff" stroke-width="1.2"/><circle cx="5.7" cy="10.3" r="4.7" fill="none" stroke="#4772b3" stroke-width="1.3" clip-path="url(#ovc)"/></svg>
<div style="left:1393.5px;top:5px;width:29px;height:28px;background:#262626;border-radius:0 5px 5px 0;border:1px solid #464646;border-left:none;box-sizing:border-box;"></div>
<svg style="left:1401.5px;top:15px;" width="12" height="12" viewBox="0 0 12 12"><path d="M2 4.0 L6 8.0 L10 4.0" fill="none" stroke="#e6e6e6" stroke-width="1.8" stroke-linecap="round" stroke-linejoin="round"/></svg>
<div style="left:-152.0px;top:45px;width:400px;height:24px;line-height:24px;text-align:center;font-size:17px;color:#a0a0a0;white-space:nowrap;letter-spacing:1px;">0</div>
<div style="left:-24.000799999999998px;top:45px;width:400px;height:24px;line-height:24px;text-align:center;font-size:17px;color:#a0a0a0;white-space:nowrap;letter-spacing:1px;">24</div>
<div style="left:103.9984px;top:45px;width:400px;height:24px;line-height:24px;text-align:center;font-size:17px;color:#a0a0a0;white-space:nowrap;letter-spacing:1px;">48</div>
<div style="left:231.99760000000003px;top:45px;width:400px;height:24px;line-height:24px;text-align:center;font-size:17px;color:#a0a0a0;white-space:nowrap;letter-spacing:1px;">72</div>
<div style="left:359.9968px;top:45px;width:400px;height:24px;line-height:24px;text-align:center;font-size:17px;color:#a0a0a0;white-space:nowrap;letter-spacing:1px;">96</div>
<div style="left:487.9960000000001px;top:45px;width:400px;height:24px;line-height:24px;text-align:center;font-size:17px;color:#a0a0a0;white-space:nowrap;letter-spacing:1px;">120</div>
<div style="left:615.9952000000001px;top:45px;width:400px;height:24px;line-height:24px;text-align:center;font-size:17px;color:#a0a0a0;white-space:nowrap;letter-spacing:1px;">144</div>
<div style="left:743.9944px;top:45px;width:400px;height:24px;line-height:24px;text-align:center;font-size:17px;color:#a0a0a0;white-space:nowrap;letter-spacing:1px;">168</div>
<div style="left:871.9936px;top:45px;width:400px;height:24px;line-height:24px;text-align:center;font-size:17px;color:#a0a0a0;white-space:nowrap;letter-spacing:1px;">192</div>
<div style="left:999.9928px;top:45px;width:400px;height:24px;line-height:24px;text-align:center;font-size:17px;color:#a0a0a0;white-space:nowrap;letter-spacing:1px;">216</div>
<div style="left:1127.9920000000002px;top:45px;width:400px;height:24px;line-height:24px;text-align:center;font-size:17px;color:#a0a0a0;white-space:nowrap;letter-spacing:1px;">240</div>
<div style="left:11px;top:73.5px;width:1416px;height:10px;background:#363636;border-radius:5px;"></div>
<div style="left:48px;top:74px;width:1px;height:9.5px;background:#262626;"></div>
<div style="left:112px;top:74px;width:1px;height:9.5px;background:#262626;"></div>
<div style="left:176px;top:74px;width:1px;height:9.5px;background:#262626;"></div>
<div style="left:240px;top:74px;width:1px;height:9.5px;background:#262626;"></div>
<div style="left:304px;top:74px;width:1px;height:9.5px;background:#262626;"></div>
<div style="left:368px;top:74px;width:1px;height:9.5px;background:#262626;"></div>
<div style="left:432px;top:74px;width:1px;height:9.5px;background:#262626;"></div>
<div style="left:496px;top:74px;width:1px;height:9.5px;background:#262626;"></div>
<div style="left:560px;top:74px;width:1px;height:9.5px;background:#262626;"></div>
<div style="left:624px;top:74px;width:1px;height:9.5px;background:#262626;"></div>
<div style="left:688px;top:74px;width:1px;height:9.5px;background:#262626;"></div>
<div style="left:752px;top:74px;width:1px;height:9.5px;background:#262626;"></div>
<div style="left:816px;top:74px;width:1px;height:9.5px;background:#262626;"></div>
<div style="left:880px;top:74px;width:1px;height:9.5px;background:#262626;"></div>
<div style="left:944px;top:74px;width:1px;height:9.5px;background:#262626;"></div>
<div style="left:1008px;top:74px;width:1px;height:9.5px;background:#262626;"></div>
<div style="left:1072px;top:74px;width:1px;height:9.5px;background:#262626;"></div>
<div style="left:1136px;top:74px;width:1px;height:9.5px;background:#262626;"></div>
<div style="left:1200px;top:74px;width:1px;height:9.5px;background:#262626;"></div>
<div style="left:1264px;top:74px;width:1px;height:9.5px;background:#262626;"></div>
<div style="left:1328px;top:74px;width:1px;height:9.5px;background:#262626;"></div>
<div style="left:1392px;top:74px;width:1px;height:9.5px;background:#262626;"></div>
<div style="left:1456px;top:74px;width:1px;height:9.5px;background:#262626;"></div>
<div style="left:1381px;top:74px;width:1px;height:9.5px;background:#0a0a0a;"></div>
<div style="left:53px;top:74px;width:1px;height:9.5px;background:#0a0a0a;"></div>
<div style="left:12.5px;top:76.5px;width:5px;height:5px;background:#1a1a1a;border-radius:3px;"></div>
<div style="left:1419px;top:76.5px;width:5px;height:5px;background:#1a1a1a;border-radius:3px;"></div>
<div style="left:426px;top:41px;width:33.5px;height:29px;background:#4772b3;border-radius:5px;"></div>
<svg style="left:426px;top:68px;" width="34" height="14" viewBox="0 0 34 14"><path d="M7 0 L27 0 L17 9.5 Z" fill="#4772b3"/><path d="M17 8 L17 13" stroke="#4772b3" stroke-width="2"/></svg>
<div style="left:242.5px;top:45px;width:400px;height:24px;line-height:24px;text-align:center;font-size:17px;color:#ffffff;white-space:nowrap;letter-spacing:1px;">74</div>
</div>
<div style="left:0px;top:1240px;width:2106px;height:31px;background:#161616;"></div>
<div style="left:9.5px;top:1242.5px;width:47px;height:23.5px;border-radius:6px;border:1.5px solid #9a9a9a;box-sizing:border-box;"></div>
<div style="left:15.5px;top:1243px;height:23px;line-height:23px;font-size:17px;color:#9a9a9a;white-space:nowrap;">空格</div>
<div style="left:58px;top:1243px;height:23px;line-height:23px;font-size:17px;color:#9a9a9a;white-space:nowrap;">搜索</div>
<div style="left:2030px;top:1243px;height:24px;line-height:24px;font-size:17px;color:#8a8a8a;white-space:nowrap;width:58px;text-align:right;letter-spacing:0.6px;">5.0.0</div>
<div style="left:0px;top:1264px;width:4px;height:7px;background:#7d3c98;border-radius:0 100% 0 0;"></div>
<div style="left:668px;top:507px;width:262.5px;height:680px;background:#181818;border-radius:6px;box-shadow:0 3px 10px rgba(0,0,0,0.45);border:1px solid #242424;box-sizing:border-box;"></div>
<div style="left:681px;top:515.5px;height:25px;line-height:25px;font-size:17px;color:#9a9a9a;white-space:nowrap;">添加</div>
<div style="left:679px;top:546.0px;width:241px;height:1px;background:#303030;"></div>
<div style="left:679px;top:584.5px;width:241px;height:1px;background:#303030;"></div>
<div style="left:673px;top:621px;width:251.5px;height:27px;background:#3e3e3e;border-radius:5px;"></div>
<svg style="left:683px;top:555.2px;" width="24" height="24" viewBox="0 0 16 16"><path d="M6.5 2 A4.5 4.5 0 1 0 6.5 11 A4.5 4.5 0 1 0 6.5 2 M9.8 9.8 L14 14" fill="none" stroke="#e6e6e6" stroke-width="1.3" stroke-linecap="round" stroke-linejoin="round" /></svg>
<div style="left:716px;top:554.7px;height:25px;line-height:25px;font-size:17px;color:#e6e6e6;white-space:nowrap;letter-spacing:0.2px;">搜索...</div>
<svg style="left:681.7px;top:591.7px;" width="26" height="26" viewBox="0 0 16 16"><path d="M3 3.6 L13 3.6 L8 12.8 Z" fill="none" stroke="#e6e6e6" stroke-width="2.3" stroke-linecap="round" stroke-linejoin="round" stroke-linejoin="round"/></svg>
<div style="left:716px;top:592.7px;height:25px;line-height:25px;font-size:17px;color:#e6e6e6;white-space:nowrap;letter-spacing:0.2px;">网格</div>
<svg style="left:910px;top:599.7px;" width="10" height="11" viewBox="0 0 10 11"><path d="M1 0.5 L9.5 5.5 L1 10.5 Z" fill="#8f8f8f"/></svg>
<svg style="left:681.7px;top:621.3px;" width="26" height="26" viewBox="0 0 16 16"><path d="M4.8 2.8 C9 1.4 13.4 3.2 13.4 7.6 C13.4 11.6 8 13.2 2.4 13.2" fill="none" stroke="#e6e6e6" stroke-width="2.5" stroke-linecap="round" stroke-linejoin="round" /></svg>
<div style="left:716px;top:622.3px;height:25px;line-height:25px;font-size:17px;color:#e6e6e6;white-space:nowrap;letter-spacing:0.2px;">曲线</div>
<svg style="left:910px;top:629.3px;" width="10" height="11" viewBox="0 0 10 11"><path d="M1 0.5 L9.5 5.5 L1 10.5 Z" fill="#8f8f8f"/></svg>
<svg style="left:681.7px;top:650.3px;" width="26" height="26" viewBox="0 0 16 16"><path d="M5.5 2 L14 2 C13 4 13 6 14 8 L10.5 8 C10.5 10 11 12 12 14 L2 14 C2 10 3.5 8 5.5 7 C5 5.5 5 3.5 5.5 2 Z" fill="#e6e6e6" /></svg>
<div style="left:716px;top:651.3px;height:25px;line-height:25px;font-size:17px;color:#e6e6e6;white-space:nowrap;letter-spacing:0.2px;">表(曲)面</div>
<svg style="left:910px;top:658.3px;" width="10" height="11" viewBox="0 0 10 11"><path d="M1 0.5 L9.5 5.5 L1 10.5 Z" fill="#8f8f8f"/></svg>
<svg style="left:681.7px;top:679.3px;" width="26" height="26" viewBox="0 0 16 16"><circle cx="7" cy="9.2" r="5.4" fill="#e6e6e6"/><circle cx="11.4" cy="4.8" r="3.4" fill="#e6e6e6"/><path d="M7.6 5.8 A3.6 3.6 0 0 0 11.6 9.6" fill="none" stroke="#181818" stroke-width="1.3"/></svg>
<div style="left:716px;top:680.3px;height:25px;line-height:25px;font-size:17px;color:#e6e6e6;white-space:nowrap;letter-spacing:0.2px;">融球</div>
<svg style="left:910px;top:687.3px;" width="10" height="11" viewBox="0 0 10 11"><path d="M1 0.5 L9.5 5.5 L1 10.5 Z" fill="#8f8f8f"/></svg>
<svg style="left:682px;top:707.2px;" width="26" height="28" viewBox="0 0 26 28"><text x="12.6" y="24.4" font-size="37" text-anchor="middle" fill="#e6e6e6" font-family="DejaVu Sans, Liberation Sans, sans-serif">a</text></svg>
<div style="left:716px;top:709.2px;height:25px;line-height:25px;font-size:17px;color:#e6e6e6;white-space:nowrap;letter-spacing:0.2px;">文本</div>
<svg style="left:681.7px;top:737.3px;" width="26" height="26" viewBox="0 0 16 16"><circle cx="4.5" cy="4.5" r="2.55" fill="#e6e6e6"/><circle cx="12.1" cy="8.6" r="2.55" fill="#e6e6e6"/><circle cx="5.4" cy="12.1" r="2.55" fill="#e6e6e6"/></svg>
<div style="left:716px;top:738.3px;height:25px;line-height:25px;font-size:17px;color:#e6e6e6;white-space:nowrap;letter-spacing:0.2px;">点云</div>
<svg style="left:681.7px;top:766.3px;" width="26" height="26" viewBox="0 0 16 16"><circle cx="8.4" cy="5.2" r="3.8" fill="#e6e6e6"/><circle cx="4.8" cy="10.4" r="3.6" fill="#e6e6e6"/><circle cx="10.8" cy="10" r="3.6" fill="#e6e6e6"/><circle cx="7.6" cy="9" r="3" fill="#e6e6e6"/></svg>
<div style="left:716px;top:767.3px;height:25px;line-height:25px;font-size:17px;color:#e6e6e6;white-space:nowrap;letter-spacing:0.2px;">体积</div>
<svg style="left:910px;top:774.3px;" width="10" height="11" viewBox="0 0 10 11"><path d="M1 0.5 L9.5 5.5 L1 10.5 Z" fill="#8f8f8f"/></svg>
<svg style="left:681.7px;top:795.3px;" width="26" height="26" viewBox="0 0 16 16"><path d="M2 13 C2 11 3.6 11.6 4 10 C4.6 7.4 6 5.6 8 5.6 C10.4 5.6 10.6 9.4 8.4 9.4 C6.6 9.4 7.6 13.2 10.6 13.2 C14 13.2 14.4 8 11.6 5.4 C13.6 4.6 13.6 2.6 12 2.4" fill="none" stroke="#e6e6e6" stroke-width="1.7" stroke-linecap="round" stroke-linejoin="round" /></svg>
<div style="left:716px;top:796.3px;height:25px;line-height:25px;font-size:17px;color:#e6e6e6;white-space:nowrap;letter-spacing:0.2px;">蜡笔</div>
<svg style="left:910px;top:803.3px;" width="10" height="11" viewBox="0 0 10 11"><path d="M1 0.5 L9.5 5.5 L1 10.5 Z" fill="#8f8f8f"/></svg>
<svg style="left:681.7px;top:834px;" width="26" height="26" viewBox="0 0 16 16"><circle cx="8" cy="2.8" r="2" fill="#e6e6e6"/><path d="M1.6 4.6 L6.6 6 L9.4 6 L14.4 4.2 L14.8 5.6 L10.4 7.8 L10.2 10 L12.6 14.4 L10.8 14.8 L8 10.8 L5.2 14.8 L3.4 14.4 L5.8 10 L5.6 7.8 L1.2 6 Z" fill="#e6e6e6" /></svg>
<div style="left:716px;top:835px;height:25px;line-height:25px;font-size:17px;color:#e6e6e6;white-space:nowrap;letter-spacing:0.2px;">骨架</div>
<svg style="left:681.7px;top:863px;" width="26" height="26" viewBox="0 0 16 16"><path d="M4.6 2 L8.4 2 L7.2 7 L3.4 7 Z M10.2 2 L14 2 L12.8 7 L9 7 Z M3 9 L6.8 9 L5.6 14 L1.8 14 Z M8.6 9 L12.4 9 L11.2 14 L7.4 14 Z" fill="#e6e6e6" /></svg>
<div style="left:716px;top:864px;height:25px;line-height:25px;font-size:17px;color:#e6e6e6;white-space:nowrap;letter-spacing:0.2px;">晶格</div>
<svg style="left:910px;top:871px;" width="10" height="11" viewBox="0 0 10 11"><path d="M1 0.5 L9.5 5.5 L1 10.5 Z" fill="#8f8f8f"/></svg>
<svg style="left:681.7px;top:902px;" width="26" height="26" viewBox="0 0 16 16"><path d="M7.2 3 L7.2 9.6 L2.8 13.2 M7.2 9.6 L13.8 10.6" fill="none" stroke="#e6e6e6" stroke-width="2.6" stroke-linecap="round" stroke-linejoin="round" /></svg>
<div style="left:716px;top:903px;height:25px;line-height:25px;font-size:17px;color:#e6e6e6;white-space:nowrap;letter-spacing:0.2px;">空物体</div>
<svg style="left:910px;top:910px;" width="10" height="11" viewBox="0 0 10 11"><path d="M1 0.5 L9.5 5.5 L1 10.5 Z" fill="#8f8f8f"/></svg>
<svg style="left:681.7px;top:931px;" width="26" height="26" viewBox="0 0 16 16"><rect x="1.2" y="1.2" width="13.6" height="13.6" fill="#e6e6e6"/><path d="M2.8 13 L7.2 6 L11.6 13 Z" fill="#181818" /><circle cx="11.6" cy="4.4" r="1.4" fill="#181818"/></svg>
<div style="left:716px;top:932px;height:25px;line-height:25px;font-size:17px;color:#e6e6e6;white-space:nowrap;letter-spacing:0.2px;">图像</div>
<svg style="left:910px;top:939px;" width="10" height="11" viewBox="0 0 10 11"><path d="M1 0.5 L9.5 5.5 L1 10.5 Z" fill="#8f8f8f"/></svg>
<svg style="left:681.7px;top:970px;" width="26" height="26" viewBox="0 0 16 16"><path d="M8 1.2 C11.4 1.2 13.6 3.6 13.6 6.4 C13.6 8.6 12 9.8 11 11 L5 11 C4 9.8 2.4 8.6 2.4 6.4 C2.4 3.6 4.6 1.2 8 1.2 Z" fill="#e6e6e6" /><path d="M5.6 6 L6.6 9 M10.4 6 L9.4 9 M5.6 6 L10.4 6" fill="none" stroke="#181818" stroke-width="1.0" stroke-linecap="round" stroke-linejoin="round" /><path d="M5.4 12.4 L10.6 12.4 M6.4 14.2 L9.6 14.2" fill="none" stroke="#e6e6e6" stroke-width="1.2" stroke-linecap="round" stroke-linejoin="round" /></svg>
<div style="left:716px;top:971px;height:25px;line-height:25px;font-size:17px;color:#e6e6e6;white-space:nowrap;letter-spacing:0.2px;">灯光</div>
<svg style="left:910px;top:978px;" width="10" height="11" viewBox="0 0 10 11"><path d="M1 0.5 L9.5 5.5 L1 10.5 Z" fill="#8f8f8f"/></svg>
<svg style="left:681.7px;top:999px;" width="26" height="26" viewBox="0 0 16 16"><path d="M2 6 L6 2 M2 11 L11 2 M5 13.5 L13.5 5 M10 14 L14 10" fill="none" stroke="#e6e6e6" stroke-width="2.0" stroke-linecap="round" stroke-linejoin="round" stroke-dasharray="3.4 2.4"/></svg>
<div style="left:716px;top:1000px;height:25px;line-height:25px;font-size:17px;color:#e6e6e6;white-space:nowrap;letter-spacing:0.2px;">光照探头</div>
<svg style="left:910px;top:1007px;" width="10" height="11" viewBox="0 0 10 11"><path d="M1 0.5 L9.5 5.5 L1 10.5 Z" fill="#8f8f8f"/></svg>
<svg style="left:681.7px;top:1038px;" width="26" height="26" viewBox="0 0 16 16"><circle cx="4.6" cy="4.8" r="3.2" fill="#e6e6e6"/><circle cx="11" cy="4.4" r="3.8" fill="#e6e6e6"/><circle cx="4.6" cy="4.8" r="1.1" fill="#181818"/><circle cx="11.4" cy="4" r="1.2" fill="#181818"/><path d="M3.6 8.6 L12 8.6 L12 10 L15 8.4 L15 14 L12 12.6 L12 14.4 L3.6 14.4 Z" fill="#e6e6e6" /><path d="M1.2 9.4 L3 9.4 L3 12 L1.2 12 Z" fill="#e6e6e6" /></svg>
<div style="left:716px;top:1039px;height:25px;line-height:25px;font-size:17px;color:#e6e6e6;white-space:nowrap;letter-spacing:0.2px;">摄像机</div>
<svg style="left:681.7px;top:1077px;" width="26" height="26" viewBox="0 0 16 16"><path d="M1.4 5.6 L4 5.6 L8 2 L8 14 L4 10.4 L1.4 10.4 Z" fill="#e6e6e6" /><path d="M10.2 5.4 C11.2 7 11.2 9 10.2 10.6 M12.6 3.8 C14.4 6.4 14.4 9.6 12.6 12.2" fill="none" stroke="#e6e6e6" stroke-width="1.0" stroke-linecap="round" stroke-linejoin="round" /></svg>
<div style="left:716px;top:1078px;height:25px;line-height:25px;font-size:17px;color:#e6e6e6;white-space:nowrap;letter-spacing:0.2px;">扬声器</div>
<svg style="left:681.7px;top:1116.3px;" width="26" height="26" viewBox="0 0 16 16"><path d="M3.2 2 C5.4 4 1.6 6 3.2 8 C5.4 10 1.6 12 3.2 14 M8 2 C10.2 4 6.4 6 8 8 C10.2 10 6.4 12 8 14 M12.8 2 C15 4 11.2 6 12.8 8 C15 10 11.2 12 12.8 14" fill="none" stroke="#e6e6e6" stroke-width="2.0" stroke-linecap="round" stroke-linejoin="round" /></svg>
<div style="left:716px;top:1117.3px;height:25px;line-height:25px;font-size:17px;color:#e6e6e6;white-space:nowrap;letter-spacing:0.2px;">力场</div>
<svg style="left:910px;top:1124.3px;" width="10" height="11" viewBox="0 0 10 11"><path d="M1 0.5 L9.5 5.5 L1 10.5 Z" fill="#8f8f8f"/></svg>
<svg style="left:681.7px;top:1155.3px;" width="26" height="26" viewBox="0 0 16 16"><path d="M3.2 2.8 L13.8 2.8" fill="none" stroke="#e6e6e6" stroke-width="1.5" stroke-linecap="round" stroke-linejoin="round" /><rect x="4.4" y="4.8" width="10" height="2.8" fill="#e6e6e6"/><path d="M5.2 7.6 L5.2 13.2 L13.6 13.2 L13.6 7.6" fill="none" stroke="#e6e6e6" stroke-width="1.5" stroke-linecap="round" stroke-linejoin="round" /><path d="M7.8 10 L11 10" fill="none" stroke="#e6e6e6" stroke-width="1.5" stroke-linecap="round" stroke-linejoin="round" /><path d="M2.6 5.4 L2.6 12.4" fill="none" stroke="#e6e6e6" stroke-width="1.3" stroke-linecap="round" stroke-linejoin="round" /></svg>
<div style="left:716px;top:1156.3px;height:25px;line-height:25px;font-size:17px;color:#e6e6e6;white-space:nowrap;letter-spacing:0.2px;">集合实例</div>
<svg style="left:910px;top:1163.3px;" width="10" height="11" viewBox="0 0 10 11"><path d="M1 0.5 L9.5 5.5 L1 10.5 Z" fill="#8f8f8f"/></svg>
<div style="left:679px;top:827.0px;width:241px;height:1px;background:#303030;"></div>
<div style="left:679px;top:894.8px;width:241px;height:1px;background:#303030;"></div>
<div style="left:679px;top:963.0px;width:241px;height:1px;background:#303030;"></div>
<div style="left:679px;top:1030.8px;width:241px;height:1px;background:#303030;"></div>
<div style="left:679px;top:1070.0px;width:241px;height:1px;background:#303030;"></div>
<div style="left:679px;top:1108.8px;width:241px;height:1px;background:#303030;"></div>
<div style="left:679px;top:1148.5px;width:241px;height:1px;background:#303030;"></div>
<div style="left:931.5px;top:614.5px;width:259.5px;height:232.5px;background:#181818;border-radius:6px;box-shadow:0 3px 10px rgba(0,0,0,0.45);border:1px solid #242424;box-sizing:border-box;"></div>
<div style="left:934px;top:620px;width:252px;height:26.5px;background:#404040;border-radius:5px;"></div>
<svg style="left:944.5px;top:621.5px;" width="23" height="23" viewBox="0 0 16 16"><path d="M2.4 3 L6.5 3 M9 3 L14 3" fill="none" stroke="#e6e6e6" stroke-width="0.8" stroke-linecap="round" stroke-linejoin="round" opacity="0.6"/><rect x="1.4000000000000001" y="2.2" width="1.6" height="1.6" fill="#181818" stroke="#e6e6e6" stroke-width="0.7" opacity="0.75"/><rect x="13.2" y="2.2" width="1.6" height="1.6" fill="#181818" stroke="#e6e6e6" stroke-width="0.7" opacity="0.75"/><path d="M7.6 3 C13 6 11 14 5 12.6" fill="none" stroke="#e6e6e6" stroke-width="1.3" stroke-linecap="round" stroke-linejoin="round" /><circle cx="7.6" cy="3" r="1.1" fill="#e6e6e6"/></svg>
<div style="left:977px;top:621px;height:25px;line-height:25px;font-size:17px;color:#e6e6e6;white-space:nowrap;letter-spacing:0.2px;">贝塞尔曲线</div>
<svg style="left:944.5px;top:650.3px;" width="23" height="23" viewBox="0 0 16 16"><path d="M2.4 3 L13.6 3" fill="none" stroke="#e6e6e6" stroke-width="0.8" stroke-linecap="round" stroke-linejoin="round" opacity="0.6"/><rect x="1.4000000000000001" y="2.2" width="1.6" height="1.6" fill="#181818" stroke="#e6e6e6" stroke-width="0.7" opacity="0.75"/><rect x="13.0" y="2.2" width="1.6" height="1.6" fill="#181818" stroke="#e6e6e6" stroke-width="0.7" opacity="0.75"/><circle cx="8" cy="9.4" r="4.6" fill="none" stroke="#e6e6e6" stroke-width="1.3"/><circle cx="8" cy="4.6" r="1" fill="#e6e6e6"/></svg>
<div style="left:977px;top:649.8px;height:25px;line-height:25px;font-size:17px;color:#e6e6e6;white-space:nowrap;letter-spacing:0.2px;">圆环</div>
<svg style="left:944.5px;top:689.7px;" width="23" height="23" viewBox="0 0 16 16"><path d="M2.4 2.4 L2.4 13.6 L13.6 13.6 M2.4 2.4 L13.6 2.4" fill="none" stroke="#e6e6e6" stroke-width="0.8" stroke-linecap="round" stroke-linejoin="round" opacity="0.6"/><rect x="1.5999999999999999" y="1.5999999999999999" width="1.6" height="1.6" fill="#181818" stroke="#e6e6e6" stroke-width="0.7" opacity="0.75"/><rect x="1.5999999999999999" y="12.799999999999999" width="1.6" height="1.6" fill="#181818" stroke="#e6e6e6" stroke-width="0.7" opacity="0.75"/><path d="M13.4 3.2 C7.5 3.6 7.5 12.4 13.4 12.8" fill="none" stroke="#e6e6e6" stroke-width="1.3" stroke-linecap="round" stroke-linejoin="round" /></svg>
<div style="left:977px;top:689.2px;height:25px;line-height:25px;font-size:17px;color:#e6e6e6;white-space:nowrap;letter-spacing:-0.15px;word-spacing:-1px;">NURBS 曲线</div>
<svg style="left:944.5px;top:718.5px;" width="23" height="23" viewBox="0 0 16 16"><rect x="1.5999999999999999" y="1.5999999999999999" width="1.6" height="1.6" fill="#181818" stroke="#e6e6e6" stroke-width="0.7" opacity="0.75"/><rect x="12.799999999999999" y="1.5999999999999999" width="1.6" height="1.6" fill="#181818" stroke="#e6e6e6" stroke-width="0.7" opacity="0.75"/><rect x="1.5999999999999999" y="12.799999999999999" width="1.6" height="1.6" fill="#181818" stroke="#e6e6e6" stroke-width="0.7" opacity="0.75"/><rect x="12.799999999999999" y="12.799999999999999" width="1.6" height="1.6" fill="#181818" stroke="#e6e6e6" stroke-width="0.7" opacity="0.75"/><circle cx="8" cy="8" r="4.4" fill="none" stroke="#e6e6e6" stroke-width="1.3"/></svg>
<div style="left:977px;top:718px;height:25px;line-height:25px;font-size:17px;color:#e6e6e6;white-space:nowrap;letter-spacing:-0.15px;word-spacing:-1px;">NURBS 圆环</div>
<svg style="left:944.5px;top:747.5px;" width="23" height="23" viewBox="0 0 16 16"><path d="M3.6 13 L13.6 2.6 M9.8 2.8 L13.8 2.4 L13.4 6.4 M1.8 11.6 L5.4 11.2 M4.8 11.4 L4.4 14.6" fill="none" stroke="#e6e6e6" stroke-width="1.1" stroke-linecap="round" stroke-linejoin="round" /></svg>
<div style="left:977px;top:747px;height:25px;line-height:25px;font-size:17px;color:#e6e6e6;white-space:nowrap;letter-spacing:0.2px;">路径曲线</div>
<svg style="left:944.5px;top:786.0px;" width="23" height="23" viewBox="0 0 16 16"><path d="M2.4 14 C1.6 9 3.4 4.6 6 2 M6 14 C5.6 10 7.4 7 10.4 5.4 M10 14 C10 11.6 11.6 10 14 9.6" fill="none" stroke="#e6e6e6" stroke-width="1.1" stroke-linecap="round" stroke-linejoin="round" /></svg>
<div style="left:977px;top:785.5px;height:25px;line-height:25px;font-size:17px;color:#e6e6e6;white-space:nowrap;letter-spacing:0.2px;">空白毛发</div>
<svg style="left:944.5px;top:815.3px;" width="23" height="23" viewBox="0 0 16 16"><path d="M2.4 14 C1.6 9 3.4 4.6 6 2 M6 14 C5.6 10 7.4 7 10.4 5.4 M10 14 C10 11.6 11.6 10 14 9.6" fill="none" stroke="#e6e6e6" stroke-width="1.1" stroke-linecap="round" stroke-linejoin="round" /></svg>
<div style="left:977px;top:814.8px;height:25px;line-height:25px;font-size:17px;color:#e6e6e6;white-space:nowrap;letter-spacing:0.2px;">毛发</div>
<div style="left:940px;top:681.3px;width:241px;height:1px;background:#303030;"></div>
<div style="left:940px;top:777.9px;width:241px;height:1px;background:#303030;"></div>
<div style="left:999.5px;top:661px;width:196.5px;height:45.5px;background:#1d1d1d;border-radius:6px;box-shadow:0 2px 8px rgba(0,0,0,0.5);border:1px solid #2a2a2a;box-sizing:border-box;"></div>
<div style="left:1018px;top:672.5px;height:25px;line-height:25px;font-size:17px;color:#e0e0e0;white-space:nowrap;letter-spacing:0.05px;">创建一条贝塞尔曲线.</div>
</div></body></html>
